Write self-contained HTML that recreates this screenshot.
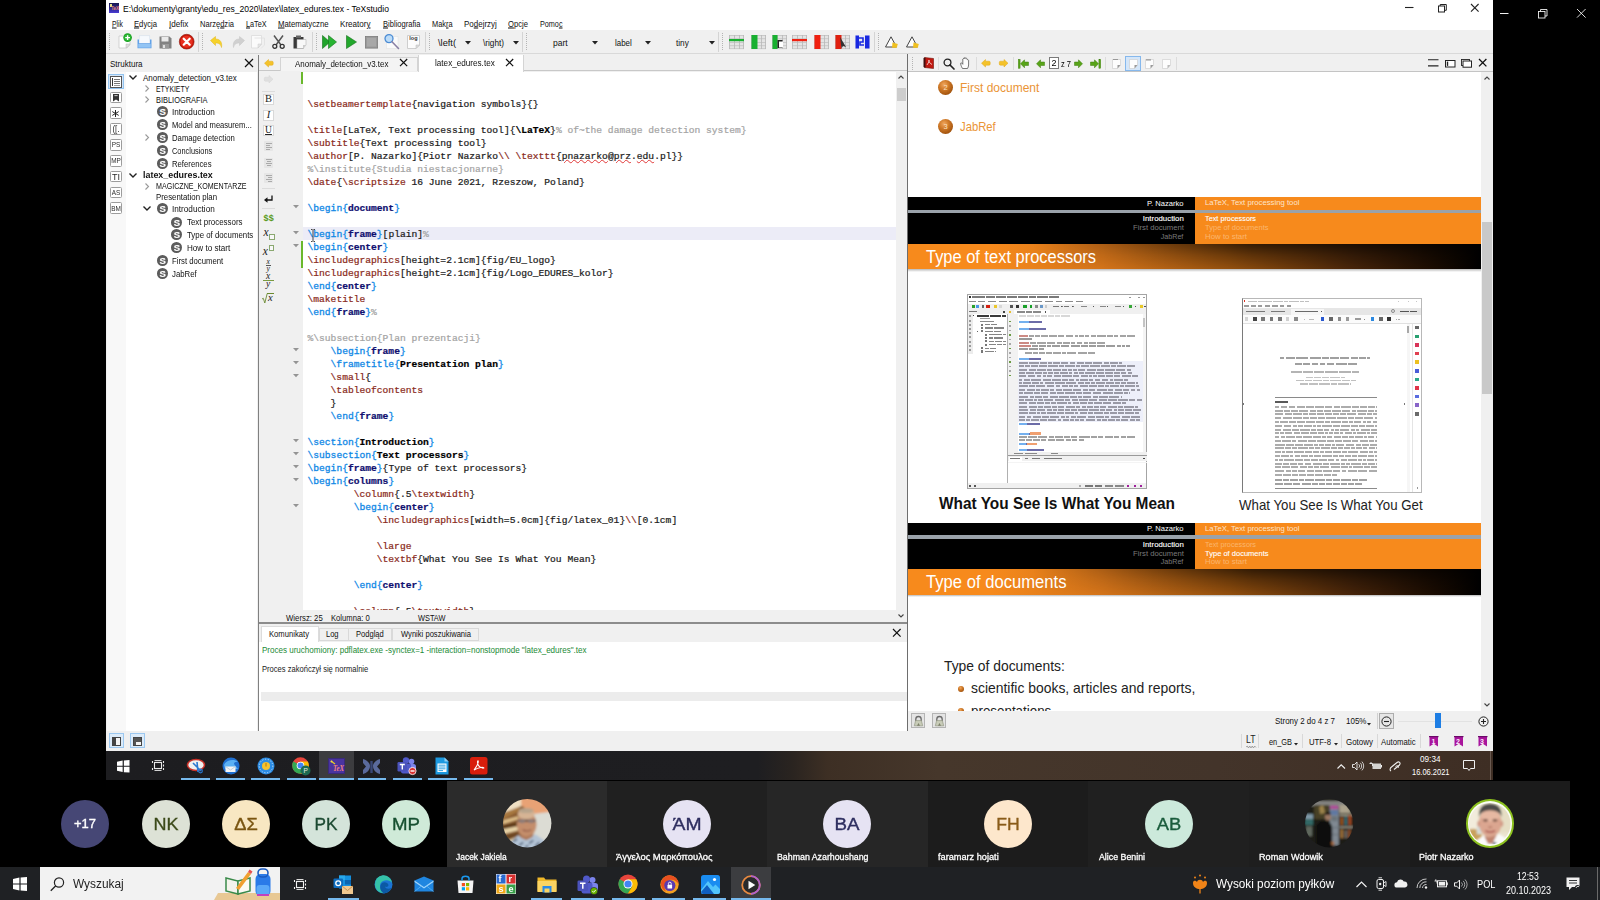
<!DOCTYPE html><html><head><meta charset="utf-8"><title>TeXstudio</title><style>
*{box-sizing:border-box;margin:0;padding:0}
html,body{width:1600px;height:900px;overflow:hidden;background:#000;font-family:"Liberation Sans",sans-serif;}
.a{position:absolute}
.t{position:absolute;white-space:nowrap;line-height:1;}
.ui{font-size:10px;color:#111;letter-spacing:-0.35px}
.mono{font-family:"Liberation Mono",monospace;font-size:9.63px;white-space:pre;position:absolute;line-height:13px;height:13px;color:#1c1c1c;letter-spacing:0;-webkit-text-stroke:0.22px currentColor}
.c{color:#8a2a20}.k{color:#1088e6;-webkit-text-stroke:0.3px #1088e6}.e{color:#101070;font-weight:bold}.b{color:#000;font-weight:bold}.g{color:#a4a4a4}
svg{position:absolute;overflow:visible}
</style></head><body><div id="root" class="a" style="left:0;top:0;width:1600px;height:900px;overflow:hidden;filter:blur(0.38px)">
<div class="a" style="left:106px;top:0px;width:1387px;height:751px;background:#f0f0f0;"></div>
<div class="a" style="left:106px;top:0px;width:1387px;height:30px;background:#ffffff;"></div>
<div class="a" style="left:108.8px;top:3px;width:10px;height:9.8px;background:linear-gradient(180deg,#16164e 0%,#2a2488 50%,#4a3cd4 100%)"></div>
<div class="a" style="left:110.3px;top:4.2px;width:1.3px;height:3px;background:#e8e08a;"></div>
<div class="t" style="left:111.2px;top:7.3px;font-size:4.5px;font-weight:bold;color:#e88a70">TeX</div>
<div class="t ui" style="left:123px;top:8.5px;transform-origin:0 50%;transform:translateY(-50%) scaleX(0.9000);font-size:9.5px;letter-spacing:0;color:#000;">E:\dokumenty\granty\edu_res_2020\latex\latex_edures.tex - TeXstudio</div>
<div class="t ui" style="left:111.6px;top:24px;transform-origin:0 50%;transform:translateY(-50%) scaleX(0.7516);font-size:9px;letter-spacing:0;"><u>P</u>lik</div>
<div class="t ui" style="left:133.75px;top:24px;transform-origin:0 50%;transform:translateY(-50%) scaleX(0.8514);font-size:9px;letter-spacing:0;"><u>E</u>dycja</div>
<div class="t ui" style="left:169.4px;top:24px;transform-origin:0 50%;transform:translateY(-50%) scaleX(0.8972);font-size:9px;letter-spacing:0;"><u>I</u>defix</div>
<div class="t ui" style="left:200.3px;top:24px;transform-origin:0 50%;transform:translateY(-50%) scaleX(0.8391);font-size:9px;letter-spacing:0;">Narzę<u>d</u>zia</div>
<div class="t ui" style="left:245.9px;top:24px;transform-origin:0 50%;transform:translateY(-50%) scaleX(0.8072);font-size:9px;letter-spacing:0;"><u>L</u>aTeX</div>
<div class="t ui" style="left:278.1px;top:24px;transform-origin:0 50%;transform:translateY(-50%) scaleX(0.8646);font-size:9px;letter-spacing:0;"><u>M</u>atematyczne</div>
<div class="t ui" style="left:340.4px;top:24px;transform-origin:0 50%;transform:translateY(-50%) scaleX(0.8967);font-size:9px;letter-spacing:0;">Kreator<u>y</u></div>
<div class="t ui" style="left:382.5px;top:24px;transform-origin:0 50%;transform:translateY(-50%) scaleX(0.8422);font-size:9px;letter-spacing:0;"><u>B</u>ibliografia</div>
<div class="t ui" style="left:431.5px;top:24px;transform-origin:0 50%;transform:translateY(-50%) scaleX(0.8238);font-size:9px;letter-spacing:0;">Mak<u>r</u>a</div>
<div class="t ui" style="left:463.75px;top:24px;transform-origin:0 50%;transform:translateY(-50%) scaleX(0.8861);font-size:9px;letter-spacing:0;">Po<u>d</u>ejrzyj</div>
<div class="t ui" style="left:508.2px;top:24px;transform-origin:0 50%;transform:translateY(-50%) scaleX(0.8464);font-size:9px;letter-spacing:0;"><u>O</u>pcje</div>
<div class="t ui" style="left:539.7px;top:24px;transform-origin:0 50%;transform:translateY(-50%) scaleX(0.8032);font-size:9px;letter-spacing:0;">Pomo<u>c</u></div>
<div class="a" style="left:106px;top:30px;width:1387px;height:24px;background:#f0f0f0;"></div>
<div class="a" style="left:106px;top:53px;width:1387px;height:1px;background:#d9d9d9;"></div>
<div class="a" style="left:109px;top:33px;width:1px;height:1px;background:#b4b4b4"></div><div class="a" style="left:109px;top:35px;width:1px;height:1px;background:#b4b4b4"></div><div class="a" style="left:109px;top:37px;width:1px;height:1px;background:#b4b4b4"></div><div class="a" style="left:109px;top:39px;width:1px;height:1px;background:#b4b4b4"></div><div class="a" style="left:109px;top:41px;width:1px;height:1px;background:#b4b4b4"></div><div class="a" style="left:109px;top:43px;width:1px;height:1px;background:#b4b4b4"></div><div class="a" style="left:109px;top:45px;width:1px;height:1px;background:#b4b4b4"></div><div class="a" style="left:109px;top:47px;width:1px;height:1px;background:#b4b4b4"></div><div class="a" style="left:109px;top:49px;width:1px;height:1px;background:#b4b4b4"></div>
<svg style="left:118px;top:35px" width="13" height="14" viewBox="0 0 13 14"><path d="M1 1H9L12 1V10L9 13H1Z" fill="#fff" stroke="#c8c8c8" stroke-width="0.8"/><path d="M8 13L12 9H8Z" fill="#ddd" stroke="#bbb" stroke-width="0.5"/><circle cx="9.6" cy="2.6" r="4.3" fill="#18a020"/><circle cx="9.6" cy="2.6" r="3.4" fill="#2cb834"/><path d="M9.6 0.2V5M7.2 2.6H12" stroke="#fff" stroke-width="1.4"/></svg>
<svg style="left:137px;top:35px" width="15" height="14" viewBox="0 0 15 14"><rect x="2.2" y="0.8" width="10.6" height="8" fill="#f6f9fd" stroke="#d0dcec" stroke-width="0.5"/><path d="M0.5 4.5V13.2H14.5V4.5H13V8.3H2V4.5Z" fill="#62a2e8"/><rect x="1.3" y="9" width="12.4" height="3.6" fill="#92c4f4"/></svg>
<svg style="left:159px;top:36px" width="13" height="13" viewBox="0 0 13 13"><path d="M0.5 0.5H10.5L12.5 2.5V12.5H0.5Z" fill="#828282"/><rect x="2.5" y="1" width="7" height="4.5" fill="#eaeaea"/><rect x="3" y="8" width="7" height="4.5" fill="#9a9a9a"/><rect x="4" y="9" width="2" height="3" fill="#e0e0e0"/></svg>
<svg style="left:179px;top:34px" width="15.4" height="15.4" viewBox="0 0 15.4 15.4"><circle cx="7.7" cy="7.7" r="7.4" fill="#c81808" stroke="#8a1008" stroke-width="0.6"/><circle cx="7.7" cy="7.7" r="6" fill="#e83020"/><path d="M4.7 4.7L10.7 10.7M10.7 4.7L4.7 10.7" stroke="#fff" stroke-width="2.2" stroke-linecap="round"/></svg>
<div class="a" style="left:198px;top:32px;width:1px;height:20px;background:#d4d4d4"></div>
<div class="a" style="left:202px;top:33px;width:1px;height:1px;background:#b4b4b4"></div><div class="a" style="left:202px;top:35px;width:1px;height:1px;background:#b4b4b4"></div><div class="a" style="left:202px;top:37px;width:1px;height:1px;background:#b4b4b4"></div><div class="a" style="left:202px;top:39px;width:1px;height:1px;background:#b4b4b4"></div><div class="a" style="left:202px;top:41px;width:1px;height:1px;background:#b4b4b4"></div><div class="a" style="left:202px;top:43px;width:1px;height:1px;background:#b4b4b4"></div><div class="a" style="left:202px;top:45px;width:1px;height:1px;background:#b4b4b4"></div><div class="a" style="left:202px;top:47px;width:1px;height:1px;background:#b4b4b4"></div><div class="a" style="left:202px;top:49px;width:1px;height:1px;background:#b4b4b4"></div>
<svg style="left:209.5px;top:35.5px" width="13" height="12" viewBox="0 0 13 12"><path d="M0.5 4.5L5.5 0.5V3C10 3 12.5 6 11.5 11.5C10.5 8 9 7 5.5 7V9.5Z" fill="#f6d22a" stroke="#e0b418" stroke-width="0.5"/></svg>
<svg style="left:231.5px;top:35.5px" width="13" height="12" viewBox="0 0 13 12"><path d="M12.5 4.5L7.5 0.5V3C3 3 0.5 6 1.5 11.5C2.5 8 4 7 7.5 7V9.5Z" fill="#d0d0d0" stroke="#c4c4c4" stroke-width="0.5"/></svg>
<svg style="left:251px;top:35px" width="14" height="14" viewBox="0 0 14 14"><path d="M0.5 0.5H10.5V9L7 13H0.5Z" fill="#fbfbfb" stroke="#dcdcdc" stroke-width="0.8"/><path d="M3.5 3H13.5V10L10 13.5" fill="none" stroke="#e0e0e0" stroke-width="0.8"/><path d="M7 13L10.5 9H7Z" fill="#e8e8e8" stroke="#c8c8c8" stroke-width="0.5"/></svg>
<svg style="left:271.5px;top:35px" width="13" height="14" viewBox="0 0 13 14"><path d="M2 0.5L9 10M11 0.5L4 10" stroke="#555" stroke-width="1.5" fill="none"/><circle cx="2.8" cy="11.3" r="2" fill="none" stroke="#333" stroke-width="1.3"/><circle cx="10.2" cy="11.3" r="2" fill="none" stroke="#333" stroke-width="1.3"/></svg>
<svg style="left:293px;top:35px" width="14" height="14" viewBox="0 0 14 14"><path d="M0.5 2H10.5V13.5H0.5Z" fill="#3a3a3a"/><rect x="3" y="0.5" width="5" height="2.6" fill="#666"/><path d="M4 4.5H13V10L10 13.5H4Z" fill="#f8f8f8" stroke="#aaa" stroke-width="0.5"/><path d="M10 13.5L13 10H10Z" fill="#ccc"/></svg>
<div class="a" style="left:312px;top:32px;width:1px;height:20px;background:#d4d4d4"></div>
<div class="a" style="left:316px;top:33px;width:1px;height:1px;background:#b4b4b4"></div><div class="a" style="left:316px;top:35px;width:1px;height:1px;background:#b4b4b4"></div><div class="a" style="left:316px;top:37px;width:1px;height:1px;background:#b4b4b4"></div><div class="a" style="left:316px;top:39px;width:1px;height:1px;background:#b4b4b4"></div><div class="a" style="left:316px;top:41px;width:1px;height:1px;background:#b4b4b4"></div><div class="a" style="left:316px;top:43px;width:1px;height:1px;background:#b4b4b4"></div><div class="a" style="left:316px;top:45px;width:1px;height:1px;background:#b4b4b4"></div><div class="a" style="left:316px;top:47px;width:1px;height:1px;background:#b4b4b4"></div><div class="a" style="left:316px;top:49px;width:1px;height:1px;background:#b4b4b4"></div>
<svg style="left:322px;top:35px" width="15" height="14" viewBox="0 0 15 14"><path d="M0.5 0.5L8 7L0.5 13.5Z" fill="#1fa32a" stroke="#127018" stroke-width="0.6"/><path d="M6.5 0.5L14.5 7L6.5 13.5Z" fill="#27b432" stroke="#127018" stroke-width="0.6"/></svg>
<svg style="left:346px;top:35px" width="11" height="14" viewBox="0 0 11 14"><path d="M0.5 0.5L10.5 7L0.5 13.5Z" fill="#22a82c" stroke="#127018" stroke-width="0.6"/></svg>
<svg style="left:364.5px;top:36px" width="13" height="12.5" viewBox="0 0 13 12.5"><rect x="0.4" y="0.4" width="12.2" height="11.7" fill="#9a9a9a" stroke="#7c7c7c" stroke-width="0.8"/><rect x="2" y="2" width="9" height="8.5" fill="#a8a8a8"/></svg>
<svg style="left:384px;top:34px" width="16" height="16" viewBox="0 0 16 16"><rect x="2.5" y="2.5" width="11.5" height="12" fill="#fafafa" stroke="#e0e0e0" stroke-width="0.5"/><circle cx="5" cy="4.6" r="4" fill="#bcdcf8" stroke="#4c8cd4" stroke-width="1.3"/><path d="M8 7.8L14.5 14.5" stroke="#8a80a4" stroke-width="1.6" stroke-linecap="round"/></svg>
<svg style="left:406.5px;top:35px" width="13" height="14" viewBox="0 0 13 14"><path d="M0.5 0.5H12.5V10L9 13.5H0.5Z" fill="#fcfcfc" stroke="#c4c4c4" stroke-width="0.8"/><path d="M9 13.5L12.5 10H9Z" fill="#ddd" stroke="#bbb" stroke-width="0.5"/></svg>
<div class="t ui" style="left:409.3px;top:38.6px;transform-origin:0 50%;transform:translateY(-50%) scaleX(1.0000);font-size:5.5px;letter-spacing:0;font-weight:bold;color:#333;">log</div>
<div class="a" style="left:425px;top:32px;width:1px;height:20px;background:#d4d4d4"></div>
<div class="a" style="left:429px;top:33px;width:1px;height:1px;background:#b4b4b4"></div><div class="a" style="left:429px;top:35px;width:1px;height:1px;background:#b4b4b4"></div><div class="a" style="left:429px;top:37px;width:1px;height:1px;background:#b4b4b4"></div><div class="a" style="left:429px;top:39px;width:1px;height:1px;background:#b4b4b4"></div><div class="a" style="left:429px;top:41px;width:1px;height:1px;background:#b4b4b4"></div><div class="a" style="left:429px;top:43px;width:1px;height:1px;background:#b4b4b4"></div><div class="a" style="left:429px;top:45px;width:1px;height:1px;background:#b4b4b4"></div><div class="a" style="left:429px;top:47px;width:1px;height:1px;background:#b4b4b4"></div><div class="a" style="left:429px;top:49px;width:1px;height:1px;background:#b4b4b4"></div>
<div class="t ui" style="left:438.4px;top:42.75px;transform-origin:0 50%;transform:translateY(-50%) scaleX(1.0284);font-size:9px;letter-spacing:0;">\left(</div>
<svg style="left:464.5px;top:40.5px" width="6" height="3.5" viewBox="0 0 6 3.5"><path d="M0 0H6L3 3.5Z" fill="#222"/></svg>
<div class="t ui" style="left:483px;top:42.75px;transform-origin:0 50%;transform:translateY(-50%) scaleX(0.9128);font-size:9px;letter-spacing:0;">\right)</div>
<svg style="left:513px;top:40.5px" width="6" height="3.5" viewBox="0 0 6 3.5"><path d="M0 0H6L3 3.5Z" fill="#222"/></svg>
<div class="a" style="left:522px;top:32px;width:1px;height:20px;background:#d4d4d4"></div>
<div class="a" style="left:526px;top:33px;width:1px;height:1px;background:#b4b4b4"></div><div class="a" style="left:526px;top:35px;width:1px;height:1px;background:#b4b4b4"></div><div class="a" style="left:526px;top:37px;width:1px;height:1px;background:#b4b4b4"></div><div class="a" style="left:526px;top:39px;width:1px;height:1px;background:#b4b4b4"></div><div class="a" style="left:526px;top:41px;width:1px;height:1px;background:#b4b4b4"></div><div class="a" style="left:526px;top:43px;width:1px;height:1px;background:#b4b4b4"></div><div class="a" style="left:526px;top:45px;width:1px;height:1px;background:#b4b4b4"></div><div class="a" style="left:526px;top:47px;width:1px;height:1px;background:#b4b4b4"></div><div class="a" style="left:526px;top:49px;width:1px;height:1px;background:#b4b4b4"></div>
<div class="t ui" style="left:552.8px;top:42.75px;transform-origin:0 50%;transform:translateY(-50%) scaleX(0.9478);font-size:9px;letter-spacing:0;">part</div>
<svg style="left:592.4px;top:40.5px" width="6" height="3.5" viewBox="0 0 6 3.5"><path d="M0 0H6L3 3.5Z" fill="#222"/></svg>
<div class="t ui" style="left:615.3px;top:42.75px;transform-origin:0 50%;transform:translateY(-50%) scaleX(0.8782);font-size:9px;letter-spacing:0;">label</div>
<svg style="left:644.5px;top:40.5px" width="6" height="3.5" viewBox="0 0 6 3.5"><path d="M0 0H6L3 3.5Z" fill="#222"/></svg>
<div class="t ui" style="left:675.6px;top:42.75px;transform-origin:0 50%;transform:translateY(-50%) scaleX(0.9139);font-size:9px;letter-spacing:0;">tiny</div>
<svg style="left:709.2px;top:40.5px" width="6" height="3.5" viewBox="0 0 6 3.5"><path d="M0 0H6L3 3.5Z" fill="#222"/></svg>
<div class="a" style="left:718px;top:32px;width:1px;height:20px;background:#d4d4d4"></div>
<div class="a" style="left:722px;top:33px;width:1px;height:1px;background:#b4b4b4"></div><div class="a" style="left:722px;top:35px;width:1px;height:1px;background:#b4b4b4"></div><div class="a" style="left:722px;top:37px;width:1px;height:1px;background:#b4b4b4"></div><div class="a" style="left:722px;top:39px;width:1px;height:1px;background:#b4b4b4"></div><div class="a" style="left:722px;top:41px;width:1px;height:1px;background:#b4b4b4"></div><div class="a" style="left:722px;top:43px;width:1px;height:1px;background:#b4b4b4"></div><div class="a" style="left:722px;top:45px;width:1px;height:1px;background:#b4b4b4"></div><div class="a" style="left:722px;top:47px;width:1px;height:1px;background:#b4b4b4"></div><div class="a" style="left:722px;top:49px;width:1px;height:1px;background:#b4b4b4"></div>
<svg style="left:728.5px;top:35px" width="15" height="14" viewBox="0 0 15 14"><rect x="0" y="0" width="15" height="14" fill="#e4e4e4"/><rect x="0" y="0" width="0.7" height="14" fill="#b0b0b0"/><rect x="5" y="0" width="0.7" height="14" fill="#b0b0b0"/><rect x="10" y="0" width="0.7" height="14" fill="#b0b0b0"/><rect x="14.3" y="0" width="0.7" height="14" fill="#b0b0b0"/><rect x="0" y="0" width="15" height="0.6" fill="#b8b8b8"/><rect x="0" y="3.5" width="15" height="0.6" fill="#b8b8b8"/><rect x="0" y="7" width="15" height="0.6" fill="#b8b8b8"/><rect x="0" y="10.5" width="15" height="0.6" fill="#b8b8b8"/><rect x="0" y="13.5" width="15" height="0.6" fill="#b8b8b8"/><rect x="0" y="4" width="15" height="2.2" fill="#18b030"/></svg>
<svg style="left:750.5px;top:35px" width="15" height="14" viewBox="0 0 15 14"><rect x="0" y="0" width="15" height="14" fill="#e4e4e4"/><rect x="0" y="0" width="0.7" height="14" fill="#b0b0b0"/><rect x="5" y="0" width="0.7" height="14" fill="#b0b0b0"/><rect x="10" y="0" width="0.7" height="14" fill="#b0b0b0"/><rect x="14.3" y="0" width="0.7" height="14" fill="#b0b0b0"/><rect x="0" y="0" width="15" height="0.6" fill="#b8b8b8"/><rect x="0" y="3.5" width="15" height="0.6" fill="#b8b8b8"/><rect x="0" y="7" width="15" height="0.6" fill="#b8b8b8"/><rect x="0" y="10.5" width="15" height="0.6" fill="#b8b8b8"/><rect x="0" y="13.5" width="15" height="0.6" fill="#b8b8b8"/><rect x="0.5" y="0" width="6" height="14" fill="#18b030"/></svg>
<svg style="left:771.5px;top:35px" width="15" height="14" viewBox="0 0 15 14"><rect x="0" y="0" width="15" height="14" fill="#e4e4e4"/><rect x="0" y="0" width="0.7" height="14" fill="#b0b0b0"/><rect x="5" y="0" width="0.7" height="14" fill="#b0b0b0"/><rect x="10" y="0" width="0.7" height="14" fill="#b0b0b0"/><rect x="14.3" y="0" width="0.7" height="14" fill="#b0b0b0"/><rect x="0" y="0" width="15" height="0.6" fill="#b8b8b8"/><rect x="0" y="3.5" width="15" height="0.6" fill="#b8b8b8"/><rect x="0" y="7" width="15" height="0.6" fill="#b8b8b8"/><rect x="0" y="10.5" width="15" height="0.6" fill="#b8b8b8"/><rect x="0" y="13.5" width="15" height="0.6" fill="#b8b8b8"/><rect x="0.5" y="0" width="5" height="14" fill="#18b030"/><rect x="5.5" y="5" width="5" height="8" fill="#222"/><rect x="7" y="6.5" width="4" height="6" fill="#fff"/></svg>
<svg style="left:791.5px;top:35px" width="15" height="14" viewBox="0 0 15 14"><rect x="0" y="0" width="15" height="14" fill="#e4e4e4"/><rect x="0" y="0" width="0.7" height="14" fill="#b0b0b0"/><rect x="5" y="0" width="0.7" height="14" fill="#b0b0b0"/><rect x="10" y="0" width="0.7" height="14" fill="#b0b0b0"/><rect x="14.3" y="0" width="0.7" height="14" fill="#b0b0b0"/><rect x="0" y="0" width="15" height="0.6" fill="#b8b8b8"/><rect x="0" y="3.5" width="15" height="0.6" fill="#b8b8b8"/><rect x="0" y="7" width="15" height="0.6" fill="#b8b8b8"/><rect x="0" y="10.5" width="15" height="0.6" fill="#b8b8b8"/><rect x="0" y="13.5" width="15" height="0.6" fill="#b8b8b8"/><rect x="0" y="4" width="15" height="2.2" fill="#f02010"/></svg>
<svg style="left:813.5px;top:35px" width="15" height="14" viewBox="0 0 15 14"><rect x="0" y="0" width="15" height="14" fill="#e4e4e4"/><rect x="0" y="0" width="0.7" height="14" fill="#b0b0b0"/><rect x="5" y="0" width="0.7" height="14" fill="#b0b0b0"/><rect x="10" y="0" width="0.7" height="14" fill="#b0b0b0"/><rect x="14.3" y="0" width="0.7" height="14" fill="#b0b0b0"/><rect x="0" y="0" width="15" height="0.6" fill="#b8b8b8"/><rect x="0" y="3.5" width="15" height="0.6" fill="#b8b8b8"/><rect x="0" y="7" width="15" height="0.6" fill="#b8b8b8"/><rect x="0" y="10.5" width="15" height="0.6" fill="#b8b8b8"/><rect x="0" y="13.5" width="15" height="0.6" fill="#b8b8b8"/><rect x="0.5" y="0" width="6" height="14" fill="#f02010"/></svg>
<svg style="left:834.5px;top:35px" width="15" height="14" viewBox="0 0 15 14"><rect x="0" y="0" width="15" height="14" fill="#e4e4e4"/><rect x="0" y="0" width="0.7" height="14" fill="#b0b0b0"/><rect x="5" y="0" width="0.7" height="14" fill="#b0b0b0"/><rect x="10" y="0" width="0.7" height="14" fill="#b0b0b0"/><rect x="14.3" y="0" width="0.7" height="14" fill="#b0b0b0"/><rect x="0" y="0" width="15" height="0.6" fill="#b8b8b8"/><rect x="0" y="3.5" width="15" height="0.6" fill="#b8b8b8"/><rect x="0" y="7" width="15" height="0.6" fill="#b8b8b8"/><rect x="0" y="10.5" width="15" height="0.6" fill="#b8b8b8"/><rect x="0" y="13.5" width="15" height="0.6" fill="#b8b8b8"/><rect x="0.5" y="0" width="6" height="14" fill="#e02010"/><path d="M5 2L11 12L8 11L6.5 13.5Z" fill="#333"/></svg>
<svg style="left:854.5px;top:35px" width="15" height="14" viewBox="0 0 15 14"><rect x="0" y="0" width="15" height="14" fill="#e8e8f4"/><rect x="0.5" y="0.5" width="3.5" height="13" fill="#1828e0"/><rect x="10" y="0.5" width="4.5" height="13" fill="#1828e0"/><path d="M4 3H8V7H5V10H9" stroke="#1828e0" stroke-width="1.6" fill="none"/></svg>
<div class="a" style="left:873.5px;top:32px;width:1px;height:20px;background:#d4d4d4"></div>
<div class="a" style="left:878px;top:33px;width:1px;height:1px;background:#b4b4b4"></div><div class="a" style="left:878px;top:35px;width:1px;height:1px;background:#b4b4b4"></div><div class="a" style="left:878px;top:37px;width:1px;height:1px;background:#b4b4b4"></div><div class="a" style="left:878px;top:39px;width:1px;height:1px;background:#b4b4b4"></div><div class="a" style="left:878px;top:41px;width:1px;height:1px;background:#b4b4b4"></div><div class="a" style="left:878px;top:43px;width:1px;height:1px;background:#b4b4b4"></div><div class="a" style="left:878px;top:45px;width:1px;height:1px;background:#b4b4b4"></div><div class="a" style="left:878px;top:47px;width:1px;height:1px;background:#b4b4b4"></div><div class="a" style="left:878px;top:49px;width:1px;height:1px;background:#b4b4b4"></div>
<svg style="left:884.5px;top:36px" width="13" height="12" viewBox="0 0 13 12"><path d="M6 0.8L11.5 11H0.5Z" fill="#fdfdfd" stroke="#444" stroke-width="1"/><path d="M7.5 6.5L12.8 8L11.8 11.8H7Z" fill="#f0c020"/></svg>
<svg style="left:905.5px;top:36px" width="13" height="12" viewBox="0 0 13 12"><path d="M6 0.8L11.5 11H0.5Z" fill="#fdfdfd" stroke="#444" stroke-width="1"/><path d="M7.5 6.5L12.8 8L11.8 11.8H7Z" fill="#f0c020"/></svg>
<div class="a" style="left:106px;top:55px;width:151px;height:676px;background:#f0f0f0;"></div>
<div class="a" style="left:126px;top:72px;width:131px;height:659px;background:#ffffff;"></div>
<div class="t ui" style="left:110px;top:63.5px;transform-origin:0 50%;transform:translateY(-50%) scaleX(0.8900);font-size:9px;letter-spacing:0;">Struktura</div>
<svg style="left:244.5px;top:59px" width="8" height="8" viewBox="0 0 8 8"><path d="M0 0L8 8M8 0L0 8" stroke="#111" stroke-width="1.2" fill="none"/></svg>
<div class="a" style="left:106.5px;top:72px;width:19px;height:659px;background:#f8f8f8;"></div>
<div class="a" style="left:108.1px;top:73.7px;width:16px;height:15.4px;border:1px solid #94c4f0;background:#d4e6f8"></div>
<div class="a" style="left:110.3px;top:76.3px;width:11.4px;height:11.4px;border:1px solid #555;background:#fff"></div>
<div class="a" style="left:112.2px;top:78.2px;width:1px;height:7.6px;background:#333;"></div>
<div class="a" style="left:114.2px;top:79px;width:5.5px;height:1px;background:#777;"></div>
<div class="a" style="left:114.2px;top:81px;width:5.5px;height:1px;background:#777;"></div>
<div class="a" style="left:114.2px;top:83px;width:5.5px;height:1px;background:#777;"></div>
<div class="a" style="left:114.2px;top:85px;width:5.5px;height:0.8px;background:#999;"></div>
<div class="a" style="left:109.8px;top:91.5px;width:11.8px;height:11.8px;border:1px solid #9c9c9c;background:#fff;border-radius:1.5px"></div>
<svg style="left:112.7px;top:93.60000000000001px" width="6" height="7.6" viewBox="0 0 6 7.6"><path d="M0 0H6V7.6L3 5.4L0 7.6Z" fill="#333"/><rect x="1.4" y="1.2" width="3.2" height="0.9" fill="#ddd"/></svg>
<div class="a" style="left:109.8px;top:107.39999999999999px;width:11.8px;height:11.8px;border:1px solid #9c9c9c;background:#fff;border-radius:1.5px"></div>
<svg style="left:112.2px;top:109.8px" width="7" height="7" viewBox="0 0 7 7"><path d="M3.5 0V7M0.3 1.6L6.7 5.4M6.7 1.6L0.3 5.4" stroke="#222" stroke-width="1"/></svg>
<div class="a" style="left:109.8px;top:123.19999999999999px;width:11.8px;height:11.8px;border:1px solid #9c9c9c;background:#fff;border-radius:1.5px"></div>
<div class="t " style="left:-384.3px;width:1000px;text-align:center;top:129.4px;transform-origin:50% 50%;transform:translateY(-50%) scaleX(0.9500);font-size:8.5px;letter-spacing:0;color:#2a2a2a;">([.</div>
<div class="a" style="left:109.8px;top:139.1px;width:11.8px;height:11.8px;border:1px solid #9c9c9c;background:#fff;border-radius:1.5px"></div>
<div class="t " style="left:-384.3px;width:1000px;text-align:center;top:145.3px;transform-origin:50% 50%;transform:translateY(-50%) scaleX(0.8200);font-size:7.8px;letter-spacing:0;color:#2a2a2a;">PS</div>
<div class="a" style="left:109.8px;top:155.1px;width:11.8px;height:11.8px;border:1px solid #9c9c9c;background:#fff;border-radius:1.5px"></div>
<div class="t " style="left:-384.3px;width:1000px;text-align:center;top:161.3px;transform-origin:50% 50%;transform:translateY(-50%) scaleX(0.8200);font-size:7.8px;letter-spacing:0;color:#2a2a2a;">MP</div>
<div class="a" style="left:109.8px;top:170.7px;width:11.8px;height:11.8px;border:1px solid #9c9c9c;background:#fff;border-radius:1.5px"></div>
<div class="t " style="left:-384.3px;width:1000px;text-align:center;top:176.9px;transform-origin:50% 50%;transform:translateY(-50%) scaleX(0.9500);font-size:9.5px;letter-spacing:0;color:#2a2a2a;">TI</div>
<div class="a" style="left:109.8px;top:186.6px;width:11.8px;height:11.8px;border:1px solid #9c9c9c;background:#fff;border-radius:1.5px"></div>
<div class="t " style="left:-384.3px;width:1000px;text-align:center;top:192.8px;transform-origin:50% 50%;transform:translateY(-50%) scaleX(0.8200);font-size:7.8px;letter-spacing:0;color:#2a2a2a;">AS</div>
<div class="a" style="left:109.8px;top:202.4px;width:11.8px;height:11.8px;border:1px solid #9c9c9c;background:#fff;border-radius:1.5px"></div>
<div class="t " style="left:-384.3px;width:1000px;text-align:center;top:208.60000000000002px;transform-origin:50% 50%;transform:translateY(-50%) scaleX(0.8200);font-size:7.8px;letter-spacing:0;color:#2a2a2a;">BM</div>
<svg style="left:128.5px;top:75.0px" width="8" height="5" viewBox="0 0 8 5"><path d="M0.5 0.5L4 4L7.5 0.5" stroke="#222" stroke-width="1.4" fill="none"/></svg>
<div class="t ui" style="left:142.5px;top:77.8px;transform-origin:0 50%;transform:translateY(-50%) scaleX(0.8881);font-size:9px;letter-spacing:0;">Anomaly_detection_v3.tex</div>
<svg style="left:145px;top:85.0px" width="5" height="7" viewBox="0 0 5 7"><path d="M0.5 0.5L3.5 3.5L0.5 6.5" stroke="#999" stroke-width="1.1" fill="none"/></svg>
<div class="t ui" style="left:156px;top:88.8px;transform-origin:0 50%;transform:translateY(-50%) scaleX(0.7642);font-size:9px;letter-spacing:0;">ETYKIETY</div>
<svg style="left:145px;top:95.7px" width="5" height="7" viewBox="0 0 5 7"><path d="M0.5 0.5L3.5 3.5L0.5 6.5" stroke="#999" stroke-width="1.1" fill="none"/></svg>
<div class="t ui" style="left:156px;top:99.5px;transform-origin:0 50%;transform:translateY(-50%) scaleX(0.8238);font-size:9px;letter-spacing:0;">BIBLIOGRAFIA</div>
<div class="a" style="left:157.0px;top:105.8px;width:11.2px;height:11.2px;border-radius:50%;background:radial-gradient(circle,#6a6a6a 0%,#5a5a5a 60%,#484848 100%)"></div><div class="t" style="left:159.45px;top:106.7px;font-size:9.5px;font-weight:bold;color:#fff;-webkit-text-stroke:0.1px #fff">S</div>
<div class="t ui" style="left:172px;top:111.5px;transform-origin:0 50%;transform:translateY(-50%) scaleX(0.9090);font-size:9px;letter-spacing:0;">Introduction</div>
<div class="a" style="left:157.0px;top:118.8px;width:11.2px;height:11.2px;border-radius:50%;background:radial-gradient(circle,#6a6a6a 0%,#5a5a5a 60%,#484848 100%)"></div><div class="t" style="left:159.45px;top:119.7px;font-size:9.5px;font-weight:bold;color:#fff;-webkit-text-stroke:0.1px #fff">S</div>
<div class="t ui" style="left:172px;top:124.5px;transform-origin:0 50%;transform:translateY(-50%) scaleX(0.8435);font-size:9px;letter-spacing:0;">Model and measurem...</div>
<svg style="left:145px;top:133.7px" width="5" height="7" viewBox="0 0 5 7"><path d="M0.5 0.5L3.5 3.5L0.5 6.5" stroke="#999" stroke-width="1.1" fill="none"/></svg>
<div class="a" style="left:157.0px;top:131.79999999999998px;width:11.2px;height:11.2px;border-radius:50%;background:radial-gradient(circle,#6a6a6a 0%,#5a5a5a 60%,#484848 100%)"></div><div class="t" style="left:159.45px;top:132.7px;font-size:9.5px;font-weight:bold;color:#fff;-webkit-text-stroke:0.1px #fff">S</div>
<div class="t ui" style="left:172px;top:137.5px;transform-origin:0 50%;transform:translateY(-50%) scaleX(0.8590);font-size:9px;letter-spacing:0;">Damage detection</div>
<div class="a" style="left:157.0px;top:144.79999999999998px;width:11.2px;height:11.2px;border-radius:50%;background:radial-gradient(circle,#6a6a6a 0%,#5a5a5a 60%,#484848 100%)"></div><div class="t" style="left:159.45px;top:145.7px;font-size:9.5px;font-weight:bold;color:#fff;-webkit-text-stroke:0.1px #fff">S</div>
<div class="t ui" style="left:172px;top:150.5px;transform-origin:0 50%;transform:translateY(-50%) scaleX(0.8210);font-size:9px;letter-spacing:0;">Conclusions</div>
<div class="a" style="left:157.0px;top:157.79999999999998px;width:11.2px;height:11.2px;border-radius:50%;background:radial-gradient(circle,#6a6a6a 0%,#5a5a5a 60%,#484848 100%)"></div><div class="t" style="left:159.45px;top:158.7px;font-size:9.5px;font-weight:bold;color:#fff;-webkit-text-stroke:0.1px #fff">S</div>
<div class="t ui" style="left:172px;top:163.5px;transform-origin:0 50%;transform:translateY(-50%) scaleX(0.8582);font-size:9px;letter-spacing:0;">References</div>
<svg style="left:128.5px;top:172.5px" width="8" height="5" viewBox="0 0 8 5"><path d="M0.5 0.5L4 4L7.5 0.5" stroke="#222" stroke-width="1.4" fill="none"/></svg>
<div class="t ui" style="left:142.5px;top:175.3px;transform-origin:0 50%;transform:translateY(-50%) scaleX(0.9888);font-size:9px;letter-spacing:0;font-weight:bold;">latex_edures.tex</div>
<svg style="left:145px;top:182.5px" width="5" height="7" viewBox="0 0 5 7"><path d="M0.5 0.5L3.5 3.5L0.5 6.5" stroke="#999" stroke-width="1.1" fill="none"/></svg>
<div class="t ui" style="left:156px;top:186.3px;transform-origin:0 50%;transform:translateY(-50%) scaleX(0.7915);font-size:9px;letter-spacing:0;">MAGICZNE_KOMENTARZE</div>
<div class="t ui" style="left:156px;top:197.0px;transform-origin:0 50%;transform:translateY(-50%) scaleX(0.8708);font-size:9px;letter-spacing:0;">Presentation plan</div>
<svg style="left:143px;top:206.2px" width="8" height="5" viewBox="0 0 8 5"><path d="M0.5 0.5L4 4L7.5 0.5" stroke="#222" stroke-width="1.4" fill="none"/></svg>
<div class="a" style="left:157.0px;top:203.29999999999998px;width:11.2px;height:11.2px;border-radius:50%;background:radial-gradient(circle,#6a6a6a 0%,#5a5a5a 60%,#484848 100%)"></div><div class="t" style="left:159.45px;top:204.2px;font-size:9.5px;font-weight:bold;color:#fff;-webkit-text-stroke:0.1px #fff">S</div>
<div class="t ui" style="left:172px;top:209.0px;transform-origin:0 50%;transform:translateY(-50%) scaleX(0.9090);font-size:9px;letter-spacing:0;">Introduction</div>
<div class="a" style="left:171.2px;top:216.6px;width:11.2px;height:11.2px;border-radius:50%;background:radial-gradient(circle,#6a6a6a 0%,#5a5a5a 60%,#484848 100%)"></div><div class="t" style="left:173.64999999999998px;top:217.5px;font-size:9.5px;font-weight:bold;color:#fff;-webkit-text-stroke:0.1px #fff">S</div>
<div class="t ui" style="left:186.5px;top:222.3px;transform-origin:0 50%;transform:translateY(-50%) scaleX(0.8806);font-size:9px;letter-spacing:0;">Text processors</div>
<div class="a" style="left:171.2px;top:229.29999999999998px;width:11.2px;height:11.2px;border-radius:50%;background:radial-gradient(circle,#6a6a6a 0%,#5a5a5a 60%,#484848 100%)"></div><div class="t" style="left:173.64999999999998px;top:230.2px;font-size:9.5px;font-weight:bold;color:#fff;-webkit-text-stroke:0.1px #fff">S</div>
<div class="t ui" style="left:186.5px;top:235.0px;transform-origin:0 50%;transform:translateY(-50%) scaleX(0.8712);font-size:9px;letter-spacing:0;">Type of documents</div>
<div class="a" style="left:171.2px;top:242.29999999999998px;width:11.2px;height:11.2px;border-radius:50%;background:radial-gradient(circle,#6a6a6a 0%,#5a5a5a 60%,#484848 100%)"></div><div class="t" style="left:173.64999999999998px;top:243.2px;font-size:9.5px;font-weight:bold;color:#fff;-webkit-text-stroke:0.1px #fff">S</div>
<div class="t ui" style="left:186.5px;top:248.0px;transform-origin:0 50%;transform:translateY(-50%) scaleX(0.9008);font-size:9px;letter-spacing:0;">How to start</div>
<div class="a" style="left:157.0px;top:255.29999999999998px;width:11.2px;height:11.2px;border-radius:50%;background:radial-gradient(circle,#6a6a6a 0%,#5a5a5a 60%,#484848 100%)"></div><div class="t" style="left:159.45px;top:256.2px;font-size:9.5px;font-weight:bold;color:#fff;-webkit-text-stroke:0.1px #fff">S</div>
<div class="t ui" style="left:172px;top:261.0px;transform-origin:0 50%;transform:translateY(-50%) scaleX(0.8610);font-size:9px;letter-spacing:0;">First document</div>
<div class="a" style="left:157.0px;top:268.3px;width:11.2px;height:11.2px;border-radius:50%;background:radial-gradient(circle,#6a6a6a 0%,#5a5a5a 60%,#484848 100%)"></div><div class="t" style="left:159.45px;top:269.2px;font-size:9.5px;font-weight:bold;color:#fff;-webkit-text-stroke:0.1px #fff">S</div>
<div class="t ui" style="left:172px;top:274.0px;transform-origin:0 50%;transform:translateY(-50%) scaleX(0.8679);font-size:9px;letter-spacing:0;">JabRef</div>
<div class="a" style="left:259px;top:55px;width:649px;height:17px;background:#f0f0f0;"></div>
<div class="a" style="left:259px;top:72px;width:19px;height:551px;background:#f0f0f0;"></div>
<div class="a" style="left:278px;top:72px;width:25px;height:540px;background:#f0f0f0;"></div>
<div class="a" style="left:303px;top:72px;width:593px;height:540px;background:#ffffff;"></div>
<div class="a" style="left:896px;top:72px;width:11px;height:551px;background:#f0f0f0;"></div>
<div class="a" style="left:907px;top:55px;width:1px;height:696px;background:#808080;"></div>
<div class="a" style="left:303px;top:227px;width:593px;height:13.3px;background:#ececf7;"></div>
<div class="a" style="left:300.8px;top:72px;width:2px;height:12px;background:#6ab82c;"></div>
<div class="a" style="left:300.8px;top:241px;width:2px;height:26.5px;background:#6ab82c;"></div>
<div class="a" style="left:304px;top:72px;width:592px;height:540px;overflow:hidden">
<div class="mono" style="left:3.50px;top:26.2px"><span class="c">\setbeamertemplate</span>{navigation symbols}{}</div>
<div class="mono" style="left:3.50px;top:52.2px"><span class="c">\title</span>[LaTeX, Text processing tool]{<span class="b">\LaTeX</span>}<span class="g">% of~the damage detection system}</span></div>
<div class="mono" style="left:3.50px;top:65.2px"><span class="c">\subtitle</span>{Text processing tool}</div>
<div class="mono" style="left:3.50px;top:78.2px"><span class="c">\author</span>[P. Nazarko]{Piotr Nazarko<span class="c">\\</span> <span class="c">\texttt</span>{<span style="text-decoration:underline wavy #e03838 0.6px;text-underline-offset:0.2px">pnazarko</span>@<span style="text-decoration:underline wavy #e03838 0.6px;text-underline-offset:0.2px">prz</span>.<span style="text-decoration:underline wavy #e03838 0.6px;text-underline-offset:0.2px">edu</span>.pl}}</div>
<div class="mono" style="left:3.50px;top:91.2px"><span class="g">%\institute{Studia niestacjonarne}</span></div>
<div class="mono" style="left:3.50px;top:104.2px"><span class="c">\date</span>{<span class="c">\scriptsize</span> 16 June 2021, Rzeszow, Poland}</div>
<div class="mono" style="left:3.50px;top:130.2px"><span class="k">\begin{</span><span class="e">document</span><span class="k">}</span></div>
<div class="mono" style="left:3.50px;top:156.2px"><span class="k">\begin{</span><span class="e">frame</span><span class="k">}</span>[plain]<span class="g">%</span></div>
<div class="mono" style="left:3.50px;top:169.2px"><span class="k">\begin{</span><span class="e">center</span><span class="k">}</span></div>
<div class="mono" style="left:3.50px;top:182.2px"><span class="c">\includegraphics</span>[height=2.1cm]{fig/EU_logo}</div>
<div class="mono" style="left:3.50px;top:195.2px"><span class="c">\includegraphics</span>[height=2.1cm]{fig/Logo_EDURES_kolor}</div>
<div class="mono" style="left:3.50px;top:208.2px"><span class="k">\end{</span><span class="e">center</span><span class="k">}</span></div>
<div class="mono" style="left:3.50px;top:221.2px"><span class="c">\maketitle</span></div>
<div class="mono" style="left:3.50px;top:234.2px"><span class="k">\end{</span><span class="e">frame</span><span class="k">}</span><span class="g">%</span></div>
<div class="mono" style="left:3.50px;top:260.2px"><span class="g">%\subsection{Plan prezentacji}</span></div>
<div class="mono" style="left:26.60px;top:273.2px"><span class="k">\begin{</span><span class="e">frame</span><span class="k">}</span></div>
<div class="mono" style="left:26.60px;top:286.2px"><span class="k">\frametitle{</span><span class="b">Presentation plan</span><span class="k">}</span></div>
<div class="mono" style="left:26.60px;top:299.2px"><span class="c">\small</span>{</div>
<div class="mono" style="left:26.60px;top:312.2px"><span class="c">\tableofcontents</span></div>
<div class="mono" style="left:26.60px;top:325.2px">}</div>
<div class="mono" style="left:26.60px;top:338.2px"><span class="k">\end{</span><span class="e">frame</span><span class="k">}</span></div>
<div class="mono" style="left:3.50px;top:364.2px"><span class="k">\section{</span><span class="b">Introduction</span><span class="k">}</span></div>
<div class="mono" style="left:3.50px;top:377.2px"><span class="k">\subsection{</span><span class="b">Text processors</span><span class="k">}</span></div>
<div class="mono" style="left:3.50px;top:390.2px"><span class="k">\begin{</span><span class="e">frame</span><span class="k">}</span>{Type of text processors}</div>
<div class="mono" style="left:3.50px;top:403.2px"><span class="k">\begin{</span><span class="e">columns</span><span class="k">}</span></div>
<div class="mono" style="left:49.70px;top:416.2px"><span class="c">\column</span>{.5<span class="c">\textwidth</span>}</div>
<div class="mono" style="left:49.70px;top:429.2px"><span class="k">\begin{</span><span class="e">center</span><span class="k">}</span></div>
<div class="mono" style="left:72.80px;top:442.2px"><span class="c">\includegraphics</span>[width=5.0cm]{fig/latex_01}<span class="c">\\</span>[0.1cm]</div>
<div class="mono" style="left:72.80px;top:468.2px"><span class="c">\large</span></div>
<div class="mono" style="left:72.80px;top:481.2px"><span class="c">\textbf</span>{What You See Is What You Mean}</div>
<div class="mono" style="left:49.70px;top:507.2px"><span class="k">\end{</span><span class="e">center</span><span class="k">}</span></div>
<div class="mono" style="left:49.70px;top:533.2px"><span class="c">\column</span>{.5<span class="c">\textwidth</span>}</div>
</div>
<svg style="left:310.5px;top:228.5px" width="4" height="13" viewBox="0 0 4 13"><path d="M0 0.5H1.5M2.5 0.5H4M0 12.5H1.5M2.5 12.5H4M2 0.8V12.2" stroke="#333" stroke-width="0.9" fill="none"/></svg>
<svg style="left:292.5px;top:204.9px" width="6" height="3.2" viewBox="0 0 6 3.2"><path d="M0 0H6L3 3.2Z" fill="#949494"/></svg>
<svg style="left:292.5px;top:230.9px" width="6" height="3.2" viewBox="0 0 6 3.2"><path d="M0 0H6L3 3.2Z" fill="#949494"/></svg>
<svg style="left:292.5px;top:243.9px" width="6" height="3.2" viewBox="0 0 6 3.2"><path d="M0 0H6L3 3.2Z" fill="#949494"/></svg>
<svg style="left:292.5px;top:347.9px" width="6" height="3.2" viewBox="0 0 6 3.2"><path d="M0 0H6L3 3.2Z" fill="#949494"/></svg>
<svg style="left:292.5px;top:360.9px" width="6" height="3.2" viewBox="0 0 6 3.2"><path d="M0 0H6L3 3.2Z" fill="#949494"/></svg>
<svg style="left:292.5px;top:373.9px" width="6" height="3.2" viewBox="0 0 6 3.2"><path d="M0 0H6L3 3.2Z" fill="#949494"/></svg>
<svg style="left:292.5px;top:438.9px" width="6" height="3.2" viewBox="0 0 6 3.2"><path d="M0 0H6L3 3.2Z" fill="#949494"/></svg>
<svg style="left:292.5px;top:451.9px" width="6" height="3.2" viewBox="0 0 6 3.2"><path d="M0 0H6L3 3.2Z" fill="#949494"/></svg>
<svg style="left:292.5px;top:464.9px" width="6" height="3.2" viewBox="0 0 6 3.2"><path d="M0 0H6L3 3.2Z" fill="#949494"/></svg>
<svg style="left:292.5px;top:477.9px" width="6" height="3.2" viewBox="0 0 6 3.2"><path d="M0 0H6L3 3.2Z" fill="#949494"/></svg>
<svg style="left:292.5px;top:503.9px" width="6" height="3.2" viewBox="0 0 6 3.2"><path d="M0 0H6L3 3.2Z" fill="#949494"/></svg>
<div class="a" style="left:259px;top:70px;width:649px;height:1px;background:#c8c8c8;"></div>
<svg style="left:264px;top:58.5px" width="9.5" height="8.5" viewBox="0 0 9.5 8.5"><path d="M0.5 4.2L4.5 0.5V2.2H8A1.2 1.2 0 0 1 9.2 3.4V5A1.2 1.2 0 0 1 8 6.2H4.5V8Z" fill="#f4c22a" stroke="#e0a818" stroke-width="0.5"/></svg>
<svg style="left:264px;top:75px" width="9.5" height="8.5" viewBox="0 0 9.5 8.5"><path d="M9 4.2L5 0.5V2.2H1.5A1.2 1.2 0 0 0 0.3 3.4V5A1.2 1.2 0 0 0 1.5 6.2H5V8Z" fill="#e0e0e0" stroke="#d4d4d4" stroke-width="0.5"/></svg>
<div class="a" style="left:280px;top:57px;width:138px;height:14px;background:#f4f4f4;border:1px solid #d4d4d4;border-bottom:none"></div>
<div class="t ui" style="left:295.4px;top:63.75px;transform-origin:0 50%;transform:translateY(-50%) scaleX(0.8847);font-size:9px;letter-spacing:0;">Anomaly_detection_v3.tex</div>
<svg style="left:400.15px;top:59.4px" width="7.2" height="7.2" viewBox="0 0 7.2 7.2"><path d="M0 0L7.2 7.2M7.2 0L0 7.2" stroke="#111" stroke-width="1.2" fill="none"/></svg>
<div class="a" style="left:418px;top:55px;width:106px;height:17px;background:#fff;border-left:1px solid #d4d4d4;border-right:1px solid #d4d4d4"></div>
<div class="t ui" style="left:435.25px;top:62.75px;transform-origin:0 50%;transform:translateY(-50%) scaleX(0.9047);font-size:9px;letter-spacing:0;">latex_edures.tex</div>
<svg style="left:506.4px;top:58.699999999999996px" width="7.2" height="7.2" viewBox="0 0 7.2 7.2"><path d="M0 0L7.2 7.2M7.2 0L0 7.2" stroke="#111" stroke-width="1.2" fill="none"/></svg>
<div class="a" style="left:908px;top:55px;width:585px;height:16px;background:#f0f0f0;"></div>
<div class="a" style="left:908px;top:71px;width:585px;height:1px;background:#c4c4c4;"></div>
<div class="a" style="left:912px;top:57px;width:1px;height:1px;background:#b4b4b4"></div><div class="a" style="left:912px;top:59px;width:1px;height:1px;background:#b4b4b4"></div><div class="a" style="left:912px;top:61px;width:1px;height:1px;background:#b4b4b4"></div><div class="a" style="left:912px;top:63px;width:1px;height:1px;background:#b4b4b4"></div><div class="a" style="left:912px;top:65px;width:1px;height:1px;background:#b4b4b4"></div><div class="a" style="left:912px;top:67px;width:1px;height:1px;background:#b4b4b4"></div><div class="a" style="left:912px;top:69px;width:1px;height:1px;background:#b4b4b4"></div>
<svg style="left:923px;top:57px" width="11" height="12" viewBox="0 0 11 12"><path d="M1.5 0.5L10.5 1.5V11.5L1.5 10.5Z" fill="#c01810" stroke="#701008" stroke-width="0.6"/><path d="M0.5 1L2.5 0.5V10.8L0.5 10Z" fill="#401010"/><path d="M4 8C6 5 6.5 3.5 6 3C5.3 3.2 6 6 9 7.5" stroke="#fff" stroke-width="0.7" fill="none"/></svg>
<div class="a" style="left:938px;top:57px;width:1px;height:13px;background:#dcdcdc"></div>
<svg style="left:942.5px;top:57.5px" width="12" height="12" viewBox="0 0 12 12"><circle cx="4.5" cy="4.5" r="3.4" fill="none" stroke="#222" stroke-width="1.3"/><path d="M7 7L11 11" stroke="#222" stroke-width="1.7" stroke-linecap="round"/></svg>
<svg style="left:960px;top:57px" width="10" height="12" viewBox="0 0 10 12"><path d="M2.5 11.5C1 9 0.5 7 0.8 6C1.5 5.5 2.2 6.3 2.8 7.3V2C3.4 1.2 4 1.4 4.2 2V0.9C5 0.3 5.6 0.6 5.7 1.2V1.6C6.4 1 7 1.4 7.2 2V2.8C7.9 2.4 8.5 2.8 8.6 3.5V8C8.6 9.5 8 10.5 7.5 11.5Z" fill="#fdfdfd" stroke="#555" stroke-width="0.8"/></svg>
<div class="a" style="left:975.5px;top:57px;width:1px;height:13px;background:#dcdcdc"></div>
<svg style="left:981px;top:59px" width="9.5" height="8.5" viewBox="0 0 9.5 8.5"><path d="M0.5 4.2L4.5 0.5V2.2H8A1.2 1.2 0 0 1 9.2 3.4V5A1.2 1.2 0 0 1 8 6.2H4.5V8Z" fill="#f4c22a" stroke="#e0a818" stroke-width="0.5"/></svg>
<svg style="left:998.5px;top:59px" width="9.5" height="8.5" viewBox="0 0 9.5 8.5"><path d="M9 4.2L5 0.5V2.2H1.5A1.2 1.2 0 0 0 0.3 3.4V5A1.2 1.2 0 0 0 1.5 6.2H5V8Z" fill="#f4c22a" stroke="#e0a818" stroke-width="0.5"/></svg>
<div class="a" style="left:1012.5px;top:57px;width:1px;height:13px;background:#dcdcdc"></div>
<svg style="left:1017.5px;top:58.5px" width="11" height="9.5" viewBox="0 0 11 9.5"><rect x="0.3" y="0.3" width="1.8" height="9" fill="#58a418" stroke="#3c7c0c" stroke-width="0.4"/><path d="M2.5 4.8L6.5 0.8V3H10.5V6.5H6.5V8.8Z" fill="#58a418" stroke="#3c7c0c" stroke-width="0.5"/></svg>
<svg style="left:1035.5px;top:58.5px" width="9" height="9.5" viewBox="0 0 9 9.5"><path d="M0.5 4.8L4.5 0.8V3H8.5V6.5H4.5V8.8Z" fill="#58a418" stroke="#3c7c0c" stroke-width="0.5"/></svg>
<div class="a" style="left:1048.5px;top:56.5px;width:10px;height:12.5px;background:#fff;border:1px solid #7a7a7a"></div>
<div class="t ui" style="left:553.5px;width:1000px;text-align:center;top:63px;transform-origin:50% 50%;transform:translateY(-50%) scaleX(0.9500);font-size:9.5px;letter-spacing:0;color:#000;">2</div>
<div class="t ui" style="left:1060.5px;top:63.5px;transform-origin:0 50%;transform:translateY(-50%) scaleX(0.7891);font-size:9.5px;letter-spacing:0;color:#000;">z 7</div>
<svg style="left:1074px;top:58.5px" width="9" height="9.5" viewBox="0 0 9 9.5"><path d="M8.5 4.8L4.5 0.8V3H0.5V6.5H4.5V8.8Z" fill="#58a418" stroke="#3c7c0c" stroke-width="0.5"/></svg>
<svg style="left:1090px;top:58.5px" width="11" height="9.5" viewBox="0 0 11 9.5"><rect x="8.9" y="0.3" width="1.8" height="9" fill="#58a418" stroke="#3c7c0c" stroke-width="0.4"/><path d="M8.5 4.8L4.5 0.8V3H0.5V6.5H4.5V8.8Z" fill="#58a418" stroke="#3c7c0c" stroke-width="0.5"/></svg>
<div class="a" style="left:1105px;top:57px;width:1px;height:13px;background:#dcdcdc"></div>
<svg style="left:1111.5px;top:59px" width="9" height="10" viewBox="0 0 9 10"><path d="M0.5 0.5H8.5V6L5.5 9.5H0.5Z" fill="#fdfdfd" stroke="#d0d0d0" stroke-width="0.7"/><path d="M5.5 9.5L8.5 6H5.5Z" fill="#999"/><rect x="1" y="0" width="5" height="1" fill="#999"/></svg>
<div class="a" style="left:1124.5px;top:55.5px;width:16.5px;height:15px;background:#d4e6f9;border:1px solid #86b8ec"></div>
<svg style="left:1128.5px;top:59px" width="9" height="10" viewBox="0 0 9 10"><path d="M0.5 0.5H8.5V6L5.5 9.5H0.5Z" fill="#fdfdfd" stroke="#d0d0d0" stroke-width="0.7"/><path d="M5.5 9.5L8.5 6H5.5Z" fill="#999"/></svg>
<svg style="left:1144.5px;top:59px" width="9" height="10" viewBox="0 0 9 10"><path d="M0.5 0.5H8.5V6L5.5 9.5H0.5Z" fill="#fdfdfd" stroke="#d0d0d0" stroke-width="0.7"/><path d="M5.5 9.5L8.5 6H5.5Z" fill="#999"/><rect x="1" y="0" width="5" height="1.6" fill="#aaa"/></svg>
<svg style="left:1162px;top:59px" width="9" height="10" viewBox="0 0 9 10"><path d="M0.5 0.5H8.5V6L5.5 9.5H0.5Z" fill="#fdfdfd" stroke="#d0d0d0" stroke-width="0.7"/><path d="M5.5 9.5L8.5 6H5.5Z" fill="#bbb"/></svg>
<div class="a" style="left:1176px;top:57px;width:1px;height:13px;background:#dcdcdc"></div>
<svg style="left:1428px;top:59px" width="11" height="8" viewBox="0 0 11 8"><path d="M0 0.7H10.5M0 6.9H10.5" stroke="#222" stroke-width="1.1"/></svg>
<svg style="left:1444.5px;top:59.5px" width="10.5" height="7.5" viewBox="0 0 10.5 7.5"><rect x="0.5" y="0.5" width="9.5" height="6.5" fill="#fff" stroke="#222" stroke-width="1"/><rect x="1.8" y="1.6" width="1.4" height="4.3" fill="#222"/></svg>
<svg style="left:1461px;top:58.5px" width="11" height="9" viewBox="0 0 11 9"><rect x="0.5" y="0.5" width="8" height="6" fill="#fff" stroke="#222" stroke-width="0.9"/><rect x="2" y="2" width="8.5" height="6.2" fill="#fff" stroke="#222" stroke-width="1"/></svg>
<svg style="left:1479.1px;top:59.3px" width="7.4" height="7.4" viewBox="0 0 7.4 7.4"><path d="M0 0L7.4 7.4M7.4 0L0 7.4" stroke="#111" stroke-width="1.3" fill="none"/></svg>
<div class="a" style="left:263.0px;top:93.5px;width:11px;height:11px;background:#fff;border:1px solid #d8d8d8"></div>
<div class="t" style="left:263.0px;width:11px;text-align:center;top:94px;font-family:'Liberation Serif',serif;font-size:10.5px;color:#222;font-weight:normal">B</div>
<div class="a" style="left:263.0px;top:109.5px;width:11px;height:11px;background:#fff;border:1px solid #d8d8d8"></div>
<div class="t" style="left:263.0px;width:11px;text-align:center;top:110px;font-family:'Liberation Serif',serif;font-size:10.5px;color:#222;font-style:italic">I</div>
<div class="a" style="left:263.0px;top:125.19999999999999px;width:11px;height:11px;background:#fff;border:1px solid #d8d8d8"></div>
<div class="t" style="left:263.0px;width:11px;text-align:center;top:125.69999999999999px;font-family:'Liberation Serif',serif;font-size:10.5px;color:#222;text-decoration:underline;font-size:9.5px;top:126px">U</div>
<div class="a" style="left:262px;top:91px;width:13px;height:1px;background:#dcdcdc;"></div>
<div class="a" style="left:264.0px;top:141px;width:9px;height:10px;background:#e6e6e6;border-radius:1px"></div>
<div class="a" style="left:265.5px;top:142.5px;width:6px;height:1px;background:#aaa;"></div>
<div class="a" style="left:265.5px;top:144.5px;width:4px;height:1px;background:#aaa;"></div>
<div class="a" style="left:265.5px;top:146.5px;width:6px;height:1px;background:#aaa;"></div>
<div class="a" style="left:265.5px;top:148.5px;width:4px;height:1px;background:#aaa;"></div>
<div class="a" style="left:264.0px;top:157.5px;width:9px;height:10px;background:#e6e6e6;border-radius:1px"></div>
<div class="a" style="left:265.5px;top:159.0px;width:6px;height:1px;background:#aaa;"></div>
<div class="a" style="left:266.5px;top:161.0px;width:4px;height:1px;background:#aaa;"></div>
<div class="a" style="left:265.5px;top:163.0px;width:6px;height:1px;background:#aaa;"></div>
<div class="a" style="left:266.5px;top:165.0px;width:4px;height:1px;background:#aaa;"></div>
<div class="a" style="left:264.0px;top:173px;width:9px;height:10px;background:#e6e6e6;border-radius:1px"></div>
<div class="a" style="left:265.5px;top:174.5px;width:6px;height:1px;background:#aaa;"></div>
<div class="a" style="left:267.5px;top:176.5px;width:4px;height:1px;background:#aaa;"></div>
<div class="a" style="left:265.5px;top:178.5px;width:6px;height:1px;background:#aaa;"></div>
<div class="a" style="left:267.5px;top:180.5px;width:4px;height:1px;background:#aaa;"></div>
<div class="a" style="left:262px;top:188px;width:13px;height:1px;background:#dcdcdc;"></div>
<svg style="left:264.0px;top:194.5px" width="9" height="8" viewBox="0 0 9 8"><path d="M8 0.5V5H2" stroke="#111" stroke-width="1.3" fill="none"/><path d="M0 5L3.5 2.3V7.7Z" fill="#111"/></svg>
<div class="a" style="left:262px;top:208px;width:13px;height:1px;background:#dcdcdc;"></div>
<div class="t " style="left:263.5px;top:218px;transform-origin:0 50%;transform:translateY(-50%) scaleX(1.0000);font-size:9px;letter-spacing:0;font-weight:bold;color:#5a9a20;letter-spacing:0.3px">$$</div>
<div class="t" style="left:263.5px;top:226.5px;font-size:11.5px;font-family:'Liberation Serif',serif;font-style:italic;color:#222;">x</div>
<div class="a" style="left:269.3px;top:234.3px;width:5.3px;height:5.6px;border:1px solid #8aa870;background:#f8f8f8"></div>
<div class="t" style="left:262.8px;top:246.2px;font-size:11.5px;font-family:'Liberation Serif',serif;font-style:italic;color:#222;">x</div>
<div class="a" style="left:269.2px;top:245px;width:5.3px;height:5.6px;border:1px solid #8aa870;background:#f8f8f8"></div>
<div class="t" style="left:266.6px;top:258.2px;font-size:7.5px;font-family:'Liberation Serif',serif;font-style:italic;color:#222;">x</div>
<div class="a" style="left:265.8px;top:265.2px;width:5.6px;height:0.8px;background:#555;"></div>
<div class="t" style="left:266.6px;top:265px;font-size:7.5px;font-family:'Liberation Serif',serif;font-style:italic;color:#222;">y</div>
<div class="t" style="left:266px;top:272.3px;font-size:9.5px;font-family:'Liberation Serif',serif;font-style:italic;color:#222;">x</div>
<div class="a" style="left:263.2px;top:280.3px;width:10.8px;height:0.9px;background:#7a9a40;"></div>
<div class="t" style="left:266px;top:279.6px;font-size:9.5px;font-family:'Liberation Serif',serif;font-style:italic;color:#222;">y</div>
<svg style="left:262px;top:293px" width="6" height="11" viewBox="0 0 6 11"><path d="M0 6L1.3 5.3L2.8 10L5.2 0.5" stroke="#6a8a30" stroke-width="0.9" fill="none"/></svg>
<div class="a" style="left:267px;top:293.3px;width:7px;height:0.8px;background:#6a8a30;"></div>
<div class="t" style="left:268px;top:293.3px;font-size:10.5px;font-family:'Liberation Serif',serif;font-style:italic;color:#222;">x</div>
<div class="a" style="left:259px;top:610px;width:637px;height:13px;background:#f0f0f0;"></div>
<div class="t ui" style="left:285.75px;top:617.5px;transform-origin:0 50%;transform:translateY(-50%) scaleX(0.8645);font-size:9px;letter-spacing:0;">Wiersz: 25</div>
<div class="t ui" style="left:330.75px;top:617.5px;transform-origin:0 50%;transform:translateY(-50%) scaleX(0.8511);font-size:9px;letter-spacing:0;">Kolumna: 0</div>
<div class="t ui" style="left:417.5px;top:617.5px;transform-origin:0 50%;transform:translateY(-50%) scaleX(0.8211);font-size:9px;letter-spacing:0;">WSTAW</div>
<div class="a" style="left:259px;top:622px;width:648px;height:1.5px;background:#8c8c8c;"></div>
<svg style="left:898px;top:75px" width="6" height="4" viewBox="0 0 6 4"><path d="M0.5 3.5L3 1L5.5 3.5" stroke="#444" stroke-width="1.1" fill="none"/></svg>
<div class="a" style="left:896.5px;top:88px;width:9.5px;height:13px;background:#cdcdcd;"></div>
<svg style="left:898px;top:614px" width="6" height="4" viewBox="0 0 6 4"><path d="M0.5 0.5L3 3L5.5 0.5" stroke="#444" stroke-width="1.1" fill="none"/></svg>
<div class="a" style="left:259px;top:624px;width:648px;height:107px;background:#ffffff;"></div>
<div class="a" style="left:259px;top:624px;width:648px;height:17.5px;background:#f0f0f0;"></div>
<div class="a" style="left:257.7px;top:55px;width:1.5px;height:676px;background:#808080;"></div>
<div class="a" style="left:261px;top:626px;width:58px;height:15.5px;background:#fff;border:1px solid #dcdcdc;border-bottom:none"></div>
<div class="a" style="left:318.75px;top:627.5px;width:29.75px;height:13.5px;background:#f0f0f0;border:1px solid #d9d9d9"></div>
<div class="a" style="left:348px;top:627.5px;width:44.25px;height:13.5px;background:#f0f0f0;border:1px solid #d9d9d9"></div>
<div class="a" style="left:391.75px;top:627.5px;width:87.0px;height:13.5px;background:#f0f0f0;border:1px solid #d9d9d9"></div>
<div class="t ui" style="left:268.75px;top:633.75px;transform-origin:0 50%;transform:translateY(-50%) scaleX(0.8506);font-size:9px;letter-spacing:0;">Komunikaty</div>
<div class="t ui" style="left:325.75px;top:634px;transform-origin:0 50%;transform:translateY(-50%) scaleX(0.8324);font-size:9px;letter-spacing:0;">Log</div>
<div class="t ui" style="left:355.5px;top:634px;transform-origin:0 50%;transform:translateY(-50%) scaleX(0.8401);font-size:9px;letter-spacing:0;">Podgląd</div>
<div class="t ui" style="left:400.5px;top:634px;transform-origin:0 50%;transform:translateY(-50%) scaleX(0.8438);font-size:9px;letter-spacing:0;">Wyniki poszukiwania</div>
<svg style="left:893.2px;top:628.7px" width="7.6" height="7.6" viewBox="0 0 7.6 7.6"><path d="M0 0L7.6 7.6M7.6 0L0 7.6" stroke="#111" stroke-width="1.2" fill="none"/></svg>
<div class="t ui" style="left:261.75px;top:650px;transform-origin:0 50%;transform:translateY(-50%) scaleX(0.8925);font-size:9px;letter-spacing:0;color:#228a36;">Proces uruchomiony: pdflatex.exe -synctex=1 -interaction=nonstopmode "latex_edures".tex</div>
<div class="t ui" style="left:261.75px;top:669px;transform-origin:0 50%;transform:translateY(-50%) scaleX(0.8429);font-size:9px;letter-spacing:0;color:#222;">Proces zakończył się normalnie</div>
<div class="a" style="left:261px;top:692px;width:646px;height:8.5px;background:#ececec;"></div>
<div class="a" style="left:106px;top:730.5px;width:1387px;height:20.5px;background:#f0f0f0;"></div>
<div class="a" style="left:108.75px;top:733.3px;width:15.5px;height:15px;background:#dcebf9;border:1px solid #9cc8f0"></div>
<div class="a" style="left:111.75px;top:736.5px;width:9.5px;height:9px;background:#f4f4f4;border:1px solid #444;border-left-width:4px"></div>
<div class="a" style="left:129.5px;top:733.3px;width:15.5px;height:15px;background:#dcebf9;border:1px solid #9cc8f0"></div>
<div class="a" style="left:132.5px;top:736.5px;width:9.5px;height:9px;background:#555;border:1px solid #444;border-bottom-width:1px"></div>
<div class="a" style="left:136.0px;top:741.5px;width:5px;height:3px;background:#f4f4f4"></div>
<div class="a" style="left:908px;top:72px;width:573px;height:639px;background:#ffffff;"></div>
<div class="a" style="left:1481px;top:72px;width:12px;height:639px;background:#f0f0f0;"></div>
<div class="a" style="left:1482px;top:222px;width:10px;height:172px;background:#c9c9c9;"></div>
<svg style="left:1484px;top:76px" width="6" height="4" viewBox="0 0 6 4"><path d="M0.5 3.5L3 1L5.5 3.5" stroke="#444" stroke-width="1.1" fill="none"/></svg>
<svg style="left:1484px;top:703px" width="6" height="4" viewBox="0 0 6 4"><path d="M0.5 0.5L3 3L5.5 0.5" stroke="#444" stroke-width="1.1" fill="none"/></svg>
<div class="a" style="left:908px;top:72px;width:573px;height:639px;overflow:hidden">
<div class="a" style="left:-908px;top:-72px;width:1600px;height:900px">
<div class="a" style="left:938.0px;top:80.0px;width:15.0px;height:15.0px;border-radius:50%;background:radial-gradient(circle at 40% 32%,#f0a860 0%,#d07a28 35%,#a85810 70%,#7a3c08 100%)"></div>
<div class="t" style="left:938.0px;width:15.0px;text-align:center;top:83.7px;font-size:7.5px;color:#fbe0c0">2</div>
<div class="t " style="left:959.5px;top:86.8px;transform-origin:0 50%;transform:translateY(-50%) scaleX(0.9224);font-size:13px;letter-spacing:0;color:#ea9436;">First document</div>
<div class="a" style="left:938.0px;top:119.2px;width:15.0px;height:15.0px;border-radius:50%;background:radial-gradient(circle at 40% 32%,#f0a860 0%,#d07a28 35%,#a85810 70%,#7a3c08 100%)"></div>
<div class="t" style="left:938.0px;width:15.0px;text-align:center;top:122.9px;font-size:7.5px;color:#fbe0c0">3</div>
<div class="t " style="left:959.5px;top:126px;transform-origin:0 50%;transform:translateY(-50%) scaleX(0.8667);font-size:13px;letter-spacing:0;color:#ea9436;">JabRef</div>
<div class="a" style="left:908px;top:197.3px;width:286.5px;height:46.29999999999998px;background:#000;"></div>
<div class="a" style="left:1194.5px;top:197.3px;width:286px;height:46.29999999999998px;background:#f78a1c;"></div>
<div class="a" style="left:908px;top:209.5px;width:573px;height:3.4px;background:#9aa2aa;"></div>
<div class="t " style="right:416.5px;top:203.70000000000002px;transform-origin:100% 50%;transform:translateY(-50%) scaleX(0.9497);font-size:8px;letter-spacing:0;color:#fff;">P. Nazarko</div>
<div class="t " style="left:1205px;top:202.9px;transform-origin:0 50%;transform:translateY(-50%) scaleX(0.9663);font-size:8px;letter-spacing:0;color:#fde4cc;">LaTeX, Text processing tool</div>
<div class="t " style="right:416.5px;top:219.20000000000002px;transform-origin:100% 50%;transform:translateY(-50%) scaleX(0.9807);font-size:8px;letter-spacing:0;color:#fff;-webkit-text-stroke:0.12px #fff">Introduction</div>
<div class="t " style="right:416.5px;top:228.1px;transform-origin:100% 50%;transform:translateY(-50%) scaleX(0.9602);font-size:8px;letter-spacing:0;color:#7a7a7a;">First document</div>
<div class="t " style="right:416.5px;top:236.70000000000002px;transform-origin:100% 50%;transform:translateY(-50%) scaleX(0.8916);font-size:8px;letter-spacing:0;color:#7a7a7a;">JabRef</div>
<div class="t " style="left:1205px;top:219.1px;transform-origin:0 50%;transform:translateY(-50%) scaleX(0.9104);font-size:8px;letter-spacing:0;color:#fff;-webkit-text-stroke:0.12px #fff">Text processors</div>
<div class="t " style="left:1205px;top:227.9px;transform-origin:0 50%;transform:translateY(-50%) scaleX(0.9409);font-size:8px;letter-spacing:0;color:#fbb66e;">Type of documents</div>
<div class="t " style="left:1205px;top:236.7px;transform-origin:0 50%;transform:translateY(-50%) scaleX(0.9841);font-size:8px;letter-spacing:0;color:#fbb66e;">How to start</div>
<div class="a" style="left:908px;top:243.6px;width:572.5px;height:25.599999999999994px;background:linear-gradient(90deg,#f78a1c 0%,#f78a1c 14%,#d4741a 34%,#94500e 56%,#46240a 78%,#1a0c02 92%,#000 100%)"></div>
<div class="a" style="left:908px;top:243.6px;width:572.5px;height:25.599999999999994px;background:linear-gradient(180deg,rgba(0,0,0,0.62) 0%,rgba(0,0,0,0.3) 45%,rgba(0,0,0,0) 100%);-webkit-mask-image:linear-gradient(90deg,transparent 22%,#000 60%);mask-image:linear-gradient(90deg,transparent 22%,#000 60%)"></div>
<div class="a" style="left:908px;top:269.2px;width:572.5px;height:2.5px;background:linear-gradient(180deg,rgba(0,0,0,0.28),rgba(0,0,0,0))"></div>
<div class="t " style="left:926px;top:257.7px;transform-origin:0 50%;transform:translateY(-50%) scaleX(0.9397);font-size:17.5px;letter-spacing:0;color:#fff;">Type of text processors</div>
<div class="a" style="left:0;top:0;width:1600px;height:900px;filter:blur(0.5px)">
<div class="a" style="left:967.2px;top:294.3px;width:179.79999999999995px;height:194.5px;background:#fff;border:1px solid #a4a4a4"></div>
<div class="a" style="left:969px;top:296px;width:2.2px;height:2.2px;background:#333;"></div>
<div class="a" style="left:972.0px;top:296.30px;width:87.0px;height:1.4px;background:linear-gradient(90deg,#7a7a7a 0.0px,#7a7a7a 13.1px,transparent 13.1px,transparent 14.3px,#7a7a7a 14.3px,#7a7a7a 22.8px,transparent 22.8px,transparent 24.0px,#7a7a7a 24.0px,#7a7a7a 34.0px,transparent 34.0px,transparent 35.2px,#7a7a7a 35.2px,#7a7a7a 45.0px,transparent 45.0px,transparent 46.2px,#7a7a7a 46.2px,#7a7a7a 55.7px,transparent 55.7px,transparent 56.9px,#7a7a7a 56.9px,#7a7a7a 64.3px,transparent 64.3px,transparent 65.5px,#7a7a7a 65.5px,#7a7a7a 75.9px,transparent 75.9px,transparent 77.1px,#7a7a7a 77.1px,#7a7a7a 87.0px,transparent 87.0px,transparent 87.0px)"></div>
<div class="a" style="left:1129px;top:296.6px;width:1.6px;height:0.8px;background:#999;"></div>
<div class="a" style="left:1138px;top:296.6px;width:1.6px;height:0.8px;background:#999;"></div>
<div class="a" style="left:1143px;top:296.6px;width:1.6px;height:0.8px;background:#999;"></div>
<div class="a" style="left:969.0px;top:300.95px;width:116.0px;height:1.3px;background:linear-gradient(90deg,#8a8a8a 0.0px,#8a8a8a 6.6px,transparent 6.6px,transparent 9.2px,#8a8a8a 9.2px,#8a8a8a 16.3px,transparent 16.3px,transparent 18.9px,#8a8a8a 18.9px,#8a8a8a 27.0px,transparent 27.0px,transparent 29.6px,#8a8a8a 29.6px,#8a8a8a 37.6px,transparent 37.6px,transparent 40.2px,#8a8a8a 40.2px,#8a8a8a 49.1px,transparent 49.1px,transparent 51.7px,#8a8a8a 51.7px,#8a8a8a 60.7px,transparent 60.7px,transparent 63.3px,#8a8a8a 63.3px,#8a8a8a 73.0px,transparent 73.0px,transparent 75.6px,#8a8a8a 75.6px,#8a8a8a 84.1px,transparent 84.1px,transparent 86.7px,#8a8a8a 86.7px,#8a8a8a 93.1px,transparent 93.1px,transparent 95.7px,#8a8a8a 95.7px,#8a8a8a 104.3px,transparent 104.3px,transparent 106.9px,#8a8a8a 106.9px,#8a8a8a 114.4px,transparent 114.4px,transparent 116.0px)"></div>
<div class="a" style="left:968.2px;top:303.8px;width:177.79999999999995px;height:6px;background:#f0f0f0;"></div>
<div class="a" style="left:972px;top:304.6px;width:2.6px;height:3.4px;background:#2aa02a;"></div>
<div class="a" style="left:976px;top:304.6px;width:3px;height:3.4px;background:#4a98e8;"></div>
<div class="a" style="left:981.5px;top:304.6px;width:2.6px;height:3.4px;background:#666;"></div>
<div class="a" style="left:986px;top:304.6px;width:4px;height:3.4px;background:#d42010;"></div>
<div class="a" style="left:994px;top:304.6px;width:2.6px;height:3.4px;background:#ecc82c;"></div>
<div class="a" style="left:999px;top:304.6px;width:2.6px;height:3.4px;background:#d8d8d8;"></div>
<div class="a" style="left:1010px;top:304.6px;width:2.6px;height:3.4px;background:#555;"></div>
<div class="a" style="left:1015.5px;top:304.6px;width:3px;height:3.4px;background:#333;"></div>
<div class="a" style="left:1023px;top:304.6px;width:3.6px;height:3.4px;background:#18a028;"></div>
<div class="a" style="left:1029.5px;top:304.6px;width:2.8px;height:3.4px;background:#18a028;"></div>
<div class="a" style="left:1034.5px;top:304.6px;width:3px;height:3.4px;background:#8a8a8a;"></div>
<div class="a" style="left:1040px;top:304.6px;width:2.6px;height:3.4px;background:#6a98c8;"></div>
<div class="a" style="left:1045px;top:304.6px;width:2px;height:3.4px;background:#ccc;"></div>
<div class="a" style="left:1053.0px;top:305.80px;width:10.0px;height:1.2px;background:linear-gradient(90deg,#777 0.0px,#777 6.0px,transparent 6.0px,transparent 9.0px,#777 9.0px,#777 10.0px,transparent 10.0px,transparent 10.0px)"></div>
<div class="a" style="left:1064.0px;top:305.80px;width:10.0px;height:1.2px;background:linear-gradient(90deg,#777 0.0px,#777 4.8px,transparent 4.8px,transparent 7.8px,#777 7.8px,#777 10.0px,transparent 10.0px,transparent 10.0px)"></div>
<div class="a" style="left:1081.0px;top:305.80px;width:6.0px;height:1.2px;background:linear-gradient(90deg,#888 0.0px,#888 6.0px,transparent 6.0px,transparent 6.0px)"></div>
<div class="a" style="left:1100.0px;top:305.80px;width:6.0px;height:1.2px;background:linear-gradient(90deg,#888 0.0px,#888 6.0px,transparent 6.0px,transparent 6.0px)"></div>
<div class="a" style="left:1115.0px;top:305.80px;width:6.0px;height:1.2px;background:linear-gradient(90deg,#888 0.0px,#888 6.0px,transparent 6.0px,transparent 6.0px)"></div>
<div class="a" style="left:1061px;top:306px;width:1.3px;height:1px;background:#555;"></div>
<div class="a" style="left:1072px;top:306px;width:1.3px;height:1px;background:#555;"></div>
<div class="a" style="left:1093px;top:306px;width:1.3px;height:1px;background:#555;"></div>
<div class="a" style="left:1107px;top:306px;width:1.3px;height:1px;background:#555;"></div>
<div class="a" style="left:1123px;top:306px;width:1.3px;height:1px;background:#555;"></div>
<div class="a" style="left:1128.5px;top:304.8px;width:3.4px;height:3px;background:#38a838;"></div>
<div class="a" style="left:1134.5px;top:306px;width:1.6px;height:1px;background:#555;"></div>
<div class="a" style="left:1139.5px;top:305px;width:3px;height:2.8px;background:#e8c828;"></div>
<div class="a" style="left:1144px;top:306px;width:1.5px;height:1px;background:#555;"></div>
<div class="a" style="left:968.2px;top:309.8px;width:177.79999999999995px;height:4.3px;background:#f0f0f0;"></div>
<div class="a" style="left:968.5px;top:311.30px;width:8.0px;height:1.2px;background:linear-gradient(90deg,#777 0.0px,#777 8.0px,transparent 8.0px,transparent 8.0px)"></div>
<div class="a" style="left:1003.3px;top:311.3px;width:1.4px;height:1.4px;background:#444;"></div>
<div class="a" style="left:1009px;top:311px;width:2.4px;height:1.6px;background:#e8c030;"></div>
<div class="a" style="left:1014px;top:310.2px;width:36px;height:4px;background:#fff;"></div>
<div class="a" style="left:1017.0px;top:311.40px;width:24.0px;height:1.2px;background:linear-gradient(90deg,#8a8a8a 0.0px,#8a8a8a 7.6px,transparent 7.6px,transparent 8.6px,#8a8a8a 8.6px,#8a8a8a 14.9px,transparent 14.9px,transparent 15.9px,#8a8a8a 15.9px,#8a8a8a 24.0px,transparent 24.0px,transparent 24.0px)"></div>
<div class="a" style="left:1044.6px;top:311.4px;width:1.2px;height:1.2px;background:#555;"></div>
<div class="a" style="left:1007.2px;top:314px;width:0.7px;height:169px;background:#b0b0b0;"></div>
<div class="a" style="left:968.2px;top:314px;width:4.5px;height:40px;background:#ececec;"></div>
<div class="a" style="left:969px;top:315.3px;width:2.4px;height:2px;background:#9a9a9a;"></div>
<div class="a" style="left:969px;top:319.5px;width:2.4px;height:2px;background:#9a9a9a;"></div>
<div class="a" style="left:969px;top:323.7px;width:2.4px;height:2px;background:#9a9a9a;"></div>
<div class="a" style="left:969px;top:327.90000000000003px;width:2.4px;height:2px;background:#9a9a9a;"></div>
<div class="a" style="left:969px;top:332.1px;width:2.4px;height:2px;background:#9a9a9a;"></div>
<div class="a" style="left:969px;top:336.3px;width:2.4px;height:2px;background:#9a9a9a;"></div>
<div class="a" style="left:969px;top:340.5px;width:2.4px;height:2px;background:#9a9a9a;"></div>
<div class="a" style="left:969px;top:344.7px;width:2.4px;height:2px;background:#9a9a9a;"></div>
<div class="a" style="left:969px;top:348.90000000000003px;width:2.4px;height:2px;background:#9a9a9a;"></div>
<div class="a" style="left:973px;top:315.2px;width:1.4px;height:1.2px;background:#444;"></div>
<div class="a" style="left:976.5px;top:315.05px;width:29.0px;height:1.5px;background:linear-gradient(90deg,#3a3a3a 0.0px,#3a3a3a 12.5px,transparent 12.5px,transparent 13.3px,#3a3a3a 13.3px,#3a3a3a 24.1px,transparent 24.1px,transparent 24.9px,#3a3a3a 24.9px,#3a3a3a 29.0px,transparent 29.0px,transparent 29.0px)"></div>
<div class="a" style="left:980.0px;top:317.85px;width:10.0px;height:1.1px;background:linear-gradient(90deg,#9a9a9a 0.0px,#9a9a9a 10.0px,transparent 10.0px,transparent 10.0px)"></div>
<div class="a" style="left:980.0px;top:320.85px;width:14.0px;height:1.1px;background:linear-gradient(90deg,#8a8a8a 0.0px,#8a8a8a 14.0px,transparent 14.0px,transparent 14.0px)"></div>
<div class="a" style="left:980.8px;top:323.5px;width:2.2px;height:2.2px;background:#777;"></div>
<div class="a" style="left:984.5px;top:324.00px;width:12.0px;height:1.2px;background:linear-gradient(90deg,#858585 0.0px,#858585 5.2px,transparent 5.2px,transparent 6.1px,#858585 6.1px,#858585 12.0px,transparent 12.0px,transparent 12.0px)"></div>
<div class="a" style="left:980.8px;top:326.86px;width:2.2px;height:2.2px;background:#777;"></div>
<div class="a" style="left:984.5px;top:327.36px;width:19.0px;height:1.2px;background:linear-gradient(90deg,#858585 0.0px,#858585 7.7px,transparent 7.7px,transparent 8.6px,#858585 8.6px,#858585 14.6px,transparent 14.6px,transparent 15.5px,#858585 15.5px,#858585 19.0px,transparent 19.0px,transparent 19.0px)"></div>
<div class="a" style="left:980.8px;top:330.22px;width:2.2px;height:2.2px;background:#777;"></div>
<div class="a" style="left:984.5px;top:330.72px;width:16.0px;height:1.2px;background:linear-gradient(90deg,#858585 0.0px,#858585 8.3px,transparent 8.3px,transparent 9.2px,#858585 9.2px,#858585 16.0px,transparent 16.0px,transparent 16.0px)"></div>
<div class="a" style="left:984.8px;top:333.58px;width:2.2px;height:2.2px;background:#777;"></div>
<div class="a" style="left:988.5px;top:334.08px;width:17.0px;height:1.2px;background:linear-gradient(90deg,#858585 0.0px,#858585 7.6px,transparent 7.6px,transparent 8.5px,#858585 8.5px,#858585 13.0px,transparent 13.0px,transparent 13.9px,#858585 13.9px,#858585 17.0px,transparent 17.0px,transparent 17.0px)"></div>
<div class="a" style="left:984.8px;top:336.94px;width:2.2px;height:2.2px;background:#777;"></div>
<div class="a" style="left:988.5px;top:337.44px;width:15.0px;height:1.2px;background:linear-gradient(90deg,#858585 0.0px,#858585 4.4px,transparent 4.4px,transparent 5.3px,#858585 5.3px,#858585 13.7px,transparent 13.7px,transparent 14.6px,#858585 14.6px,#858585 15.0px,transparent 15.0px,transparent 15.0px)"></div>
<div class="a" style="left:984.8px;top:340.3px;width:2.2px;height:2.2px;background:#777;"></div>
<div class="a" style="left:988.5px;top:340.80px;width:17.0px;height:1.2px;background:linear-gradient(90deg,#858585 0.0px,#858585 5.1px,transparent 5.1px,transparent 6.0px,#858585 6.0px,#858585 13.1px,transparent 13.1px,transparent 14.0px,#858585 14.0px,#858585 17.0px,transparent 17.0px,transparent 17.0px)"></div>
<div class="a" style="left:984.8px;top:343.66px;width:2.2px;height:2.2px;background:#777;"></div>
<div class="a" style="left:988.5px;top:344.16px;width:17.0px;height:1.2px;background:linear-gradient(90deg,#858585 0.0px,#858585 7.0px,transparent 7.0px,transparent 7.9px,#858585 7.9px,#858585 13.0px,transparent 13.0px,transparent 13.9px,#858585 13.9px,#858585 17.0px,transparent 17.0px,transparent 17.0px)"></div>
<div class="a" style="left:980.8px;top:347.02px;width:2.2px;height:2.2px;background:#777;"></div>
<div class="a" style="left:984.5px;top:347.52px;width:11.0px;height:1.2px;background:linear-gradient(90deg,#858585 0.0px,#858585 4.4px,transparent 4.4px,transparent 5.3px,#858585 5.3px,#858585 11.0px,transparent 11.0px,transparent 11.0px)"></div>
<div class="a" style="left:980.8px;top:350.38px;width:2.2px;height:2.2px;background:#777;"></div>
<div class="a" style="left:984.5px;top:350.88px;width:11.0px;height:1.2px;background:linear-gradient(90deg,#858585 0.0px,#858585 8.9px,transparent 8.9px,transparent 9.8px,#858585 9.8px,#858585 11.0px,transparent 11.0px,transparent 11.0px)"></div>
<div class="a" style="left:977px;top:331px;width:1.2px;height:1px;background:#666;"></div>
<div class="a" style="left:1007.9000000000001px;top:314px;width:10px;height:138px;background:#f2f2f2;"></div>
<div class="a" style="left:1009px;top:320.5px;width:1.6px;height:1.6px;background:#6a9a40;"></div>
<div class="a" style="left:1009px;top:325.0px;width:1.6px;height:1.6px;background:#a8a8a8;"></div>
<div class="a" style="left:1009px;top:329.5px;width:1.6px;height:1.6px;background:#a8a8a8;"></div>
<div class="a" style="left:1009px;top:334.0px;width:1.6px;height:1.6px;background:#6a9a40;"></div>
<div class="a" style="left:1009px;top:338.5px;width:1.6px;height:1.6px;background:#a8a8a8;"></div>
<div class="a" style="left:1009px;top:343.0px;width:1.6px;height:1.6px;background:#a8a8a8;"></div>
<div class="a" style="left:1009px;top:347.5px;width:1.6px;height:1.6px;background:#6a9a40;"></div>
<div class="a" style="left:1009px;top:352.0px;width:1.6px;height:1.6px;background:#a8a8a8;"></div>
<div class="a" style="left:1009px;top:356.5px;width:1.6px;height:1.6px;background:#a8a8a8;"></div>
<div class="a" style="left:1009px;top:361.0px;width:1.6px;height:1.6px;background:#6a9a40;"></div>
<div class="a" style="left:1009px;top:365.5px;width:1.6px;height:1.6px;background:#a8a8a8;"></div>
<div class="a" style="left:1009px;top:370.0px;width:1.6px;height:1.6px;background:#a8a8a8;"></div>
<div class="a" style="left:1009px;top:374.5px;width:1.6px;height:1.6px;background:#6a9a40;"></div>
<div class="a" style="left:1018px;top:360.7px;width:125px;height:61px;background:#edeffa;"></div>
<div class="a" style="left:1019.2px;top:314.70px;width:51.0px;height:2.0px;background:linear-gradient(90deg,#d8d8d8 0.0px,#d8d8d8 6.6px,transparent 6.6px,transparent 7.6px,#d8d8d8 7.6px,#d8d8d8 15.0px,transparent 15.0px,transparent 16.0px,#d8d8d8 16.0px,#d8d8d8 21.5px,transparent 21.5px,transparent 22.5px,#d8d8d8 22.5px,#d8d8d8 28.0px,transparent 28.0px,transparent 29.0px,#d8d8d8 29.0px,#d8d8d8 34.6px,transparent 34.6px,transparent 35.6px,#d8d8d8 35.6px,#d8d8d8 41.0px,transparent 41.0px,transparent 42.0px,#d8d8d8 42.0px,#d8d8d8 51.0px,transparent 51.0px,transparent 51.0px)"></div>
<div class="a" style="left:1019.2px;top:321.40px;width:10.0px;height:2.0px;background:linear-gradient(90deg,#74b0ee 0.0px,#74b0ee 10.0px,transparent 10.0px,transparent 10.0px)"></div>
<div class="a" style="left:1029.2px;top:321.40px;width:13.0px;height:2.0px;background:linear-gradient(90deg,#6c6ca8 0.0px,#6c6ca8 13.0px,transparent 13.0px,transparent 13.0px)"></div>
<div class="a" style="left:1019.2px;top:328.20px;width:10.0px;height:2.0px;background:linear-gradient(90deg,#74b0ee 0.0px,#74b0ee 10.0px,transparent 10.0px,transparent 10.0px)"></div>
<div class="a" style="left:1029.2px;top:328.20px;width:17.5px;height:2.0px;background:linear-gradient(90deg,#6c6ca8 0.0px,#6c6ca8 17.5px,transparent 17.5px,transparent 17.5px)"></div>
<div class="a" style="left:1019.2px;top:334.90px;width:9.0px;height:2.0px;background:linear-gradient(90deg,#cc8a84 0.0px,#cc8a84 9.0px,transparent 9.0px,transparent 9.0px)"></div>
<div class="a" style="left:1028.7px;top:334.90px;width:106.0px;height:2.0px;background:linear-gradient(90deg,#a4a4a4 0.0px,#a4a4a4 5.0px,transparent 5.0px,transparent 6.2px,#a4a4a4 6.2px,#a4a4a4 10.9px,transparent 10.9px,transparent 12.1px,#a4a4a4 12.1px,#a4a4a4 19.1px,transparent 19.1px,transparent 20.3px,#a4a4a4 20.3px,#a4a4a4 27.8px,transparent 27.8px,transparent 29.0px,#a4a4a4 29.0px,#a4a4a4 35.5px,transparent 35.5px,transparent 36.7px,#a4a4a4 36.7px,#a4a4a4 44.4px,transparent 44.4px,transparent 45.6px,#a4a4a4 45.6px,#a4a4a4 49.1px,transparent 49.1px,transparent 50.3px,#a4a4a4 50.3px,#a4a4a4 54.8px,transparent 54.8px,transparent 56.0px,#a4a4a4 56.0px,#a4a4a4 60.5px,transparent 60.5px,transparent 61.7px,#a4a4a4 61.7px,#a4a4a4 66.6px,transparent 66.6px,transparent 67.8px,#a4a4a4 67.8px,#a4a4a4 76.7px,transparent 76.7px,transparent 77.9px,#a4a4a4 77.9px,#a4a4a4 83.8px,transparent 83.8px,transparent 85.0px,#a4a4a4 85.0px,#a4a4a4 89.5px,transparent 89.5px,transparent 90.7px,#a4a4a4 90.7px,#a4a4a4 96.9px,transparent 96.9px,transparent 98.1px,#a4a4a4 98.1px,#a4a4a4 106.0px,transparent 106.0px,transparent 106.0px)"></div>
<div class="a" style="left:1019.2px;top:338.30px;width:13.0px;height:2.0px;background:linear-gradient(90deg,#989898 0.0px,#989898 13.0px,transparent 13.0px,transparent 13.0px)"></div>
<div class="a" style="left:1019.2px;top:341.70px;width:10.0px;height:2.0px;background:linear-gradient(90deg,#cc8a84 0.0px,#cc8a84 10.0px,transparent 10.0px,transparent 10.0px)"></div>
<div class="a" style="left:1029.7px;top:341.70px;width:76.0px;height:2.0px;background:linear-gradient(90deg,#a4a4a4 0.0px,#a4a4a4 6.0px,transparent 6.0px,transparent 7.2px,#a4a4a4 7.2px,#a4a4a4 16.0px,transparent 16.0px,transparent 17.2px,#a4a4a4 17.2px,#a4a4a4 25.5px,transparent 25.5px,transparent 26.7px,#a4a4a4 26.7px,#a4a4a4 31.9px,transparent 31.9px,transparent 33.1px,#a4a4a4 33.1px,#a4a4a4 39.8px,transparent 39.8px,transparent 41.0px,#a4a4a4 41.0px,#a4a4a4 45.5px,transparent 45.5px,transparent 46.7px,#a4a4a4 46.7px,#a4a4a4 52.4px,transparent 52.4px,transparent 53.6px,#a4a4a4 53.6px,#a4a4a4 58.2px,transparent 58.2px,transparent 59.4px,#a4a4a4 59.4px,#a4a4a4 66.3px,transparent 66.3px,transparent 67.5px,#a4a4a4 67.5px,#a4a4a4 74.7px,transparent 74.7px,transparent 75.9px,#a4a4a4 75.9px,#a4a4a4 76.0px,transparent 76.0px,transparent 76.0px)"></div>
<div class="a" style="left:1019.2px;top:345.00px;width:12.0px;height:2.0px;background:linear-gradient(90deg,#cc8a84 0.0px,#cc8a84 12.0px,transparent 12.0px,transparent 12.0px)"></div>
<div class="a" style="left:1031.7px;top:345.00px;width:98.0px;height:2.0px;background:linear-gradient(90deg,#9c9c9c 0.0px,#9c9c9c 5.6px,transparent 5.6px,transparent 6.8px,#9c9c9c 6.8px,#9c9c9c 13.7px,transparent 13.7px,transparent 14.9px,#9c9c9c 14.9px,#9c9c9c 18.9px,transparent 18.9px,transparent 20.1px,#9c9c9c 20.1px,#9c9c9c 27.9px,transparent 27.9px,transparent 29.1px,#9c9c9c 29.1px,#9c9c9c 37.5px,transparent 37.5px,transparent 38.7px,#9c9c9c 38.7px,#9c9c9c 48.3px,transparent 48.3px,transparent 49.5px,#9c9c9c 49.5px,#9c9c9c 55.8px,transparent 55.8px,transparent 57.0px,#9c9c9c 57.0px,#9c9c9c 63.9px,transparent 63.9px,transparent 65.1px,#9c9c9c 65.1px,#9c9c9c 72.6px,transparent 72.6px,transparent 73.8px,#9c9c9c 73.8px,#9c9c9c 83.5px,transparent 83.5px,transparent 84.7px,#9c9c9c 84.7px,#9c9c9c 88.7px,transparent 88.7px,transparent 89.9px,#9c9c9c 89.9px,#9c9c9c 93.0px,transparent 93.0px,transparent 94.2px,#9c9c9c 94.2px,#9c9c9c 98.0px,transparent 98.0px,transparent 98.0px)"></div>
<div class="a" style="left:1019.2px;top:348.40px;width:25.0px;height:2.0px;background:linear-gradient(90deg,#9c9c9c 0.0px,#9c9c9c 8.7px,transparent 8.7px,transparent 9.9px,#9c9c9c 9.9px,#9c9c9c 18.9px,transparent 18.9px,transparent 20.1px,#9c9c9c 20.1px,#9c9c9c 25.0px,transparent 25.0px,transparent 25.0px)"></div>
<div class="a" style="left:1025.2px;top:351.80px;width:70.0px;height:2.0px;background:linear-gradient(90deg,#a4a4a4 0.0px,#a4a4a4 6.6px,transparent 6.6px,transparent 7.8px,#a4a4a4 7.8px,#a4a4a4 13.0px,transparent 13.0px,transparent 14.2px,#a4a4a4 14.2px,#a4a4a4 19.9px,transparent 19.9px,transparent 21.1px,#a4a4a4 21.1px,#a4a4a4 27.1px,transparent 27.1px,transparent 28.3px,#a4a4a4 28.3px,#a4a4a4 36.0px,transparent 36.0px,transparent 37.2px,#a4a4a4 37.2px,#a4a4a4 41.2px,transparent 41.2px,transparent 42.4px,#a4a4a4 42.4px,#a4a4a4 51.4px,transparent 51.4px,transparent 52.6px,#a4a4a4 52.6px,#a4a4a4 61.8px,transparent 61.8px,transparent 63.0px,#a4a4a4 63.0px,#a4a4a4 70.0px,transparent 70.0px,transparent 70.0px)"></div>
<div class="a" style="left:1019.2px;top:358.40px;width:10.0px;height:2.0px;background:linear-gradient(90deg,#74b0ee 0.0px,#74b0ee 10.0px,transparent 10.0px,transparent 10.0px)"></div>
<div class="a" style="left:1029.2px;top:358.40px;width:12.5px;height:2.0px;background:linear-gradient(90deg,#6c6ca8 0.0px,#6c6ca8 12.5px,transparent 12.5px,transparent 12.5px)"></div>
<div class="a" style="left:1019.2px;top:361.90px;width:103.0px;height:2.0px;background:linear-gradient(90deg,#9a9aa6 0.0px,#9a9aa6 9.0px,transparent 9.0px,transparent 10.3px,#9a9aa6 10.3px,#9a9aa6 19.9px,transparent 19.9px,transparent 21.2px,#9a9aa6 21.2px,#9a9aa6 28.0px,transparent 28.0px,transparent 29.3px,#9a9aa6 29.3px,#9a9aa6 32.9px,transparent 32.9px,transparent 34.2px,#9a9aa6 34.2px,#9a9aa6 40.9px,transparent 40.9px,transparent 42.2px,#9a9aa6 42.2px,#9a9aa6 49.5px,transparent 49.5px,transparent 50.8px,#9a9aa6 50.8px,#9a9aa6 56.3px,transparent 56.3px,transparent 57.6px,#9a9aa6 57.6px,#9a9aa6 64.7px,transparent 64.7px,transparent 66.0px,#9a9aa6 66.0px,#9a9aa6 73.1px,transparent 73.1px,transparent 74.4px,#9a9aa6 74.4px,#9a9aa6 83.5px,transparent 83.5px,transparent 84.8px,#9a9aa6 84.8px,#9a9aa6 90.1px,transparent 90.1px,transparent 91.4px,#9a9aa6 91.4px,#9a9aa6 99.0px,transparent 99.0px,transparent 100.3px,#9a9aa6 100.3px,#9a9aa6 103.0px,transparent 103.0px,transparent 103.0px)"></div>
<div class="a" style="left:1019.2px;top:365.26px;width:116.0px;height:2.0px;background:linear-gradient(90deg,#9a9aa6 0.0px,#9a9aa6 5.0px,transparent 5.0px,transparent 6.3px,#9a9aa6 6.3px,#9a9aa6 10.7px,transparent 10.7px,transparent 12.0px,#9a9aa6 12.0px,#9a9aa6 19.1px,transparent 19.1px,transparent 20.4px,#9a9aa6 20.4px,#9a9aa6 28.1px,transparent 28.1px,transparent 29.4px,#9a9aa6 29.4px,#9a9aa6 38.7px,transparent 38.7px,transparent 40.0px,#9a9aa6 40.0px,#9a9aa6 45.0px,transparent 45.0px,transparent 46.3px,#9a9aa6 46.3px,#9a9aa6 55.7px,transparent 55.7px,transparent 57.0px,#9a9aa6 57.0px,#9a9aa6 60.9px,transparent 60.9px,transparent 62.2px,#9a9aa6 62.2px,#9a9aa6 70.2px,transparent 70.2px,transparent 71.5px,#9a9aa6 71.5px,#9a9aa6 80.9px,transparent 80.9px,transparent 82.2px,#9a9aa6 82.2px,#9a9aa6 91.1px,transparent 91.1px,transparent 92.4px,#9a9aa6 92.4px,#9a9aa6 96.6px,transparent 96.6px,transparent 97.9px,#9a9aa6 97.9px,#9a9aa6 107.2px,transparent 107.2px,transparent 108.5px,#9a9aa6 108.5px,#9a9aa6 116.0px,transparent 116.0px,transparent 116.0px)"></div>
<div class="a" style="left:1019.2px;top:368.62px;width:113.0px;height:2.0px;background:linear-gradient(90deg,#9a9aa6 0.0px,#9a9aa6 8.5px,transparent 8.5px,transparent 9.8px,#9a9aa6 9.8px,#9a9aa6 16.6px,transparent 16.6px,transparent 17.9px,#9a9aa6 17.9px,#9a9aa6 27.0px,transparent 27.0px,transparent 28.3px,#9a9aa6 28.3px,#9a9aa6 33.0px,transparent 33.0px,transparent 34.3px,#9a9aa6 34.3px,#9a9aa6 42.0px,transparent 42.0px,transparent 43.3px,#9a9aa6 43.3px,#9a9aa6 47.8px,transparent 47.8px,transparent 49.1px,#9a9aa6 49.1px,#9a9aa6 52.8px,transparent 52.8px,transparent 54.1px,#9a9aa6 54.1px,#9a9aa6 58.1px,transparent 58.1px,transparent 59.4px,#9a9aa6 59.4px,#9a9aa6 66.5px,transparent 66.5px,transparent 67.8px,#9a9aa6 67.8px,#9a9aa6 76.8px,transparent 76.8px,transparent 78.1px,#9a9aa6 78.1px,#9a9aa6 85.1px,transparent 85.1px,transparent 86.4px,#9a9aa6 86.4px,#9a9aa6 95.9px,transparent 95.9px,transparent 97.2px,#9a9aa6 97.2px,#9a9aa6 106.5px,transparent 106.5px,transparent 107.8px,#9a9aa6 107.8px,#9a9aa6 111.7px,transparent 111.7px,transparent 113.0px)"></div>
<div class="a" style="left:1019.2px;top:371.98px;width:113.0px;height:2.0px;background:linear-gradient(90deg,#9a9aa6 0.0px,#9a9aa6 5.7px,transparent 5.7px,transparent 7.0px,#9a9aa6 7.0px,#9a9aa6 14.7px,transparent 14.7px,transparent 16.0px,#9a9aa6 16.0px,#9a9aa6 22.6px,transparent 22.6px,transparent 23.9px,#9a9aa6 23.9px,#9a9aa6 27.9px,transparent 27.9px,transparent 29.2px,#9a9aa6 29.2px,#9a9aa6 33.7px,transparent 33.7px,transparent 35.0px,#9a9aa6 35.0px,#9a9aa6 40.2px,transparent 40.2px,transparent 41.5px,#9a9aa6 41.5px,#9a9aa6 48.8px,transparent 48.8px,transparent 50.1px,#9a9aa6 50.1px,#9a9aa6 53.4px,transparent 53.4px,transparent 54.7px,#9a9aa6 54.7px,#9a9aa6 59.1px,transparent 59.1px,transparent 60.4px,#9a9aa6 60.4px,#9a9aa6 64.8px,transparent 64.8px,transparent 66.1px,#9a9aa6 66.1px,#9a9aa6 76.0px,transparent 76.0px,transparent 77.3px,#9a9aa6 77.3px,#9a9aa6 85.1px,transparent 85.1px,transparent 86.4px,#9a9aa6 86.4px,#9a9aa6 93.6px,transparent 93.6px,transparent 94.9px,#9a9aa6 94.9px,#9a9aa6 100.8px,transparent 100.8px,transparent 102.1px,#9a9aa6 102.1px,#9a9aa6 107.4px,transparent 107.4px,transparent 108.7px,#9a9aa6 108.7px,#9a9aa6 113.0px,transparent 113.0px,transparent 113.0px)"></div>
<div class="a" style="left:1019.2px;top:375.34px;width:119.0px;height:2.0px;background:linear-gradient(90deg,#9a9aa6 0.0px,#9a9aa6 7.5px,transparent 7.5px,transparent 8.8px,#9a9aa6 8.8px,#9a9aa6 16.5px,transparent 16.5px,transparent 17.8px,#9a9aa6 17.8px,#9a9aa6 22.4px,transparent 22.4px,transparent 23.7px,#9a9aa6 23.7px,#9a9aa6 27.1px,transparent 27.1px,transparent 28.4px,#9a9aa6 28.4px,#9a9aa6 33.4px,transparent 33.4px,transparent 34.7px,#9a9aa6 34.7px,#9a9aa6 42.1px,transparent 42.1px,transparent 43.4px,#9a9aa6 43.4px,#9a9aa6 53.2px,transparent 53.2px,transparent 54.5px,#9a9aa6 54.5px,#9a9aa6 60.5px,transparent 60.5px,transparent 61.8px,#9a9aa6 61.8px,#9a9aa6 68.7px,transparent 68.7px,transparent 70.0px,#9a9aa6 70.0px,#9a9aa6 73.2px,transparent 73.2px,transparent 74.5px,#9a9aa6 74.5px,#9a9aa6 77.6px,transparent 77.6px,transparent 78.9px,#9a9aa6 78.9px,#9a9aa6 85.8px,transparent 85.8px,transparent 87.1px,#9a9aa6 87.1px,#9a9aa6 94.1px,transparent 94.1px,transparent 95.4px,#9a9aa6 95.4px,#9a9aa6 101.3px,transparent 101.3px,transparent 102.6px,#9a9aa6 102.6px,#9a9aa6 112.1px,transparent 112.1px,transparent 113.4px,#9a9aa6 113.4px,#9a9aa6 119.0px,transparent 119.0px,transparent 119.0px)"></div>
<div class="a" style="left:1019.2px;top:378.70px;width:110.0px;height:2.0px;background:linear-gradient(90deg,#9a9aa6 0.0px,#9a9aa6 3.3px,transparent 3.3px,transparent 4.6px,#9a9aa6 4.6px,#9a9aa6 10.9px,transparent 10.9px,transparent 12.2px,#9a9aa6 12.2px,#9a9aa6 22.2px,transparent 22.2px,transparent 23.5px,#9a9aa6 23.5px,#9a9aa6 31.5px,transparent 31.5px,transparent 32.8px,#9a9aa6 32.8px,#9a9aa6 41.5px,transparent 41.5px,transparent 42.8px,#9a9aa6 42.8px,#9a9aa6 49.0px,transparent 49.0px,transparent 50.3px,#9a9aa6 50.3px,#9a9aa6 55.3px,transparent 55.3px,transparent 56.6px,#9a9aa6 56.6px,#9a9aa6 59.9px,transparent 59.9px,transparent 61.2px,#9a9aa6 61.2px,#9a9aa6 68.8px,transparent 68.8px,transparent 70.1px,#9a9aa6 70.1px,#9a9aa6 74.4px,transparent 74.4px,transparent 75.7px,#9a9aa6 75.7px,#9a9aa6 81.4px,transparent 81.4px,transparent 82.7px,#9a9aa6 82.7px,#9a9aa6 89.4px,transparent 89.4px,transparent 90.7px,#9a9aa6 90.7px,#9a9aa6 93.7px,transparent 93.7px,transparent 95.0px,#9a9aa6 95.0px,#9a9aa6 103.5px,transparent 103.5px,transparent 104.8px,#9a9aa6 104.8px,#9a9aa6 109.3px,transparent 109.3px,transparent 110.0px)"></div>
<div class="a" style="left:1019.2px;top:382.06px;width:119.0px;height:2.0px;background:linear-gradient(90deg,#9a9aa6 0.0px,#9a9aa6 3.1px,transparent 3.1px,transparent 4.4px,#9a9aa6 4.4px,#9a9aa6 12.2px,transparent 12.2px,transparent 13.5px,#9a9aa6 13.5px,#9a9aa6 19.7px,transparent 19.7px,transparent 21.0px,#9a9aa6 21.0px,#9a9aa6 24.4px,transparent 24.4px,transparent 25.7px,#9a9aa6 25.7px,#9a9aa6 35.2px,transparent 35.2px,transparent 36.5px,#9a9aa6 36.5px,#9a9aa6 46.1px,transparent 46.1px,transparent 47.4px,#9a9aa6 47.4px,#9a9aa6 57.4px,transparent 57.4px,transparent 58.7px,#9a9aa6 58.7px,#9a9aa6 65.0px,transparent 65.0px,transparent 66.3px,#9a9aa6 66.3px,#9a9aa6 70.8px,transparent 70.8px,transparent 72.1px,#9a9aa6 72.1px,#9a9aa6 76.1px,transparent 76.1px,transparent 77.4px,#9a9aa6 77.4px,#9a9aa6 86.1px,transparent 86.1px,transparent 87.4px,#9a9aa6 87.4px,#9a9aa6 94.6px,transparent 94.6px,transparent 95.9px,#9a9aa6 95.9px,#9a9aa6 101.1px,transparent 101.1px,transparent 102.4px,#9a9aa6 102.4px,#9a9aa6 107.1px,transparent 107.1px,transparent 108.4px,#9a9aa6 108.4px,#9a9aa6 116.1px,transparent 116.1px,transparent 117.4px,#9a9aa6 117.4px,#9a9aa6 119.0px,transparent 119.0px,transparent 119.0px)"></div>
<div class="a" style="left:1019.2px;top:385.42px;width:120.0px;height:2.0px;background:linear-gradient(90deg,#9a9aa6 0.0px,#9a9aa6 8.9px,transparent 8.9px,transparent 10.2px,#9a9aa6 10.2px,#9a9aa6 15.7px,transparent 15.7px,transparent 17.0px,#9a9aa6 17.0px,#9a9aa6 26.5px,transparent 26.5px,transparent 27.8px,#9a9aa6 27.8px,#9a9aa6 35.3px,transparent 35.3px,transparent 36.6px,#9a9aa6 36.6px,#9a9aa6 41.4px,transparent 41.4px,transparent 42.7px,#9a9aa6 42.7px,#9a9aa6 48.6px,transparent 48.6px,transparent 49.9px,#9a9aa6 49.9px,#9a9aa6 54.2px,transparent 54.2px,transparent 55.5px,#9a9aa6 55.5px,#9a9aa6 59.5px,transparent 59.5px,transparent 60.8px,#9a9aa6 60.8px,#9a9aa6 68.9px,transparent 68.9px,transparent 70.2px,#9a9aa6 70.2px,#9a9aa6 78.0px,transparent 78.0px,transparent 79.3px,#9a9aa6 79.3px,#9a9aa6 85.0px,transparent 85.0px,transparent 86.3px,#9a9aa6 86.3px,#9a9aa6 89.9px,transparent 89.9px,transparent 91.2px,#9a9aa6 91.2px,#9a9aa6 99.6px,transparent 99.6px,transparent 100.9px,#9a9aa6 100.9px,#9a9aa6 105.0px,transparent 105.0px,transparent 106.3px,#9a9aa6 106.3px,#9a9aa6 116.0px,transparent 116.0px,transparent 117.3px,#9a9aa6 117.3px,#9a9aa6 120.0px,transparent 120.0px,transparent 120.0px)"></div>
<div class="a" style="left:1019.2px;top:388.78px;width:121.0px;height:2.0px;background:linear-gradient(90deg,#9a9aa6 0.0px,#9a9aa6 6.3px,transparent 6.3px,transparent 7.6px,#9a9aa6 7.6px,#9a9aa6 16.1px,transparent 16.1px,transparent 17.4px,#9a9aa6 17.4px,#9a9aa6 20.7px,transparent 20.7px,transparent 22.0px,#9a9aa6 22.0px,#9a9aa6 29.9px,transparent 29.9px,transparent 31.2px,#9a9aa6 31.2px,#9a9aa6 35.2px,transparent 35.2px,transparent 36.5px,#9a9aa6 36.5px,#9a9aa6 43.1px,transparent 43.1px,transparent 44.4px,#9a9aa6 44.4px,#9a9aa6 52.8px,transparent 52.8px,transparent 54.1px,#9a9aa6 54.1px,#9a9aa6 62.4px,transparent 62.4px,transparent 63.7px,#9a9aa6 63.7px,#9a9aa6 68.5px,transparent 68.5px,transparent 69.8px,#9a9aa6 69.8px,#9a9aa6 76.4px,transparent 76.4px,transparent 77.7px,#9a9aa6 77.7px,#9a9aa6 87.6px,transparent 87.6px,transparent 88.9px,#9a9aa6 88.9px,#9a9aa6 94.3px,transparent 94.3px,transparent 95.6px,#9a9aa6 95.6px,#9a9aa6 102.6px,transparent 102.6px,transparent 103.9px,#9a9aa6 103.9px,#9a9aa6 110.3px,transparent 110.3px,transparent 111.6px,#9a9aa6 111.6px,#9a9aa6 116.3px,transparent 116.3px,transparent 117.6px,#9a9aa6 117.6px,#9a9aa6 121.0px,transparent 121.0px,transparent 121.0px)"></div>
<div class="a" style="left:1019.2px;top:392.14px;width:111.0px;height:2.0px;background:linear-gradient(90deg,#9a9aa6 0.0px,#9a9aa6 3.6px,transparent 3.6px,transparent 4.9px,#9a9aa6 4.9px,#9a9aa6 13.8px,transparent 13.8px,transparent 15.1px,#9a9aa6 15.1px,#9a9aa6 21.2px,transparent 21.2px,transparent 22.5px,#9a9aa6 22.5px,#9a9aa6 29.4px,transparent 29.4px,transparent 30.7px,#9a9aa6 30.7px,#9a9aa6 37.2px,transparent 37.2px,transparent 38.5px,#9a9aa6 38.5px,#9a9aa6 44.7px,transparent 44.7px,transparent 46.0px,#9a9aa6 46.0px,#9a9aa6 55.9px,transparent 55.9px,transparent 57.2px,#9a9aa6 57.2px,#9a9aa6 62.8px,transparent 62.8px,transparent 64.1px,#9a9aa6 64.1px,#9a9aa6 72.4px,transparent 72.4px,transparent 73.7px,#9a9aa6 73.7px,#9a9aa6 82.5px,transparent 82.5px,transparent 83.8px,#9a9aa6 83.8px,#9a9aa6 93.6px,transparent 93.6px,transparent 94.9px,#9a9aa6 94.9px,#9a9aa6 104.2px,transparent 104.2px,transparent 105.5px,#9a9aa6 105.5px,#9a9aa6 109.1px,transparent 109.1px,transparent 110.4px,#9a9aa6 110.4px,#9a9aa6 111.0px,transparent 111.0px,transparent 111.0px)"></div>
<div class="a" style="left:1019.2px;top:395.50px;width:103.0px;height:2.0px;background:linear-gradient(90deg,#9a9aa6 0.0px,#9a9aa6 9.5px,transparent 9.5px,transparent 10.8px,#9a9aa6 10.8px,#9a9aa6 14.8px,transparent 14.8px,transparent 16.1px,#9a9aa6 16.1px,#9a9aa6 22.9px,transparent 22.9px,transparent 24.2px,#9a9aa6 24.2px,#9a9aa6 29.4px,transparent 29.4px,transparent 30.7px,#9a9aa6 30.7px,#9a9aa6 38.9px,transparent 38.9px,transparent 40.2px,#9a9aa6 40.2px,#9a9aa6 50.0px,transparent 50.0px,transparent 51.3px,#9a9aa6 51.3px,#9a9aa6 57.9px,transparent 57.9px,transparent 59.2px,#9a9aa6 59.2px,#9a9aa6 62.7px,transparent 62.7px,transparent 64.0px,#9a9aa6 64.0px,#9a9aa6 72.5px,transparent 72.5px,transparent 73.8px,#9a9aa6 73.8px,#9a9aa6 79.0px,transparent 79.0px,transparent 80.3px,#9a9aa6 80.3px,#9a9aa6 89.2px,transparent 89.2px,transparent 90.5px,#9a9aa6 90.5px,#9a9aa6 100.3px,transparent 100.3px,transparent 101.6px,#9a9aa6 101.6px,#9a9aa6 103.0px,transparent 103.0px,transparent 103.0px)"></div>
<div class="a" style="left:1019.2px;top:398.86px;width:124.0px;height:2.0px;background:linear-gradient(90deg,#9a9aa6 0.0px,#9a9aa6 5.2px,transparent 5.2px,transparent 6.5px,#9a9aa6 6.5px,#9a9aa6 13.7px,transparent 13.7px,transparent 15.0px,#9a9aa6 15.0px,#9a9aa6 18.1px,transparent 18.1px,transparent 19.4px,#9a9aa6 19.4px,#9a9aa6 24.1px,transparent 24.1px,transparent 25.4px,#9a9aa6 25.4px,#9a9aa6 34.5px,transparent 34.5px,transparent 35.8px,#9a9aa6 35.8px,#9a9aa6 44.9px,transparent 44.9px,transparent 46.2px,#9a9aa6 46.2px,#9a9aa6 51.5px,transparent 51.5px,transparent 52.8px,#9a9aa6 52.8px,#9a9aa6 59.1px,transparent 59.1px,transparent 60.4px,#9a9aa6 60.4px,#9a9aa6 68.9px,transparent 68.9px,transparent 70.2px,#9a9aa6 70.2px,#9a9aa6 78.4px,transparent 78.4px,transparent 79.7px,#9a9aa6 79.7px,#9a9aa6 88.0px,transparent 88.0px,transparent 89.3px,#9a9aa6 89.3px,#9a9aa6 98.1px,transparent 98.1px,transparent 99.4px,#9a9aa6 99.4px,#9a9aa6 108.7px,transparent 108.7px,transparent 110.0px,#9a9aa6 110.0px,#9a9aa6 116.4px,transparent 116.4px,transparent 117.7px,#9a9aa6 117.7px,#9a9aa6 122.7px,transparent 122.7px,transparent 124.0px)"></div>
<div class="a" style="left:1019.2px;top:402.22px;width:108.0px;height:2.0px;background:linear-gradient(90deg,#9a9aa6 0.0px,#9a9aa6 8.5px,transparent 8.5px,transparent 9.8px,#9a9aa6 9.8px,#9a9aa6 16.7px,transparent 16.7px,transparent 18.0px,#9a9aa6 18.0px,#9a9aa6 24.6px,transparent 24.6px,transparent 25.9px,#9a9aa6 25.9px,#9a9aa6 31.1px,transparent 31.1px,transparent 32.4px,#9a9aa6 32.4px,#9a9aa6 36.9px,transparent 36.9px,transparent 38.2px,#9a9aa6 38.2px,#9a9aa6 48.0px,transparent 48.0px,transparent 49.3px,#9a9aa6 49.3px,#9a9aa6 52.3px,transparent 52.3px,transparent 53.6px,#9a9aa6 53.6px,#9a9aa6 60.1px,transparent 60.1px,transparent 61.4px,#9a9aa6 61.4px,#9a9aa6 67.9px,transparent 67.9px,transparent 69.2px,#9a9aa6 69.2px,#9a9aa6 73.8px,transparent 73.8px,transparent 75.1px,#9a9aa6 75.1px,#9a9aa6 82.7px,transparent 82.7px,transparent 84.0px,#9a9aa6 84.0px,#9a9aa6 92.4px,transparent 92.4px,transparent 93.7px,#9a9aa6 93.7px,#9a9aa6 101.7px,transparent 101.7px,transparent 103.0px,#9a9aa6 103.0px,#9a9aa6 106.8px,transparent 106.8px,transparent 108.0px)"></div>
<div class="a" style="left:1019.2px;top:405.58px;width:119.0px;height:2.0px;background:linear-gradient(90deg,#9a9aa6 0.0px,#9a9aa6 8.4px,transparent 8.4px,transparent 9.7px,#9a9aa6 9.7px,#9a9aa6 17.9px,transparent 17.9px,transparent 19.2px,#9a9aa6 19.2px,#9a9aa6 24.1px,transparent 24.1px,transparent 25.4px,#9a9aa6 25.4px,#9a9aa6 31.9px,transparent 31.9px,transparent 33.2px,#9a9aa6 33.2px,#9a9aa6 37.6px,transparent 37.6px,transparent 38.9px,#9a9aa6 38.9px,#9a9aa6 45.3px,transparent 45.3px,transparent 46.6px,#9a9aa6 46.6px,#9a9aa6 55.9px,transparent 55.9px,transparent 57.2px,#9a9aa6 57.2px,#9a9aa6 61.5px,transparent 61.5px,transparent 62.8px,#9a9aa6 62.8px,#9a9aa6 66.8px,transparent 66.8px,transparent 68.1px,#9a9aa6 68.1px,#9a9aa6 73.7px,transparent 73.7px,transparent 75.0px,#9a9aa6 75.0px,#9a9aa6 79.7px,transparent 79.7px,transparent 81.0px,#9a9aa6 81.0px,#9a9aa6 87.5px,transparent 87.5px,transparent 88.8px,#9a9aa6 88.8px,#9a9aa6 97.8px,transparent 97.8px,transparent 99.1px,#9a9aa6 99.1px,#9a9aa6 103.8px,transparent 103.8px,transparent 105.1px,#9a9aa6 105.1px,#9a9aa6 114.6px,transparent 114.6px,transparent 115.9px,#9a9aa6 115.9px,#9a9aa6 119.0px,transparent 119.0px,transparent 119.0px)"></div>
<div class="a" style="left:1019.2px;top:408.94px;width:123.0px;height:2.0px;background:linear-gradient(90deg,#9a9aa6 0.0px,#9a9aa6 9.3px,transparent 9.3px,transparent 10.6px,#9a9aa6 10.6px,#9a9aa6 16.7px,transparent 16.7px,transparent 18.0px,#9a9aa6 18.0px,#9a9aa6 26.3px,transparent 26.3px,transparent 27.6px,#9a9aa6 27.6px,#9a9aa6 32.5px,transparent 32.5px,transparent 33.8px,#9a9aa6 33.8px,#9a9aa6 38.0px,transparent 38.0px,transparent 39.3px,#9a9aa6 39.3px,#9a9aa6 45.0px,transparent 45.0px,transparent 46.3px,#9a9aa6 46.3px,#9a9aa6 51.0px,transparent 51.0px,transparent 52.3px,#9a9aa6 52.3px,#9a9aa6 57.8px,transparent 57.8px,transparent 59.1px,#9a9aa6 59.1px,#9a9aa6 69.0px,transparent 69.0px,transparent 70.3px,#9a9aa6 70.3px,#9a9aa6 79.5px,transparent 79.5px,transparent 80.8px,#9a9aa6 80.8px,#9a9aa6 85.8px,transparent 85.8px,transparent 87.1px,#9a9aa6 87.1px,#9a9aa6 93.3px,transparent 93.3px,transparent 94.6px,#9a9aa6 94.6px,#9a9aa6 98.1px,transparent 98.1px,transparent 99.4px,#9a9aa6 99.4px,#9a9aa6 104.8px,transparent 104.8px,transparent 106.1px,#9a9aa6 106.1px,#9a9aa6 112.5px,transparent 112.5px,transparent 113.8px,#9a9aa6 113.8px,#9a9aa6 121.8px,transparent 121.8px,transparent 123.0px)"></div>
<div class="a" style="left:1019.2px;top:412.30px;width:121.0px;height:2.0px;background:linear-gradient(90deg,#9a9aa6 0.0px,#9a9aa6 8.8px,transparent 8.8px,transparent 10.1px,#9a9aa6 10.1px,#9a9aa6 16.7px,transparent 16.7px,transparent 18.0px,#9a9aa6 18.0px,#9a9aa6 21.1px,transparent 21.1px,transparent 22.4px,#9a9aa6 22.4px,#9a9aa6 26.8px,transparent 26.8px,transparent 28.1px,#9a9aa6 28.1px,#9a9aa6 36.5px,transparent 36.5px,transparent 37.8px,#9a9aa6 37.8px,#9a9aa6 44.5px,transparent 44.5px,transparent 45.8px,#9a9aa6 45.8px,#9a9aa6 54.5px,transparent 54.5px,transparent 55.8px,#9a9aa6 55.8px,#9a9aa6 59.3px,transparent 59.3px,transparent 60.6px,#9a9aa6 60.6px,#9a9aa6 67.5px,transparent 67.5px,transparent 68.8px,#9a9aa6 68.8px,#9a9aa6 73.9px,transparent 73.9px,transparent 75.2px,#9a9aa6 75.2px,#9a9aa6 83.9px,transparent 83.9px,transparent 85.2px,#9a9aa6 85.2px,#9a9aa6 89.5px,transparent 89.5px,transparent 90.8px,#9a9aa6 90.8px,#9a9aa6 97.5px,transparent 97.5px,transparent 98.8px,#9a9aa6 98.8px,#9a9aa6 104.8px,transparent 104.8px,transparent 106.1px,#9a9aa6 106.1px,#9a9aa6 115.0px,transparent 115.0px,transparent 116.3px,#9a9aa6 116.3px,#9a9aa6 120.3px,transparent 120.3px,transparent 121.0px)"></div>
<div class="a" style="left:1019.2px;top:415.66px;width:122.0px;height:2.0px;background:linear-gradient(90deg,#9a9aa6 0.0px,#9a9aa6 6.3px,transparent 6.3px,transparent 7.6px,#9a9aa6 7.6px,#9a9aa6 12.4px,transparent 12.4px,transparent 13.7px,#9a9aa6 13.7px,#9a9aa6 22.0px,transparent 22.0px,transparent 23.3px,#9a9aa6 23.3px,#9a9aa6 29.8px,transparent 29.8px,transparent 31.1px,#9a9aa6 31.1px,#9a9aa6 40.4px,transparent 40.4px,transparent 41.7px,#9a9aa6 41.7px,#9a9aa6 45.6px,transparent 45.6px,transparent 46.9px,#9a9aa6 46.9px,#9a9aa6 50.4px,transparent 50.4px,transparent 51.7px,#9a9aa6 51.7px,#9a9aa6 57.0px,transparent 57.0px,transparent 58.3px,#9a9aa6 58.3px,#9a9aa6 67.3px,transparent 67.3px,transparent 68.6px,#9a9aa6 68.6px,#9a9aa6 75.7px,transparent 75.7px,transparent 77.0px,#9a9aa6 77.0px,#9a9aa6 84.5px,transparent 84.5px,transparent 85.8px,#9a9aa6 85.8px,#9a9aa6 90.3px,transparent 90.3px,transparent 91.6px,#9a9aa6 91.6px,#9a9aa6 101.3px,transparent 101.3px,transparent 102.6px,#9a9aa6 102.6px,#9a9aa6 110.6px,transparent 110.6px,transparent 111.9px,#9a9aa6 111.9px,#9a9aa6 120.6px,transparent 120.6px,transparent 121.9px,#9a9aa6 121.9px,#9a9aa6 122.0px,transparent 122.0px,transparent 122.0px)"></div>
<div class="a" style="left:1019.2px;top:419.02px;width:121.0px;height:2.0px;background:linear-gradient(90deg,#9a9aa6 0.0px,#9a9aa6 5.5px,transparent 5.5px,transparent 6.8px,#9a9aa6 6.8px,#9a9aa6 10.9px,transparent 10.9px,transparent 12.2px,#9a9aa6 12.2px,#9a9aa6 19.6px,transparent 19.6px,transparent 20.9px,#9a9aa6 20.9px,#9a9aa6 28.0px,transparent 28.0px,transparent 29.3px,#9a9aa6 29.3px,#9a9aa6 37.2px,transparent 37.2px,transparent 38.5px,#9a9aa6 38.5px,#9a9aa6 42.2px,transparent 42.2px,transparent 43.5px,#9a9aa6 43.5px,#9a9aa6 49.7px,transparent 49.7px,transparent 51.0px,#9a9aa6 51.0px,#9a9aa6 54.8px,transparent 54.8px,transparent 56.1px,#9a9aa6 56.1px,#9a9aa6 59.9px,transparent 59.9px,transparent 61.2px,#9a9aa6 61.2px,#9a9aa6 65.3px,transparent 65.3px,transparent 66.6px,#9a9aa6 66.6px,#9a9aa6 76.4px,transparent 76.4px,transparent 77.7px,#9a9aa6 77.7px,#9a9aa6 82.0px,transparent 82.0px,transparent 83.3px,#9a9aa6 83.3px,#9a9aa6 87.7px,transparent 87.7px,transparent 89.0px,#9a9aa6 89.0px,#9a9aa6 95.9px,transparent 95.9px,transparent 97.2px,#9a9aa6 97.2px,#9a9aa6 100.5px,transparent 100.5px,transparent 101.8px,#9a9aa6 101.8px,#9a9aa6 109.3px,transparent 109.3px,transparent 110.6px,#9a9aa6 110.6px,#9a9aa6 115.6px,transparent 115.6px,transparent 116.9px,#9a9aa6 116.9px,#9a9aa6 121.0px,transparent 121.0px,transparent 121.0px)"></div>
<div class="a" style="left:1019.2px;top:422.50px;width:8.0px;height:2.0px;background:linear-gradient(90deg,#74b0ee 0.0px,#74b0ee 8.0px,transparent 8.0px,transparent 8.0px)"></div>
<div class="a" style="left:1027.2px;top:422.50px;width:13.0px;height:2.0px;background:linear-gradient(90deg,#6c6ca8 0.0px,#6c6ca8 13.0px,transparent 13.0px,transparent 13.0px)"></div>
<div class="a" style="left:1019.2px;top:432.60px;width:10.0px;height:2.0px;background:linear-gradient(90deg,#74b0ee 0.0px,#74b0ee 10.0px,transparent 10.0px,transparent 10.0px)"></div>
<div class="a" style="left:1029.2px;top:432.60px;width:11.0px;height:2.0px;background:linear-gradient(90deg,#6c6ca8 0.0px,#6c6ca8 11.0px,transparent 11.0px,transparent 11.0px)"></div>
<div class="a" style="left:1030px;top:432.4px;width:10.5px;height:2.4px;background:#f0a070;"></div>
<div class="a" style="left:1019.2px;top:436.00px;width:116.0px;height:2.0px;background:linear-gradient(90deg,#a2a2a2 0.0px,#a2a2a2 7.8px,transparent 7.8px,transparent 9.1px,#a2a2a2 9.1px,#a2a2a2 18.2px,transparent 18.2px,transparent 19.5px,#a2a2a2 19.5px,#a2a2a2 28.5px,transparent 28.5px,transparent 29.8px,#a2a2a2 29.8px,#a2a2a2 35.0px,transparent 35.0px,transparent 36.3px,#a2a2a2 36.3px,#a2a2a2 44.0px,transparent 44.0px,transparent 45.3px,#a2a2a2 45.3px,#a2a2a2 50.7px,transparent 50.7px,transparent 52.0px,#a2a2a2 52.0px,#a2a2a2 58.4px,transparent 58.4px,transparent 59.7px,#a2a2a2 59.7px,#a2a2a2 70.6px,transparent 70.6px,transparent 71.9px,#a2a2a2 71.9px,#a2a2a2 78.1px,transparent 78.1px,transparent 79.4px,#a2a2a2 79.4px,#a2a2a2 84.5px,transparent 84.5px,transparent 85.8px,#a2a2a2 85.8px,#a2a2a2 93.9px,transparent 93.9px,transparent 95.2px,#a2a2a2 95.2px,#a2a2a2 100.4px,transparent 100.4px,transparent 101.7px,#a2a2a2 101.7px,#a2a2a2 106.8px,transparent 106.8px,transparent 108.1px,#a2a2a2 108.1px,#a2a2a2 116.0px,transparent 116.0px,transparent 116.0px)"></div>
<div class="a" style="left:1019.2px;top:439.30px;width:66.0px;height:2.0px;background:linear-gradient(90deg,#a2a2a2 0.0px,#a2a2a2 6.0px,transparent 6.0px,transparent 7.3px,#a2a2a2 7.3px,#a2a2a2 12.6px,transparent 12.6px,transparent 13.9px,#a2a2a2 13.9px,#a2a2a2 21.0px,transparent 21.0px,transparent 22.3px,#a2a2a2 22.3px,#a2a2a2 27.5px,transparent 27.5px,transparent 28.8px,#a2a2a2 28.8px,#a2a2a2 35.6px,transparent 35.6px,transparent 36.9px,#a2a2a2 36.9px,#a2a2a2 45.5px,transparent 45.5px,transparent 46.8px,#a2a2a2 46.8px,#a2a2a2 52.0px,transparent 52.0px,transparent 53.3px,#a2a2a2 53.3px,#a2a2a2 58.3px,transparent 58.3px,transparent 59.6px,#a2a2a2 59.6px,#a2a2a2 64.8px,transparent 64.8px,transparent 66.0px)"></div>
<div class="a" style="left:1019.2px;top:442.70px;width:7.0px;height:2.0px;background:linear-gradient(90deg,#74b0ee 0.0px,#74b0ee 7.0px,transparent 7.0px,transparent 7.0px)"></div>
<div class="a" style="left:1026.2px;top:442.70px;width:11.0px;height:2.0px;background:linear-gradient(90deg,#6c6ca8 0.0px,#6c6ca8 11.0px,transparent 11.0px,transparent 11.0px)"></div>
<div class="a" style="left:1026.5px;top:442.5px;width:10.5px;height:2.4px;background:#f0a070;"></div>
<div class="a" style="left:1019.2px;top:449.20px;width:8.0px;height:2.0px;background:linear-gradient(90deg,#74b0ee 0.0px,#74b0ee 8.0px,transparent 8.0px,transparent 8.0px)"></div>
<div class="a" style="left:1027.2px;top:449.20px;width:17.0px;height:2.0px;background:linear-gradient(90deg,#6c6ca8 0.0px,#6c6ca8 17.0px,transparent 17.0px,transparent 17.0px)"></div>
<div class="a" style="left:1142.8px;top:314px;width:3.2px;height:138px;background:#f4f4f4;"></div>
<div class="a" style="left:1143.3px;top:318px;width:2.2px;height:8.5px;background:#c4c4c4;"></div>
<div class="a" style="left:1007.9000000000001px;top:451.8px;width:139px;height:3.8px;background:#f0f0f0;"></div>
<div class="a" style="left:1014.0px;top:453.25px;width:9.0px;height:1.1px;background:linear-gradient(90deg,#888 0.0px,#888 9.0px,transparent 9.0px,transparent 9.0px)"></div>
<div class="a" style="left:1025.0px;top:453.25px;width:12.0px;height:1.1px;background:linear-gradient(90deg,#888 0.0px,#888 12.0px,transparent 12.0px,transparent 12.0px)"></div>
<div class="a" style="left:1050.5px;top:453.25px;width:7.0px;height:1.1px;background:linear-gradient(90deg,#888 0.0px,#888 7.0px,transparent 7.0px,transparent 7.0px)"></div>
<div class="a" style="left:1007.9000000000001px;top:455.4px;width:139px;height:0.7px;background:#9a9a9a;"></div>
<div class="a" style="left:1007.9000000000001px;top:456.1px;width:139px;height:5.4px;background:#f0f0f0;"></div>
<div class="a" style="left:1008.5px;top:456.6px;width:13px;height:4.9px;background:#fff;"></div>
<div class="a" style="left:1009.5px;top:457.65px;width:10.0px;height:1.1px;background:linear-gradient(90deg,#777 0.0px,#777 10.0px,transparent 10.0px,transparent 10.0px)"></div>
<div class="a" style="left:1024.5px;top:457.85px;width:3.5px;height:1.1px;background:linear-gradient(90deg,#777 0.0px,#777 3.5px,transparent 3.5px,transparent 3.5px)"></div>
<div class="a" style="left:1032.0px;top:457.85px;width:8.0px;height:1.1px;background:linear-gradient(90deg,#777 0.0px,#777 8.0px,transparent 8.0px,transparent 8.0px)"></div>
<div class="a" style="left:1044.0px;top:457.85px;width:18.0px;height:1.1px;background:linear-gradient(90deg,#777 0.0px,#777 18.0px,transparent 18.0px,transparent 18.0px)"></div>
<div class="a" style="left:1143px;top:457.5px;width:1.5px;height:1.5px;background:#444;"></div>
<div class="a" style="left:1007.9000000000001px;top:461.5px;width:139px;height:1.3px;background:#f4f4f4;"></div>
<div class="a" style="left:968.2px;top:483px;width:177.79999999999995px;height:5px;background:#f0f0f0;"></div>
<div class="a" style="left:969px;top:485px;width:1.8px;height:2px;background:#555;"></div>
<div class="a" style="left:974px;top:485px;width:2.4px;height:2px;background:#555;"></div>
<div class="a" style="left:1079px;top:485px;width:2px;height:1.6px;background:#aaa;"></div>
<div class="a" style="left:1085.0px;top:485.45px;width:8.0px;height:1.1px;background:linear-gradient(90deg,#777 0.0px,#777 8.0px,transparent 8.0px,transparent 8.0px)"></div>
<div class="a" style="left:1095.0px;top:485.45px;width:7.0px;height:1.1px;background:linear-gradient(90deg,#777 0.0px,#777 7.0px,transparent 7.0px,transparent 7.0px)"></div>
<div class="a" style="left:1105.0px;top:485.45px;width:8.0px;height:1.1px;background:linear-gradient(90deg,#888 0.0px,#888 8.0px,transparent 8.0px,transparent 8.0px)"></div>
<div class="a" style="left:1115.0px;top:485.45px;width:9.0px;height:1.1px;background:linear-gradient(90deg,#888 0.0px,#888 9.0px,transparent 9.0px,transparent 9.0px)"></div>
<div class="a" style="left:1127.3px;top:484.7px;width:2px;height:2.6px;background:#a0209c;"></div>
<div class="a" style="left:1133.6px;top:484.7px;width:2px;height:2.6px;background:#a0209c;"></div>
<div class="a" style="left:1139.8px;top:484.7px;width:2px;height:2.6px;background:#a0209c;"></div>
<div class="a" style="left:1241.8px;top:298.2px;width:179.79999999999995px;height:194.40000000000003px;background:#fff;border:1px solid #b8b8b8;border-left-color:#7a7a7a"></div>
<div class="a" style="left:1243.6px;top:300.4px;width:1.8px;height:2px;background:#e03020;"></div>
<div class="a" style="left:1247.5px;top:300.90px;width:61.0px;height:1.2px;background:linear-gradient(90deg,#c0c0c0 0.0px,#c0c0c0 9.3px,transparent 9.3px,transparent 10.3px,#c0c0c0 10.3px,#c0c0c0 24.1px,transparent 24.1px,transparent 25.1px,#c0c0c0 25.1px,#c0c0c0 34.7px,transparent 34.7px,transparent 35.7px,#c0c0c0 35.7px,#c0c0c0 40.2px,transparent 40.2px,transparent 41.2px,#c0c0c0 41.2px,#c0c0c0 51.0px,transparent 51.0px,transparent 52.0px,#c0c0c0 52.0px,#c0c0c0 56.2px,transparent 56.2px,transparent 57.2px,#c0c0c0 57.2px,#c0c0c0 61.0px,transparent 61.0px,transparent 61.0px)"></div>
<div class="a" style="left:1398px;top:301.2px;width:1.4px;height:0.8px;background:#c8c8c8;"></div>
<div class="a" style="left:1407.5px;top:301.2px;width:1.4px;height:0.8px;background:#c8c8c8;"></div>
<div class="a" style="left:1416px;top:301.2px;width:1.4px;height:0.8px;background:#c8c8c8;"></div>
<div class="a" style="left:1244.0px;top:305.00px;width:48.0px;height:2.0px;background:linear-gradient(90deg,#9c9c9c 0.0px,#9c9c9c 5.1px,transparent 5.1px,transparent 7.5px,#9c9c9c 7.5px,#9c9c9c 11.6px,transparent 11.6px,transparent 14.0px,#9c9c9c 14.0px,#9c9c9c 18.3px,transparent 18.3px,transparent 20.7px,#9c9c9c 20.7px,#9c9c9c 25.8px,transparent 25.8px,transparent 28.2px,#9c9c9c 28.2px,#9c9c9c 33.6px,transparent 33.6px,transparent 36.0px,#9c9c9c 36.0px,#9c9c9c 40.3px,transparent 40.3px,transparent 42.7px,#9c9c9c 42.7px,#9c9c9c 46.8px,transparent 46.8px,transparent 48.0px)"></div>
<div class="a" style="left:1242.8px;top:308.2px;width:177.79999999999995px;height:6.6px;background:#e6e6e6;"></div>
<div class="a" style="left:1246.0px;top:310.75px;width:19.0px;height:1.3px;background:linear-gradient(90deg,#777 0.0px,#777 19.0px,transparent 19.0px,transparent 19.0px)"></div>
<div class="a" style="left:1271.0px;top:310.75px;width:14.0px;height:1.3px;background:linear-gradient(90deg,#777 0.0px,#777 14.0px,transparent 14.0px,transparent 14.0px)"></div>
<div class="a" style="left:1290.6px;top:308.8px;width:33px;height:6px;background:#f6f6f6;"></div>
<div class="a" style="left:1295.0px;top:310.90px;width:23.0px;height:1.2px;background:linear-gradient(90deg,#6a6a6a 0.0px,#6a6a6a 23.0px,transparent 23.0px,transparent 23.0px)"></div>
<div class="a" style="left:1320.5px;top:311px;width:1.3px;height:1.3px;background:#555;"></div>
<div class="a" style="left:1390.5px;top:309.3px;width:4px;height:4px;border:0.7px solid #8a8a8a;border-radius:50%"></div>
<div class="a" style="left:1400.0px;top:310.80px;width:17.0px;height:1.4px;background:linear-gradient(90deg,#555 0.0px,#555 8.7px,transparent 8.7px,transparent 9.7px,#555 9.7px,#555 17.0px,transparent 17.0px,transparent 17.0px)"></div>
<div class="a" style="left:1242.8px;top:314.8px;width:177.79999999999995px;height:8.6px;background:#fbfbfb;"></div>
<div class="a" style="left:1245px;top:317.2px;width:3.4px;height:3.6px;background:#d4d4d4;"></div>
<div class="a" style="left:1252.5px;top:317.2px;width:4px;height:3.6px;background:#444;"></div>
<div class="a" style="left:1261px;top:317.2px;width:4px;height:3.6px;background:#7a7a7a;"></div>
<div class="a" style="left:1269.5px;top:317.2px;width:3.6px;height:3.6px;background:#777;"></div>
<div class="a" style="left:1277.5px;top:317.2px;width:4px;height:3.6px;background:#777;"></div>
<div class="a" style="left:1286px;top:317.2px;width:3.4px;height:3.6px;background:#cfcfcf;"></div>
<div class="a" style="left:1294px;top:317.2px;width:3.6px;height:3.6px;background:#8a8a8a;"></div>
<div class="a" style="left:1321px;top:317.2px;width:2.6px;height:3.6px;background:#2858d0;"></div>
<div class="a" style="left:1329px;top:317.2px;width:3.6px;height:3.6px;background:#666;"></div>
<div class="a" style="left:1337.5px;top:317.2px;width:3.6px;height:3.6px;background:#8a8a8a;"></div>
<div class="a" style="left:1345.5px;top:317.2px;width:3.6px;height:3.6px;background:#9a9a9a;"></div>
<div class="a" style="left:1370.5px;top:317.2px;width:3.6px;height:3.6px;background:#2a88e0;"></div>
<div class="a" style="left:1379px;top:317.2px;width:3.6px;height:3.6px;background:#666;"></div>
<div class="a" style="left:1387px;top:317.2px;width:3.8px;height:3.6px;background:#333;"></div>
<div class="a" style="left:1304px;top:318.6px;width:1px;height:1.2px;background:#bbb;"></div>
<div class="a" style="left:1309.0px;top:318.50px;width:5.0px;height:1px;background:linear-gradient(90deg,#bbb 0.0px,#bbb 5.0px,transparent 5.0px,transparent 5.0px)"></div>
<div class="a" style="left:1354.5px;top:318.45px;width:6.0px;height:1.1px;background:linear-gradient(90deg,#9a9a9a 0.0px,#9a9a9a 6.0px,transparent 6.0px,transparent 6.0px)"></div>
<div class="a" style="left:1364px;top:318.7px;width:1.3px;height:0.9px;background:#888;"></div>
<div class="a" style="left:1395.5px;top:318.50px;width:4.0px;height:1px;background:linear-gradient(90deg,#aaa 0.0px,#aaa 1.3px,transparent 1.3px,transparent 2.3px,#aaa 2.3px,#aaa 3.6px,transparent 3.6px,transparent 4.0px)"></div>
<div class="a" style="left:1242.8px;top:323.3px;width:177.79999999999995px;height:0.6px;background:#e0e0e0;"></div>
<div class="a" style="left:1411.6px;top:323.9px;width:0.6px;height:168px;background:#e4e4e4;"></div>
<div class="a" style="left:1406.5px;top:324px;width:3px;height:168px;background:#f6f6f6;"></div>
<div class="a" style="left:1407.2px;top:325.5px;width:1.8px;height:7.5px;background:#a8a8a8;"></div>
<div class="a" style="left:1415.2px;top:325.9px;width:3.6px;height:3.6px;background:#666;"></div>
<div class="a" style="left:1415.2px;top:334.52px;width:3.6px;height:3.6px;background:#28a070;"></div>
<div class="a" style="left:1415.2px;top:343.14px;width:3.6px;height:3.6px;background:#d83458;"></div>
<div class="a" style="left:1415.2px;top:351.76px;width:3.6px;height:3.6px;background:#e04050;"></div>
<div class="a" style="left:1415.2px;top:360.38px;width:3.6px;height:3.6px;background:#ecc020;"></div>
<div class="a" style="left:1415.2px;top:369.0px;width:3.6px;height:3.6px;background:#4a5cd8;"></div>
<div class="a" style="left:1415.2px;top:377.62px;width:3.6px;height:3.6px;background:#2aa888;"></div>
<div class="a" style="left:1415.2px;top:386.23999999999995px;width:3.6px;height:3.6px;background:#e03448;"></div>
<div class="a" style="left:1415.2px;top:394.85999999999996px;width:3.6px;height:3.6px;background:#5a6ce0;"></div>
<div class="a" style="left:1415.2px;top:403.47999999999996px;width:3.6px;height:3.6px;background:#8864c8;"></div>
<div class="a" style="left:1415.2px;top:412.09999999999997px;width:3.6px;height:3.6px;background:#6a6a6a;"></div>
<div class="a" style="left:1416.5px;top:487px;width:1.6px;height:1.6px;background:#999;"></div>
<div class="a" style="left:1243.3px;top:403px;width:1px;height:1.6px;background:#777;"></div>
<div class="a" style="left:1404px;top:403px;width:1px;height:1.6px;background:#777;"></div>
<div class="a" style="left:1280.4px;top:356.90px;width:90.0px;height:2.2px;background:linear-gradient(90deg,#a0a0a0 0.0px,#a0a0a0 4.4px,transparent 4.4px,transparent 5.9px,#a0a0a0 5.9px,#a0a0a0 14.6px,transparent 14.6px,transparent 16.1px,#a0a0a0 16.1px,#a0a0a0 28.1px,transparent 28.1px,transparent 29.6px,#a0a0a0 29.6px,#a0a0a0 40.7px,transparent 40.7px,transparent 42.2px,#a0a0a0 42.2px,#a0a0a0 48.8px,transparent 48.8px,transparent 50.3px,#a0a0a0 50.3px,#a0a0a0 58.8px,transparent 58.8px,transparent 60.3px,#a0a0a0 60.3px,#a0a0a0 69.1px,transparent 69.1px,transparent 70.6px,#a0a0a0 70.6px,#a0a0a0 78.0px,transparent 78.0px,transparent 79.5px,#a0a0a0 79.5px,#a0a0a0 85.7px,transparent 85.7px,transparent 87.2px,#a0a0a0 87.2px,#a0a0a0 90.0px,transparent 90.0px,transparent 90.0px)"></div>
<div class="a" style="left:1294.8px;top:362.70px;width:62.0px;height:2.2px;background:linear-gradient(90deg,#a0a0a0 0.0px,#a0a0a0 6.9px,transparent 6.9px,transparent 8.4px,#a0a0a0 8.4px,#a0a0a0 15.5px,transparent 15.5px,transparent 17.0px,#a0a0a0 17.0px,#a0a0a0 23.1px,transparent 23.1px,transparent 24.6px,#a0a0a0 24.6px,#a0a0a0 30.2px,transparent 30.2px,transparent 31.7px,#a0a0a0 31.7px,#a0a0a0 39.1px,transparent 39.1px,transparent 40.6px,#a0a0a0 40.6px,#a0a0a0 51.8px,transparent 51.8px,transparent 53.3px,#a0a0a0 53.3px,#a0a0a0 62.0px,transparent 62.0px,transparent 62.0px)"></div>
<div class="a" style="left:1291.0px;top:371.40px;width:68.5px;height:2.0px;background:linear-gradient(90deg,#b4b4b4 0.0px,#b4b4b4 11.1px,transparent 11.1px,transparent 12.4px,#b4b4b4 12.4px,#b4b4b4 22.1px,transparent 22.1px,transparent 23.4px,#b4b4b4 23.4px,#b4b4b4 33.1px,transparent 33.1px,transparent 34.4px,#b4b4b4 34.4px,#b4b4b4 46.6px,transparent 46.6px,transparent 47.9px,#b4b4b4 47.9px,#b4b4b4 60.2px,transparent 60.2px,transparent 61.5px,#b4b4b4 61.5px,#b4b4b4 68.5px,transparent 68.5px,transparent 68.5px)"></div>
<div class="a" style="left:1306.0px;top:376.60px;width:39.0px;height:1.8px;background:linear-gradient(90deg,#c4c4c4 0.0px,#c4c4c4 7.5px,transparent 7.5px,transparent 8.5px,#c4c4c4 8.5px,#c4c4c4 15.2px,transparent 15.2px,transparent 16.2px,#c4c4c4 16.2px,#c4c4c4 22.7px,transparent 22.7px,transparent 23.7px,#c4c4c4 23.7px,#c4c4c4 34.2px,transparent 34.2px,transparent 35.2px,#c4c4c4 35.2px,#c4c4c4 39.0px,transparent 39.0px,transparent 39.0px)"></div>
<div class="a" style="left:1296.0px;top:379.70px;width:60.0px;height:1.8px;background:linear-gradient(90deg,#c0c0c0 0.0px,#c0c0c0 7.6px,transparent 7.6px,transparent 8.6px,#c0c0c0 8.6px,#c0c0c0 16.5px,transparent 16.5px,transparent 17.5px,#c0c0c0 17.5px,#c0c0c0 25.9px,transparent 25.9px,transparent 26.9px,#c0c0c0 26.9px,#c0c0c0 33.4px,transparent 33.4px,transparent 34.4px,#c0c0c0 34.4px,#c0c0c0 44.6px,transparent 44.6px,transparent 45.6px,#c0c0c0 45.6px,#c0c0c0 53.6px,transparent 53.6px,transparent 54.6px,#c0c0c0 54.6px,#c0c0c0 60.0px,transparent 60.0px,transparent 60.0px)"></div>
<div class="a" style="left:1300.0px;top:383.00px;width:51.0px;height:1.8px;background:linear-gradient(90deg,#c0c0c0 0.0px,#c0c0c0 7.6px,transparent 7.6px,transparent 8.6px,#c0c0c0 8.6px,#c0c0c0 17.9px,transparent 17.9px,transparent 18.9px,#c0c0c0 18.9px,#c0c0c0 29.7px,transparent 29.7px,transparent 30.7px,#c0c0c0 30.7px,#c0c0c0 37.0px,transparent 37.0px,transparent 38.0px,#c0c0c0 38.0px,#c0c0c0 48.9px,transparent 48.9px,transparent 49.9px,#c0c0c0 49.9px,#c0c0c0 51.0px,transparent 51.0px,transparent 51.0px)"></div>
<div class="a" style="left:1274.5px;top:396.5px;width:102px;height:0.7px;background:#8a8a8a;"></div>
<div class="a" style="left:1274.5px;top:401.35px;width:13.0px;height:1.3px;background:linear-gradient(90deg,#5a5a5a 0.0px,#5a5a5a 13.0px,transparent 13.0px,transparent 13.0px)"></div>
<div class="a" style="left:1274.5px;top:405.90px;width:102.0px;height:2.0px;background:linear-gradient(90deg,#acacac 0.0px,#acacac 4.4px,transparent 4.4px,transparent 5.6px,#acacac 5.6px,#acacac 12.5px,transparent 12.5px,transparent 13.6px,#acacac 13.6px,#acacac 20.5px,transparent 20.5px,transparent 21.7px,#acacac 21.7px,#acacac 30.3px,transparent 30.3px,transparent 31.4px,#acacac 31.4px,#acacac 39.1px,transparent 39.1px,transparent 40.3px,#acacac 40.3px,#acacac 49.0px,transparent 49.0px,transparent 50.2px,#acacac 50.2px,#acacac 57.5px,transparent 57.5px,transparent 58.7px,#acacac 58.7px,#acacac 65.1px,transparent 65.1px,transparent 66.2px,#acacac 66.2px,#acacac 75.8px,transparent 75.8px,transparent 77.0px,#acacac 77.0px,#acacac 84.3px,transparent 84.3px,transparent 85.4px,#acacac 85.4px,#acacac 92.2px,transparent 92.2px,transparent 93.4px,#acacac 93.4px,#acacac 100.3px,transparent 100.3px,transparent 101.5px,#acacac 101.5px,#acacac 102.0px,transparent 102.0px,transparent 102.0px)"></div>
<div class="a" style="left:1274.5px;top:409.68px;width:102.0px;height:2.0px;background:linear-gradient(90deg,#acacac 0.0px,#acacac 8.0px,transparent 8.0px,transparent 9.1px,#acacac 9.1px,#acacac 15.3px,transparent 15.3px,transparent 16.5px,#acacac 16.5px,#acacac 22.7px,transparent 22.7px,transparent 23.9px,#acacac 23.9px,#acacac 33.4px,transparent 33.4px,transparent 34.6px,#acacac 34.6px,#acacac 40.8px,transparent 40.8px,transparent 41.9px,#acacac 41.9px,#acacac 48.2px,transparent 48.2px,transparent 49.3px,#acacac 49.3px,#acacac 56.2px,transparent 56.2px,transparent 57.4px,#acacac 57.4px,#acacac 65.9px,transparent 65.9px,transparent 67.1px,#acacac 67.1px,#acacac 75.4px,transparent 75.4px,transparent 76.6px,#acacac 76.6px,#acacac 81.2px,transparent 81.2px,transparent 82.3px,#acacac 82.3px,#acacac 91.9px,transparent 91.9px,transparent 93.1px,#acacac 93.1px,#acacac 99.1px,transparent 99.1px,transparent 100.2px,#acacac 100.2px,#acacac 102.0px,transparent 102.0px,transparent 102.0px)"></div>
<div class="a" style="left:1274.5px;top:413.46px;width:102.0px;height:2.0px;background:linear-gradient(90deg,#acacac 0.0px,#acacac 8.5px,transparent 8.5px,transparent 9.7px,#acacac 9.7px,#acacac 16.9px,transparent 16.9px,transparent 18.0px,#acacac 18.0px,#acacac 26.8px,transparent 26.8px,transparent 28.0px,#acacac 28.0px,#acacac 32.9px,transparent 32.9px,transparent 34.1px,#acacac 34.1px,#acacac 40.9px,transparent 40.9px,transparent 42.1px,#acacac 42.1px,#acacac 49.1px,transparent 49.1px,transparent 50.3px,#acacac 50.3px,#acacac 56.7px,transparent 56.7px,transparent 57.8px,#acacac 57.8px,#acacac 64.0px,transparent 64.0px,transparent 65.1px,#acacac 65.1px,#acacac 71.0px,transparent 71.0px,transparent 72.2px,#acacac 72.2px,#acacac 81.5px,transparent 81.5px,transparent 82.6px,#acacac 82.6px,#acacac 90.7px,transparent 90.7px,transparent 91.8px,#acacac 91.8px,#acacac 96.8px,transparent 96.8px,transparent 97.9px,#acacac 97.9px,#acacac 102.0px,transparent 102.0px,transparent 102.0px)"></div>
<div class="a" style="left:1274.5px;top:417.24px;width:102.0px;height:2.0px;background:linear-gradient(90deg,#acacac 0.0px,#acacac 6.5px,transparent 6.5px,transparent 7.6px,#acacac 7.6px,#acacac 16.8px,transparent 16.8px,transparent 18.0px,#acacac 18.0px,#acacac 27.2px,transparent 27.2px,transparent 28.4px,#acacac 28.4px,#acacac 34.0px,transparent 34.0px,transparent 35.2px,#acacac 35.2px,#acacac 42.4px,transparent 42.4px,transparent 43.5px,#acacac 43.5px,#acacac 50.4px,transparent 50.4px,transparent 51.5px,#acacac 51.5px,#acacac 61.1px,transparent 61.1px,transparent 62.3px,#acacac 62.3px,#acacac 71.6px,transparent 71.6px,transparent 72.8px,#acacac 72.8px,#acacac 78.6px,transparent 78.6px,transparent 79.8px,#acacac 79.8px,#acacac 87.7px,transparent 87.7px,transparent 88.8px,#acacac 88.8px,#acacac 98.4px,transparent 98.4px,transparent 99.6px,#acacac 99.6px,#acacac 102.0px,transparent 102.0px,transparent 102.0px)"></div>
<div class="a" style="left:1274.5px;top:421.02px;width:102.0px;height:2.0px;background:linear-gradient(90deg,#acacac 0.0px,#acacac 3.9px,transparent 3.9px,transparent 5.0px,#acacac 5.0px,#acacac 13.1px,transparent 13.1px,transparent 14.3px,#acacac 14.3px,#acacac 21.1px,transparent 21.1px,transparent 22.3px,#acacac 22.3px,#acacac 30.2px,transparent 30.2px,transparent 31.4px,#acacac 31.4px,#acacac 39.7px,transparent 39.7px,transparent 40.8px,#acacac 40.8px,#acacac 48.7px,transparent 48.7px,transparent 49.8px,#acacac 49.8px,#acacac 54.7px,transparent 54.7px,transparent 55.9px,#acacac 55.9px,#acacac 65.8px,transparent 65.8px,transparent 66.9px,#acacac 66.9px,#acacac 73.1px,transparent 73.1px,transparent 74.3px,#acacac 74.3px,#acacac 78.2px,transparent 78.2px,transparent 79.3px,#acacac 79.3px,#acacac 86.4px,transparent 86.4px,transparent 87.6px,#acacac 87.6px,#acacac 90.7px,transparent 90.7px,transparent 91.9px,#acacac 91.9px,#acacac 96.5px,transparent 96.5px,transparent 97.7px,#acacac 97.7px,#acacac 102.0px,transparent 102.0px,transparent 102.0px)"></div>
<div class="a" style="left:1274.5px;top:424.80px;width:102.0px;height:2.0px;background:linear-gradient(90deg,#acacac 0.0px,#acacac 7.5px,transparent 7.5px,transparent 8.7px,#acacac 8.7px,#acacac 16.5px,transparent 16.5px,transparent 17.6px,#acacac 17.6px,#acacac 22.0px,transparent 22.0px,transparent 23.2px,#acacac 23.2px,#acacac 27.6px,transparent 27.6px,transparent 28.8px,#acacac 28.8px,#acacac 36.8px,transparent 36.8px,transparent 37.9px,#acacac 37.9px,#acacac 41.0px,transparent 41.0px,transparent 42.2px,#acacac 42.2px,#acacac 45.9px,transparent 45.9px,transparent 47.0px,#acacac 47.0px,#acacac 56.6px,transparent 56.6px,transparent 57.8px,#acacac 57.8px,#acacac 65.1px,transparent 65.1px,transparent 66.3px,#acacac 66.3px,#acacac 74.6px,transparent 74.6px,transparent 75.8px,#acacac 75.8px,#acacac 83.2px,transparent 83.2px,transparent 84.3px,#acacac 84.3px,#acacac 90.0px,transparent 90.0px,transparent 91.1px,#acacac 91.1px,#acacac 98.6px,transparent 98.6px,transparent 99.7px,#acacac 99.7px,#acacac 102.0px,transparent 102.0px,transparent 102.0px)"></div>
<div class="a" style="left:1274.5px;top:428.58px;width:102.0px;height:2.0px;background:linear-gradient(90deg,#acacac 0.0px,#acacac 6.5px,transparent 6.5px,transparent 7.6px,#acacac 7.6px,#acacac 16.2px,transparent 16.2px,transparent 17.4px,#acacac 17.4px,#acacac 24.0px,transparent 24.0px,transparent 25.2px,#acacac 25.2px,#acacac 35.0px,transparent 35.0px,transparent 36.2px,#acacac 36.2px,#acacac 41.0px,transparent 41.0px,transparent 42.2px,#acacac 42.2px,#acacac 48.2px,transparent 48.2px,transparent 49.3px,#acacac 49.3px,#acacac 54.5px,transparent 54.5px,transparent 55.6px,#acacac 55.6px,#acacac 59.3px,transparent 59.3px,transparent 60.4px,#acacac 60.4px,#acacac 63.6px,transparent 63.6px,transparent 64.7px,#acacac 64.7px,#acacac 74.5px,transparent 74.5px,transparent 75.6px,#acacac 75.6px,#acacac 80.1px,transparent 80.1px,transparent 81.2px,#acacac 81.2px,#acacac 84.5px,transparent 84.5px,transparent 85.6px,#acacac 85.6px,#acacac 95.2px,transparent 95.2px,transparent 96.4px,#acacac 96.4px,#acacac 102.0px,transparent 102.0px,transparent 102.0px)"></div>
<div class="a" style="left:1274.5px;top:432.36px;width:102.0px;height:2.0px;background:linear-gradient(90deg,#acacac 0.0px,#acacac 3.9px,transparent 3.9px,transparent 5.0px,#acacac 5.0px,#acacac 8.6px,transparent 8.6px,transparent 9.8px,#acacac 9.8px,#acacac 17.4px,transparent 17.4px,transparent 18.6px,#acacac 18.6px,#acacac 25.3px,transparent 25.3px,transparent 26.4px,#acacac 26.4px,#acacac 33.6px,transparent 33.6px,transparent 34.8px,#acacac 34.8px,#acacac 42.1px,transparent 42.1px,transparent 43.3px,#acacac 43.3px,#acacac 48.6px,transparent 48.6px,transparent 49.7px,#acacac 49.7px,#acacac 53.2px,transparent 53.2px,transparent 54.3px,#acacac 54.3px,#acacac 57.8px,transparent 57.8px,transparent 58.9px,#acacac 58.9px,#acacac 64.3px,transparent 64.3px,transparent 65.4px,#acacac 65.4px,#acacac 68.5px,transparent 68.5px,transparent 69.7px,#acacac 69.7px,#acacac 76.8px,transparent 76.8px,transparent 77.9px,#acacac 77.9px,#acacac 81.0px,transparent 81.0px,transparent 82.2px,#acacac 82.2px,#acacac 91.2px,transparent 91.2px,transparent 92.3px,#acacac 92.3px,#acacac 95.4px,transparent 95.4px,transparent 96.5px,#acacac 96.5px,#acacac 102.0px,transparent 102.0px,transparent 102.0px)"></div>
<div class="a" style="left:1274.5px;top:436.14px;width:102.0px;height:2.0px;background:linear-gradient(90deg,#acacac 0.0px,#acacac 4.4px,transparent 4.4px,transparent 5.6px,#acacac 5.6px,#acacac 9.8px,transparent 9.8px,transparent 10.9px,#acacac 10.9px,#acacac 20.0px,transparent 20.0px,transparent 21.2px,#acacac 21.2px,#acacac 27.4px,transparent 27.4px,transparent 28.5px,#acacac 28.5px,#acacac 37.1px,transparent 37.1px,transparent 38.2px,#acacac 38.2px,#acacac 46.0px,transparent 46.0px,transparent 47.1px,#acacac 47.1px,#acacac 51.3px,transparent 51.3px,transparent 52.4px,#acacac 52.4px,#acacac 57.5px,transparent 57.5px,transparent 58.7px,#acacac 58.7px,#acacac 65.8px,transparent 65.8px,transparent 66.9px,#acacac 66.9px,#acacac 73.3px,transparent 73.3px,transparent 74.5px,#acacac 74.5px,#acacac 78.7px,transparent 78.7px,transparent 79.8px,#acacac 79.8px,#acacac 87.6px,transparent 87.6px,transparent 88.7px,#acacac 88.7px,#acacac 92.0px,transparent 92.0px,transparent 93.2px,#acacac 93.2px,#acacac 99.4px,transparent 99.4px,transparent 100.6px,#acacac 100.6px,#acacac 102.0px,transparent 102.0px,transparent 102.0px)"></div>
<div class="a" style="left:1274.5px;top:439.92px;width:102.0px;height:2.0px;background:linear-gradient(90deg,#acacac 0.0px,#acacac 6.3px,transparent 6.3px,transparent 7.5px,#acacac 7.5px,#acacac 15.9px,transparent 15.9px,transparent 17.1px,#acacac 17.1px,#acacac 21.5px,transparent 21.5px,transparent 22.6px,#acacac 22.6px,#acacac 32.1px,transparent 32.1px,transparent 33.2px,#acacac 33.2px,#acacac 40.6px,transparent 40.6px,transparent 41.8px,#acacac 41.8px,#acacac 51.2px,transparent 51.2px,transparent 52.3px,#acacac 52.3px,#acacac 58.7px,transparent 58.7px,transparent 59.9px,#acacac 59.9px,#acacac 66.8px,transparent 66.8px,transparent 68.0px,#acacac 68.0px,#acacac 75.7px,transparent 75.7px,transparent 76.9px,#acacac 76.9px,#acacac 83.5px,transparent 83.5px,transparent 84.7px,#acacac 84.7px,#acacac 93.0px,transparent 93.0px,transparent 94.2px,#acacac 94.2px,#acacac 98.8px,transparent 98.8px,transparent 99.9px,#acacac 99.9px,#acacac 102.0px,transparent 102.0px,transparent 102.0px)"></div>
<div class="a" style="left:1274.5px;top:443.70px;width:102.0px;height:2.0px;background:linear-gradient(90deg,#acacac 0.0px,#acacac 9.6px,transparent 9.6px,transparent 10.7px,#acacac 10.7px,#acacac 19.2px,transparent 19.2px,transparent 20.3px,#acacac 20.3px,#acacac 28.2px,transparent 28.2px,transparent 29.3px,#acacac 29.3px,#acacac 37.9px,transparent 37.9px,transparent 39.0px,#acacac 39.0px,#acacac 43.1px,transparent 43.1px,transparent 44.3px,#acacac 44.3px,#acacac 48.6px,transparent 48.6px,transparent 49.7px,#acacac 49.7px,#acacac 55.6px,transparent 55.6px,transparent 56.8px,#acacac 56.8px,#acacac 60.4px,transparent 60.4px,transparent 61.5px,#acacac 61.5px,#acacac 69.5px,transparent 69.5px,transparent 70.7px,#acacac 70.7px,#acacac 79.5px,transparent 79.5px,transparent 80.7px,#acacac 80.7px,#acacac 86.2px,transparent 86.2px,transparent 87.3px,#acacac 87.3px,#acacac 94.1px,transparent 94.1px,transparent 95.3px,#acacac 95.3px,#acacac 102.0px,transparent 102.0px,transparent 102.0px)"></div>
<div class="a" style="left:1274.5px;top:447.48px;width:102.0px;height:2.0px;background:linear-gradient(90deg,#acacac 0.0px,#acacac 9.2px,transparent 9.2px,transparent 10.4px,#acacac 10.4px,#acacac 16.4px,transparent 16.4px,transparent 17.5px,#acacac 17.5px,#acacac 22.3px,transparent 22.3px,transparent 23.4px,#acacac 23.4px,#acacac 33.0px,transparent 33.0px,transparent 34.2px,#acacac 34.2px,#acacac 38.9px,transparent 38.9px,transparent 40.0px,#acacac 40.0px,#acacac 45.2px,transparent 45.2px,transparent 46.4px,#acacac 46.4px,#acacac 55.4px,transparent 55.4px,transparent 56.5px,#acacac 56.5px,#acacac 61.6px,transparent 61.6px,transparent 62.7px,#acacac 62.7px,#acacac 67.9px,transparent 67.9px,transparent 69.1px,#acacac 69.1px,#acacac 75.1px,transparent 75.1px,transparent 76.3px,#acacac 76.3px,#acacac 79.6px,transparent 79.6px,transparent 80.7px,#acacac 80.7px,#acacac 87.0px,transparent 87.0px,transparent 88.2px,#acacac 88.2px,#acacac 92.4px,transparent 92.4px,transparent 93.6px,#acacac 93.6px,#acacac 100.3px,transparent 100.3px,transparent 101.5px,#acacac 101.5px,#acacac 102.0px,transparent 102.0px,transparent 102.0px)"></div>
<div class="a" style="left:1274.5px;top:451.26px;width:102.0px;height:2.0px;background:linear-gradient(90deg,#acacac 0.0px,#acacac 6.0px,transparent 6.0px,transparent 7.1px,#acacac 7.1px,#acacac 10.1px,transparent 10.1px,transparent 11.3px,#acacac 11.3px,#acacac 18.0px,transparent 18.0px,transparent 19.2px,#acacac 19.2px,#acacac 29.0px,transparent 29.0px,transparent 30.2px,#acacac 30.2px,#acacac 37.0px,transparent 37.0px,transparent 38.2px,#acacac 38.2px,#acacac 43.9px,transparent 43.9px,transparent 45.0px,#acacac 45.0px,#acacac 48.9px,transparent 48.9px,transparent 50.1px,#acacac 50.1px,#acacac 56.9px,transparent 56.9px,transparent 58.0px,#acacac 58.0px,#acacac 66.0px,transparent 66.0px,transparent 67.2px,#acacac 67.2px,#acacac 72.4px,transparent 72.4px,transparent 73.5px,#acacac 73.5px,#acacac 83.5px,transparent 83.5px,transparent 84.6px,#acacac 84.6px,#acacac 92.9px,transparent 92.9px,transparent 94.1px,#acacac 94.1px,#acacac 97.9px,transparent 97.9px,transparent 99.1px,#acacac 99.1px,#acacac 102.0px,transparent 102.0px,transparent 102.0px)"></div>
<div class="a" style="left:1274.5px;top:455.04px;width:102.0px;height:2.0px;background:linear-gradient(90deg,#acacac 0.0px,#acacac 5.2px,transparent 5.2px,transparent 6.3px,#acacac 6.3px,#acacac 14.0px,transparent 14.0px,transparent 15.2px,#acacac 15.2px,#acacac 18.4px,transparent 18.4px,transparent 19.6px,#acacac 19.6px,#acacac 25.3px,transparent 25.3px,transparent 26.5px,#acacac 26.5px,#acacac 33.0px,transparent 33.0px,transparent 34.2px,#acacac 34.2px,#acacac 37.7px,transparent 37.7px,transparent 38.9px,#acacac 38.9px,#acacac 46.2px,transparent 46.2px,transparent 47.3px,#acacac 47.3px,#acacac 56.9px,transparent 56.9px,transparent 58.1px,#acacac 58.1px,#acacac 63.0px,transparent 63.0px,transparent 64.2px,#acacac 64.2px,#acacac 69.0px,transparent 69.0px,transparent 70.2px,#acacac 70.2px,#acacac 75.6px,transparent 75.6px,transparent 76.8px,#acacac 76.8px,#acacac 82.4px,transparent 82.4px,transparent 83.5px,#acacac 83.5px,#acacac 92.0px,transparent 92.0px,transparent 93.2px,#acacac 93.2px,#acacac 99.2px,transparent 99.2px,transparent 100.4px,#acacac 100.4px,#acacac 102.0px,transparent 102.0px,transparent 102.0px)"></div>
<div class="a" style="left:1274.5px;top:458.82px;width:102.0px;height:2.0px;background:linear-gradient(90deg,#acacac 0.0px,#acacac 3.2px,transparent 3.2px,transparent 4.4px,#acacac 4.4px,#acacac 8.4px,transparent 8.4px,transparent 9.5px,#acacac 9.5px,#acacac 19.2px,transparent 19.2px,transparent 20.4px,#acacac 20.4px,#acacac 27.8px,transparent 27.8px,transparent 29.0px,#acacac 29.0px,#acacac 35.2px,transparent 35.2px,transparent 36.3px,#acacac 36.3px,#acacac 43.2px,transparent 43.2px,transparent 44.3px,#acacac 44.3px,#acacac 52.3px,transparent 52.3px,transparent 53.4px,#acacac 53.4px,#acacac 59.5px,transparent 59.5px,transparent 60.7px,#acacac 60.7px,#acacac 64.5px,transparent 64.5px,transparent 65.6px,#acacac 65.6px,#acacac 72.2px,transparent 72.2px,transparent 73.4px,#acacac 73.4px,#acacac 82.1px,transparent 82.1px,transparent 83.3px,#acacac 83.3px,#acacac 87.0px,transparent 87.0px,transparent 88.1px,#acacac 88.1px,#acacac 91.3px,transparent 91.3px,transparent 92.5px,#acacac 92.5px,#acacac 99.4px,transparent 99.4px,transparent 100.5px,#acacac 100.5px,#acacac 102.0px,transparent 102.0px,transparent 102.0px)"></div>
<div class="a" style="left:1274.5px;top:462.60px;width:102.0px;height:2.0px;background:linear-gradient(90deg,#acacac 0.0px,#acacac 6.7px,transparent 6.7px,transparent 7.9px,#acacac 7.9px,#acacac 13.7px,transparent 13.7px,transparent 14.9px,#acacac 14.9px,#acacac 22.3px,transparent 22.3px,transparent 23.5px,#acacac 23.5px,#acacac 28.5px,transparent 28.5px,transparent 29.6px,#acacac 29.6px,#acacac 36.5px,transparent 36.5px,transparent 37.6px,#acacac 37.6px,#acacac 47.0px,transparent 47.0px,transparent 48.1px,#acacac 48.1px,#acacac 54.1px,transparent 54.1px,transparent 55.3px,#acacac 55.3px,#acacac 65.2px,transparent 65.2px,transparent 66.3px,#acacac 66.3px,#acacac 70.3px,transparent 70.3px,transparent 71.4px,#acacac 71.4px,#acacac 75.4px,transparent 75.4px,transparent 76.5px,#acacac 76.5px,#acacac 85.9px,transparent 85.9px,transparent 87.1px,#acacac 87.1px,#acacac 92.2px,transparent 92.2px,transparent 93.4px,#acacac 93.4px,#acacac 99.7px,transparent 99.7px,transparent 100.9px,#acacac 100.9px,#acacac 102.0px,transparent 102.0px,transparent 102.0px)"></div>
<div class="a" style="left:1274.5px;top:466.38px;width:102.0px;height:2.0px;background:linear-gradient(90deg,#acacac 0.0px,#acacac 5.8px,transparent 5.8px,transparent 7.0px,#acacac 7.0px,#acacac 14.6px,transparent 14.6px,transparent 15.8px,#acacac 15.8px,#acacac 23.4px,transparent 23.4px,transparent 24.6px,#acacac 24.6px,#acacac 32.4px,transparent 32.4px,transparent 33.5px,#acacac 33.5px,#acacac 38.2px,transparent 38.2px,transparent 39.3px,#acacac 39.3px,#acacac 44.3px,transparent 44.3px,transparent 45.4px,#acacac 45.4px,#acacac 54.5px,transparent 54.5px,transparent 55.6px,#acacac 55.6px,#acacac 65.3px,transparent 65.3px,transparent 66.5px,#acacac 66.5px,#acacac 72.6px,transparent 72.6px,transparent 73.8px,#acacac 73.8px,#acacac 77.3px,transparent 77.3px,transparent 78.5px,#acacac 78.5px,#acacac 88.3px,transparent 88.3px,transparent 89.5px,#acacac 89.5px,#acacac 95.2px,transparent 95.2px,transparent 96.3px,#acacac 96.3px,#acacac 102.0px,transparent 102.0px,transparent 102.0px)"></div>
<div class="a" style="left:1274.5px;top:470.16px;width:102.0px;height:2.0px;background:linear-gradient(90deg,#acacac 0.0px,#acacac 9.4px,transparent 9.4px,transparent 10.6px,#acacac 10.6px,#acacac 15.7px,transparent 15.7px,transparent 16.9px,#acacac 16.9px,#acacac 22.1px,transparent 22.1px,transparent 23.2px,#acacac 23.2px,#acacac 30.5px,transparent 30.5px,transparent 31.6px,#acacac 31.6px,#acacac 39.0px,transparent 39.0px,transparent 40.2px,#acacac 40.2px,#acacac 46.8px,transparent 46.8px,transparent 47.9px,#acacac 47.9px,#acacac 57.0px,transparent 57.0px,transparent 58.2px,#acacac 58.2px,#acacac 65.5px,transparent 65.5px,transparent 66.7px,#acacac 66.7px,#acacac 71.4px,transparent 71.4px,transparent 72.6px,#acacac 72.6px,#acacac 81.7px,transparent 81.7px,transparent 82.8px,#acacac 82.8px,#acacac 92.5px,transparent 92.5px,transparent 93.7px,#acacac 93.7px,#acacac 102.0px,transparent 102.0px,transparent 102.0px)"></div>
<div class="a" style="left:1274.5px;top:473.94px;width:62.0px;height:2.0px;background:linear-gradient(90deg,#acacac 0.0px,#acacac 7.3px,transparent 7.3px,transparent 8.4px,#acacac 8.4px,#acacac 15.9px,transparent 15.9px,transparent 17.0px,#acacac 17.0px,#acacac 22.7px,transparent 22.7px,transparent 23.8px,#acacac 23.8px,#acacac 30.7px,transparent 30.7px,transparent 31.9px,#acacac 31.9px,#acacac 38.6px,transparent 38.6px,transparent 39.8px,#acacac 39.8px,#acacac 48.1px,transparent 48.1px,transparent 49.3px,#acacac 49.3px,#acacac 56.1px,transparent 56.1px,transparent 57.2px,#acacac 57.2px,#acacac 62.0px,transparent 62.0px,transparent 62.0px)"></div>
<div class="a" style="left:1274.5px;top:479.00px;width:92.0px;height:2.0px;background:linear-gradient(90deg,#a2a2a2 0.0px,#a2a2a2 7.1px,transparent 7.1px,transparent 8.2px,#a2a2a2 8.2px,#a2a2a2 14.2px,transparent 14.2px,transparent 15.3px,#a2a2a2 15.3px,#a2a2a2 22.9px,transparent 22.9px,transparent 24.0px,#a2a2a2 24.0px,#a2a2a2 29.2px,transparent 29.2px,transparent 30.3px,#a2a2a2 30.3px,#a2a2a2 39.3px,transparent 39.3px,transparent 40.4px,#a2a2a2 40.4px,#a2a2a2 49.6px,transparent 49.6px,transparent 50.7px,#a2a2a2 50.7px,#a2a2a2 56.8px,transparent 56.8px,transparent 57.9px,#a2a2a2 57.9px,#a2a2a2 65.2px,transparent 65.2px,transparent 66.3px,#a2a2a2 66.3px,#a2a2a2 75.6px,transparent 75.6px,transparent 76.7px,#a2a2a2 76.7px,#a2a2a2 82.7px,transparent 82.7px,transparent 83.8px,#a2a2a2 83.8px,#a2a2a2 92.0px,transparent 92.0px,transparent 92.0px)"></div>
<div class="a" style="left:1274.5px;top:482.60px;width:87.0px;height:2.0px;background:linear-gradient(90deg,#a2a2a2 0.0px,#a2a2a2 7.9px,transparent 7.9px,transparent 9.0px,#a2a2a2 9.0px,#a2a2a2 16.6px,transparent 16.6px,transparent 17.7px,#a2a2a2 17.7px,#a2a2a2 25.5px,transparent 25.5px,transparent 26.6px,#a2a2a2 26.6px,#a2a2a2 36.0px,transparent 36.0px,transparent 37.1px,#a2a2a2 37.1px,#a2a2a2 43.1px,transparent 43.1px,transparent 44.2px,#a2a2a2 44.2px,#a2a2a2 50.3px,transparent 50.3px,transparent 51.4px,#a2a2a2 51.4px,#a2a2a2 57.2px,transparent 57.2px,transparent 58.3px,#a2a2a2 58.3px,#a2a2a2 65.4px,transparent 65.4px,transparent 66.5px,#a2a2a2 66.5px,#a2a2a2 72.2px,transparent 72.2px,transparent 73.3px,#a2a2a2 73.3px,#a2a2a2 78.7px,transparent 78.7px,transparent 79.8px,#a2a2a2 79.8px,#a2a2a2 87.0px,transparent 87.0px,transparent 87.0px)"></div>
<div class="a" style="left:1274.5px;top:487.8px;width:102px;height:0.7px;background:#8a8a8a;"></div>
</div>
<div class="t " style="left:939px;top:504.3px;transform-origin:0 50%;transform:translateY(-50%) scaleX(0.9630);font-size:16px;letter-spacing:0;font-weight:bold;color:#111;">What You See Is What You Mean</div>
<div class="t " style="left:1239.4px;top:504.7px;transform-origin:0 50%;transform:translateY(-50%) scaleX(0.9275);font-size:14.3px;letter-spacing:0;color:#222;">What You See Is What You Get</div>
<div class="a" style="left:908px;top:523px;width:286.5px;height:46.30000000000007px;background:#000;"></div>
<div class="a" style="left:1194.5px;top:523px;width:286px;height:46.30000000000007px;background:#f78a1c;"></div>
<div class="a" style="left:908px;top:535.2px;width:573px;height:3.4px;background:#9aa2aa;"></div>
<div class="t " style="right:416.5px;top:529.4px;transform-origin:100% 50%;transform:translateY(-50%) scaleX(0.9497);font-size:8px;letter-spacing:0;color:#fff;">P. Nazarko</div>
<div class="t " style="left:1205px;top:528.6px;transform-origin:0 50%;transform:translateY(-50%) scaleX(0.9663);font-size:8px;letter-spacing:0;color:#fde4cc;">LaTeX, Text processing tool</div>
<div class="t " style="right:416.5px;top:544.9px;transform-origin:100% 50%;transform:translateY(-50%) scaleX(0.9807);font-size:8px;letter-spacing:0;color:#fff;-webkit-text-stroke:0.12px #fff">Introduction</div>
<div class="t " style="right:416.5px;top:553.8000000000001px;transform-origin:100% 50%;transform:translateY(-50%) scaleX(0.9602);font-size:8px;letter-spacing:0;color:#7a7a7a;">First document</div>
<div class="t " style="right:416.5px;top:562.4px;transform-origin:100% 50%;transform:translateY(-50%) scaleX(0.8916);font-size:8px;letter-spacing:0;color:#7a7a7a;">JabRef</div>
<div class="t " style="left:1205px;top:544.8000000000001px;transform-origin:0 50%;transform:translateY(-50%) scaleX(0.9104);font-size:8px;letter-spacing:0;color:#fbb66e;">Text processors</div>
<div class="t " style="left:1205px;top:553.6px;transform-origin:0 50%;transform:translateY(-50%) scaleX(0.9409);font-size:8px;letter-spacing:0;color:#fff;-webkit-text-stroke:0.12px #fff">Type of documents</div>
<div class="t " style="left:1205px;top:562.4000000000001px;transform-origin:0 50%;transform:translateY(-50%) scaleX(0.9841);font-size:8px;letter-spacing:0;color:#fbb66e;">How to start</div>
<div class="a" style="left:908px;top:569.3000000000001px;width:572.5px;height:25.600000000000023px;background:linear-gradient(90deg,#f78a1c 0%,#f78a1c 14%,#d4741a 34%,#94500e 56%,#46240a 78%,#1a0c02 92%,#000 100%)"></div>
<div class="a" style="left:908px;top:569.3000000000001px;width:572.5px;height:25.600000000000023px;background:linear-gradient(180deg,rgba(0,0,0,0.62) 0%,rgba(0,0,0,0.3) 45%,rgba(0,0,0,0) 100%);-webkit-mask-image:linear-gradient(90deg,transparent 22%,#000 60%);mask-image:linear-gradient(90deg,transparent 22%,#000 60%)"></div>
<div class="a" style="left:908px;top:594.9000000000001px;width:572.5px;height:2.5px;background:linear-gradient(180deg,rgba(0,0,0,0.28),rgba(0,0,0,0))"></div>
<div class="t " style="left:925.5px;top:583.2px;transform-origin:0 50%;transform:translateY(-50%) scaleX(0.9502);font-size:17.5px;letter-spacing:0;color:#fff;">Type of documents</div>
<div class="t " style="left:944.2px;top:665.4px;transform-origin:0 50%;transform:translateY(-50%) scaleX(0.9228);font-size:15px;letter-spacing:0;color:#222;">Type of documents:</div>
<div class="a" style="left:958.3px;top:686.1px;width:6px;height:6px;border-radius:50%;background:radial-gradient(circle at 40% 32%,#f0a860 0%,#d07a28 35%,#a85810 70%,#7a3c08 100%)"></div>
<div class="t " style="left:971.2px;top:686.9px;transform-origin:0 50%;transform:translateY(-50%) scaleX(0.9277);font-size:15px;letter-spacing:0;color:#222;">scientific books, articles and reports,</div>
<div class="a" style="left:958.3px;top:708.2px;width:6px;height:6px;border-radius:50%;background:radial-gradient(circle at 40% 32%,#f0a860 0%,#d07a28 35%,#a85810 70%,#7a3c08 100%)"></div>
<div class="t " style="left:971.2px;top:709.8px;transform-origin:0 50%;transform:translateY(-50%) scaleX(0.8915);font-size:15px;letter-spacing:0;color:#222;">presentations,</div>
</div></div>
<div class="a" style="left:908px;top:711px;width:585px;height:19.5px;background:#f0f0f0;"></div>
<div class="a" style="left:910.5px;top:713.3px;width:14.5px;height:14.5px;background:#e4e4e4;border:1px solid #b4b4b4"></div>
<svg style="left:913.5px;top:715.5px" width="9" height="10" viewBox="0 0 9 10"><path d="M1.8 5V3.2A2.7 2.7 0 0 1 7.2 3.2V5" stroke="#6a6a6a" stroke-width="1.3" fill="none"/><path d="M0.3 9.8L1.6 4.6H7.4L8.7 9.8Z" fill="#c8ccb8" stroke="#8a8e78" stroke-width="0.6"/><path d="M3 9.8L4.5 7L6 9.8Z" fill="#7a7e68"/></svg>
<div class="a" style="left:931.5px;top:713.3px;width:14.5px;height:14.5px;background:#e4e4e4;border:1px solid #b4b4b4"></div>
<svg style="left:934.5px;top:715.5px" width="9" height="10" viewBox="0 0 9 10"><path d="M1.8 5V3.2A2.7 2.7 0 0 1 7.2 3.2V5" stroke="#6a6a6a" stroke-width="1.3" fill="none"/><path d="M0.3 9.8L1.6 4.6H7.4L8.7 9.8Z" fill="#c8ccb8" stroke="#8a8e78" stroke-width="0.6"/><path d="M3 9.8L4.5 7L6 9.8Z" fill="#7a7e68"/></svg>
<div class="t ui" style="left:1275px;top:721.2px;transform-origin:0 50%;transform:translateY(-50%) scaleX(0.8818);font-size:9px;letter-spacing:0;">Strony 2 do 4 z 7</div>
<div class="t ui" style="left:1345.5px;top:721px;transform-origin:0 50%;transform:translateY(-50%) scaleX(0.8906);font-size:9px;letter-spacing:0;">105%</div>
<svg style="left:1367px;top:722.5px" width="4" height="2.5" viewBox="0 0 4 2.5"><path d="M0 0H4L2 2.5Z" fill="#222"/></svg>
<div class="a" style="left:1376.5px;top:713px;width:0.8px;height:16px;background:#d0d0d0;"></div>
<div class="a" style="left:1378.5px;top:713px;width:15.5px;height:16px;border:1px solid #adadad;background:#e6e6e6"></div>
<svg style="left:1381px;top:715.5px" width="11" height="11" viewBox="0 0 11 11"><circle cx="5.5" cy="5.5" r="4.6" fill="none" stroke="#222" stroke-width="1"/><path d="M3 5.5H8" stroke="#222" stroke-width="1.1"/></svg>
<div class="a" style="left:1398px;top:720.5px;width:74px;height:1.2px;background:#e2e2e2;"></div>
<div class="a" style="left:1434.5px;top:713.3px;width:6.5px;height:15px;background:#1e7ee4;"></div>
<svg style="left:1477.5px;top:715.5px" width="11" height="11" viewBox="0 0 11 11"><circle cx="5.5" cy="5.5" r="4.6" fill="none" stroke="#222" stroke-width="1"/><path d="M3 5.5H8M5.5 3V8" stroke="#222" stroke-width="1.1"/></svg>
<div class="t ui" style="left:1246px;top:739.5px;transform-origin:0 50%;transform:translateY(-50%) scaleX(0.8693);font-size:10px;letter-spacing:0;color:#222;">LT</div>
<svg style="left:1245.5px;top:745.5px" width="10" height="2" viewBox="0 0 10 2"><path d="M0 1L1.2 0L2.5 2L3.7 0L5 2L6.2 0L7.5 2L8.7 0L10 1.5" stroke="#777" stroke-width="0.6" fill="none"/></svg>
<div class="a" style="left:1241.3px;top:734px;width:0.8px;height:14px;background:#d8d8d8;"></div>
<div class="a" style="left:1258px;top:734px;width:0.8px;height:14px;background:#d8d8d8;"></div>
<div class="a" style="left:1301.5px;top:734px;width:0.8px;height:14px;background:#d8d8d8;"></div>
<div class="a" style="left:1341px;top:734px;width:0.8px;height:14px;background:#d8d8d8;"></div>
<div class="a" style="left:1377px;top:734px;width:0.8px;height:14px;background:#d8d8d8;"></div>
<div class="a" style="left:1420px;top:734px;width:0.8px;height:14px;background:#d8d8d8;"></div>
<div class="t ui" style="left:1268.6px;top:741.7px;transform-origin:0 50%;transform:translateY(-50%) scaleX(0.8208);font-size:9px;letter-spacing:0;">en_GB</div>
<svg style="left:1294.3px;top:743.2px" width="4" height="2.5" viewBox="0 0 4 2.5"><path d="M0 0H4L2 2.5Z" fill="#222"/></svg>
<div class="t ui" style="left:1308.7px;top:741.7px;transform-origin:0 50%;transform:translateY(-50%) scaleX(0.8628);font-size:9px;letter-spacing:0;">UTF-8</div>
<svg style="left:1333.5px;top:743.2px" width="4" height="2.5" viewBox="0 0 4 2.5"><path d="M0 0H4L2 2.5Z" fill="#222"/></svg>
<div class="t ui" style="left:1345.5px;top:741.7px;transform-origin:0 50%;transform:translateY(-50%) scaleX(0.8849);font-size:9px;letter-spacing:0;">Gotowy</div>
<div class="t ui" style="left:1381.4px;top:741.7px;transform-origin:0 50%;transform:translateY(-50%) scaleX(0.8646);font-size:9px;letter-spacing:0;">Automatic</div>
<svg style="left:1429.1px;top:736px" width="9.5" height="11" viewBox="0 0 9.5 11"><path d="M0.5 0.5H9V10.5L4.8 7.8L0.5 10.5Z" fill="#a8149c"/><rect x="0" y="0" width="9.5" height="1.2" fill="#6a0a68"/></svg>
<div class="t" style="left:1431.3999999999999px;top:737.6px;font-size:7px;font-weight:bold;color:#fbe8fb">1</div>
<svg style="left:1453.8px;top:736px" width="9.5" height="11" viewBox="0 0 9.5 11"><path d="M0.5 0.5H9V10.5L4.8 7.8L0.5 10.5Z" fill="#a8149c"/><rect x="0" y="0" width="9.5" height="1.2" fill="#6a0a68"/></svg>
<div class="t" style="left:1456.1px;top:737.6px;font-size:7px;font-weight:bold;color:#fbe8fb">2</div>
<svg style="left:1477.8px;top:736px" width="9.5" height="11" viewBox="0 0 9.5 11"><path d="M0.5 0.5H9V10.5L4.8 7.8L0.5 10.5Z" fill="#a8149c"/><rect x="0" y="0" width="9.5" height="1.2" fill="#6a0a68"/></svg>
<div class="t" style="left:1480.1px;top:737.6px;font-size:7px;font-weight:bold;color:#fbe8fb">3</div>
<div class="a" style="left:907px;top:54px;width:1px;height:677px;background:#6e6e6e;"></div>
<div class="a" style="left:106px;top:751px;width:1387px;height:28.5px;background:linear-gradient(90deg,#1d1d20 0%,#1e1e21 47%,#2a2420 49.5%,#3d2f24 52%,#46372b 60%,#43342a 80%,#3e2e24 100%)"></div>
<div class="a" style="left:1489.5px;top:751px;width:1px;height:28.5px;background:#6a5a50;"></div>
<svg style="left:117.45px;top:759.75px" width="12.5" height="12.5" viewBox="0 0 12.5 12.5"><path d="M0 1.7500000000000002L5.65 0.5V5.65H0ZM6.85 0.375L12.5 0V5.65H6.85ZM0 6.85H5.65V12.0L0 10.75ZM6.85 6.85H12.5V12.5L6.85 12.125Z" fill="#fff"/></svg>
<svg style="left:151.7px;top:760.2px" width="12" height="11" viewBox="0 0 12 11"><rect x="2.5" y="2.5" width="7" height="6" fill="none" stroke="#e8e8e8" stroke-width="1.1"/><path d="M0.5 1V3M0.5 8V10M11.5 1V3M11.5 8V10M11.5 4.5V6.5" stroke="#e8e8e8" stroke-width="1.1"/><path d="M2.5 0.6H9.5M2.5 10.4H9.5" stroke="#e8e8e8" stroke-width="1"/></svg>
<div class="a" style="left:319.25px;top:751px;width:35px;height:28.5px;background:#3c3c3f;"></div>
<div class="a" style="left:180.5px;top:778px;width:29.0px;height:1.5px;background:#76b9ed;"></div>
<div class="a" style="left:216px;top:778px;width:29px;height:1.5px;background:#76b9ed;"></div>
<div class="a" style="left:251.25px;top:778px;width:28.75px;height:1.5px;background:#76b9ed;"></div>
<div class="a" style="left:287px;top:778px;width:28.5px;height:1.5px;background:#76b9ed;"></div>
<div class="a" style="left:319.25px;top:778px;width:35.0px;height:1.5px;background:#76b9ed;"></div>
<div class="a" style="left:357.5px;top:778px;width:28.75px;height:1.5px;background:#76b9ed;"></div>
<div class="a" style="left:393px;top:778px;width:28.75px;height:1.5px;background:#76b9ed;"></div>
<div class="a" style="left:428.25px;top:778px;width:28.75px;height:1.5px;background:#76b9ed;"></div>
<div class="a" style="left:463.75px;top:778px;width:28.75px;height:1.5px;background:#76b9ed;"></div>
<svg style="left:186.5px;top:758px" width="19" height="16" viewBox="0 0 19 16"><ellipse cx="9" cy="7" rx="8.5" ry="5.5" fill="#f0f0f0" stroke="#c83028" stroke-width="1.6"/><path d="M6 5L14 13M10 4L11 14" stroke="#2a78d0" stroke-width="1.6"/><circle cx="13.5" cy="13" r="1.8" fill="none" stroke="#2a78d0" stroke-width="1.2"/></svg>
<svg style="left:221.5px;top:757px" width="18" height="18" viewBox="0 0 18 18"><circle cx="9" cy="9" r="8.5" fill="#1f6fd0"/><path d="M2 8C4 3 12 1.5 16 5C14 4.5 12 5.5 12 7L16 12H3Z" fill="#5ab0f4"/><path d="M3.5 9.5H13.5V15H3.5Z" fill="#f4f4f4"/><path d="M3.5 9.5L8.5 13L13.5 9.5" stroke="#b8c4d0" stroke-width="0.8" fill="none"/></svg>
<svg style="left:256.5px;top:757px" width="18" height="18" viewBox="0 0 18 18"><circle cx="9" cy="9" r="8.5" fill="#2c8ce4"/><circle cx="9" cy="9" r="6.8" fill="none" stroke="#bfe0fa" stroke-width="1" stroke-dasharray="1.2 1.6"/><circle cx="9" cy="9" r="4" fill="#f6c22c"/><path d="M9 6V9.5" stroke="#b87808" stroke-width="1"/></svg>
<svg style="left:292px;top:757px" width="19" height="19" viewBox="0 0 19 19"><circle cx="8.5" cy="8.5" r="8.3" fill="#e8453c"/><path d="M8.5 8.5L1.3 4.4A8.3 8.3 0 0 0 8.5 16.8L12.2 10.5Z" fill="#34a853"/><path d="M8.5 8.5L12.2 10.5L8.5 16.8A8.3 8.3 0 0 0 15.7 4.4H8.5Z" fill="#fbbc05"/><circle cx="8.5" cy="8.5" r="3.8" fill="#fff"/><circle cx="8.5" cy="8.5" r="3" fill="#4285f4"/><circle cx="13.5" cy="13.5" r="5" fill="#1c6a50"/></svg>
<div class="t" style="left:803.6px;top:0;display:none"></div>
<div class="t " style="left:303.6px;top:771px;transform-origin:0 50%;transform:translateY(-50%) scaleX(1.0000);font-size:6.5px;letter-spacing:0;color:#e8f0e8;">P</div>
<svg style="left:328px;top:757.5px" width="17" height="16" viewBox="0 0 17 16"><rect x="0" y="0" width="17" height="16" fill="#3a2a7a"/><rect x="1" y="1" width="15" height="14" fill="#4a34a0"/><path d="M3 3L7 6" stroke="#e8d020" stroke-width="1.2"/><circle cx="3.5" cy="3.5" r="1" fill="#f0e040"/></svg>
<div class="t " style="left:332.5px;top:769px;transform-origin:0 50%;transform:translateY(-50%) scaleX(0.9000);font-size:7.5px;letter-spacing:0;color:#f08080;font-family:'Liberation Serif',serif;font-style:italic;font-weight:bold">TeX</div>
<svg style="left:362px;top:757.5px" width="19" height="17" viewBox="0 0 19 17"><path d="M1 1C5 2 8 5 8 8C8 12 5 15 1 16V12L4 8.5L1 5ZM18 1C14 2 11 5 11 8C11 12 14 15 18 16V12L15 8.5L18 5Z" fill="#5a6a9c"/><path d="M8.3 3H10.7V15H8.3Z" fill="#3a4878"/></svg>
<svg style="left:397px;top:757px" width="20" height="18" viewBox="0 0 20 18"><circle cx="14.5" cy="4.5" r="2.8" fill="#7b83eb"/><circle cx="9" cy="3.5" r="3.2" fill="#5059c9"/><rect x="11" y="7" width="8" height="8" rx="2.5" fill="#7b83eb"/><rect x="4" y="6.5" width="10" height="10" rx="2" fill="#5059c9"/><rect x="0.5" y="5" width="9.5" height="9.5" rx="1.2" fill="#4b53bc"/><path d="M2.8 7.5H7.8M5.3 7.5V12.5" stroke="#fff" stroke-width="1.4"/><circle cx="15.5" cy="14" r="3.6" fill="#d83030" stroke="#fff" stroke-width="0.8"/><rect x="13.5" y="13.3" width="4" height="1.4" fill="#fff"/></svg>
<svg style="left:435px;top:756.5px" width="14" height="18" viewBox="0 0 14 18"><path d="M0.5 0.5H9.5L13.5 4.5V17.5H0.5Z" fill="#1c99e0"/><path d="M9.5 0.5V4.5H13.5Z" fill="#8fd0f4"/><rect x="2.5" y="6.5" width="9" height="8.5" fill="#fff"/><path d="M3.5 8.2H10.5M3.5 10H10.5M3.5 11.8H10.5M3.5 13.6H8" stroke="#1c99e0" stroke-width="0.9"/></svg>
<svg style="left:469.5px;top:757px" width="17.5" height="17.5" viewBox="0 0 17.5 17.5"><rect x="0" y="0" width="17.5" height="17.5" rx="2.5" fill="#d81e0c"/><path d="M4 13C7 9 8.5 5.5 8.2 4C7.6 3.4 7.2 5 8 7.5C9 10 12 11.5 13.8 11C14 10 9 10 4 13Z" stroke="#fff" stroke-width="1.1" fill="none"/></svg>
<svg style="left:1336.5px;top:763.5px" width="8.5" height="5" viewBox="0 0 8.5 5"><path d="M0.5 4.5L4.2 0.8L8 4.5" stroke="#f0f0f0" stroke-width="1.1" fill="none"/></svg>
<svg style="left:1352px;top:761px" width="12" height="10" viewBox="0 0 12 10"><path d="M0.5 3.5H2.5L5 1V9L2.5 6.5H0.5Z" fill="none" stroke="#f0f0f0" stroke-width="0.9"/><path d="M6.8 3.2A2.5 2.5 0 0 1 6.8 6.8M8.3 1.8A4.5 4.5 0 0 1 8.3 8.2M9.9 0.6A6.3 6.3 0 0 1 9.9 9.4" stroke="#f0f0f0" stroke-width="0.8" fill="none"/></svg>
<svg style="left:1369px;top:762px" width="13" height="8" viewBox="0 0 13 8"><rect x="3.5" y="1.5" width="8.5" height="5.5" fill="#f0f0f0" opacity="0.85"/><rect x="12" y="3" width="1" height="2.5" fill="#f0f0f0"/><path d="M0.5 1.5H3.5V4M2 0V1.5" stroke="#f0f0f0" stroke-width="0.9" fill="none"/></svg>
<svg style="left:1389px;top:759.5px" width="13" height="13" viewBox="0 0 13 13"><path d="M2 11C0.5 10 1 8 2.5 7L8 2.5C10 1 12 3 10.5 5L5 9.5" stroke="#f0f0f0" stroke-width="1.1" fill="none"/><path d="M6.5 6.5C8 5 10.5 6 9 8" stroke="#f0f0f0" stroke-width="0.9" fill="none"/></svg>
<div class="t " style="left:1420px;top:758.8px;transform-origin:0 50%;transform:translateY(-50%) scaleX(0.9102);font-size:9px;letter-spacing:0;color:#fff;">09:34</div>
<div class="t " style="left:1412px;top:772px;transform-origin:0 50%;transform:translateY(-50%) scaleX(0.8325);font-size:9px;letter-spacing:0;color:#fff;">16.06.2021</div>
<svg style="left:1463px;top:760px" width="12" height="12" viewBox="0 0 12 12"><path d="M0.5 0.5H11.5V8.5H7.5L6 10.5L4.5 8.5H0.5Z" fill="none" stroke="#f0f0f0" stroke-width="1"/></svg>
<div class="a" style="left:446.6px;top:780.5px;width:160.10000000000002px;height:86.5px;background:#2b2b2b;"></div>
<div class="a" style="left:606.7px;top:780.5px;width:160.0999999999999px;height:86.5px;background:#202020;"></div>
<div class="a" style="left:766.8px;top:780.5px;width:161.20000000000005px;height:86.5px;background:#262626;"></div>
<div class="a" style="left:928px;top:780.5px;width:160px;height:86.5px;background:#1c1c1c;"></div>
<div class="a" style="left:1088px;top:780.5px;width:160.5px;height:86.5px;background:#202020;"></div>
<div class="a" style="left:1248.5px;top:780.5px;width:161.20000000000005px;height:86.5px;background:#1e1e1e;"></div>
<div class="a" style="left:1409.7px;top:780.5px;width:160.0999999999999px;height:86.5px;background:#1b1b1b;"></div>
<div class="a" style="left:61.400000000000006px;top:799.7px;width:48px;height:48px;border-radius:50%;background:#464775"></div>
<div class="t " style="left:-414.6px;width:1000px;text-align:center;top:824.2px;transform-origin:50% 50%;transform:translateY(-50%) scaleX(0.9607);font-size:13.5px;letter-spacing:0;color:#fff;-webkit-text-stroke:0.35px #fff">+17</div>
<div class="a" style="left:141.5px;top:799.7px;width:48px;height:48px;border-radius:50%;background:#dde2d6"></div>
<div class="t " style="left:-334.5px;width:1000px;text-align:center;top:824.2px;transform-origin:50% 50%;transform:translateY(-50%) scaleX(1.0586);font-size:17px;letter-spacing:0;color:#3c4a1a;-webkit-text-stroke:0.35px #3c4a1a">NK</div>
<div class="a" style="left:221.5px;top:799.7px;width:48px;height:48px;border-radius:50%;background:#f8e7c2"></div>
<div class="t " style="left:-254.5px;width:1000px;text-align:center;top:824.2px;transform-origin:50% 50%;transform:translateY(-50%) scaleX(1.0748);font-size:17px;letter-spacing:0;color:#7a5612;-webkit-text-stroke:0.35px #7a5612">ΔΣ</div>
<div class="a" style="left:302px;top:799.7px;width:48px;height:48px;border-radius:50%;background:#d4e4da"></div>
<div class="t " style="left:-174px;width:1000px;text-align:center;top:824.2px;transform-origin:50% 50%;transform:translateY(-50%) scaleX(1.0142);font-size:17px;letter-spacing:0;color:#1c4a32;-webkit-text-stroke:0.35px #1c4a32">PK</div>
<div class="a" style="left:382px;top:799.7px;width:48px;height:48px;border-radius:50%;background:#cfead8"></div>
<div class="t " style="left:-94px;width:1000px;text-align:center;top:824.2px;transform-origin:50% 50%;transform:translateY(-50%) scaleX(1.0980);font-size:17px;letter-spacing:0;color:#165030;-webkit-text-stroke:0.35px #165030">MP</div>
<div class="a" style="left:662.7px;top:799.7px;width:48px;height:48px;border-radius:50%;background:#e6e3f3"></div>
<div class="t " style="left:186.70000000000005px;width:1000px;text-align:center;top:824.2px;transform-origin:50% 50%;transform:translateY(-50%) scaleX(1.1368);font-size:17px;letter-spacing:0;color:#2e2e60;-webkit-text-stroke:0.35px #2e2e60">ΆM</div>
<div class="a" style="left:823.3px;top:799.7px;width:48px;height:48px;border-radius:50%;background:#e6e3f3"></div>
<div class="t " style="left:347.29999999999995px;width:1000px;text-align:center;top:824.2px;transform-origin:50% 50%;transform:translateY(-50%) scaleX(1.1023);font-size:17px;letter-spacing:0;color:#2e2e60;-webkit-text-stroke:0.35px #2e2e60">BA</div>
<div class="a" style="left:984px;top:799.7px;width:48px;height:48px;border-radius:50%;background:#fde7cc"></div>
<div class="t " style="left:508px;width:1000px;text-align:center;top:824.2px;transform-origin:50% 50%;transform:translateY(-50%) scaleX(1.0370);font-size:17px;letter-spacing:0;color:#8a5c1a;-webkit-text-stroke:0.35px #8a5c1a">FH</div>
<div class="a" style="left:1144.6px;top:799.7px;width:48px;height:48px;border-radius:50%;background:#cce9db"></div>
<div class="t " style="left:668.5999999999999px;width:1000px;text-align:center;top:824.2px;transform-origin:50% 50%;transform:translateY(-50%) scaleX(1.0803);font-size:17px;letter-spacing:0;color:#1a5c3c;-webkit-text-stroke:0.35px #1a5c3c">AB</div>
<svg style="left:502.59999999999997px;top:799.4px" width="48.4" height="48.4" viewBox="0 0 48 48"><defs><clipPath id="cj"><circle cx="24" cy="24" r="24"/></clipPath><filter id="fj" x="-10%" y="-10%" width="120%" height="120%"><feGaussianBlur stdDeviation="0.85"/></filter></defs><g clip-path="url(#cj)"><g filter="url(#fj)"><rect x="-4" y="-4" width="56" height="56" fill="#8a5c30"/><path d="M-4 -4H20V6L4 14L-4 18Z" fill="#efe0c4"/><path d="M18 -4H52V18L30 16L18 6Z" fill="#e8a274"/><path d="M30 15L52 12V46H30Z" fill="#dcdcd4"/><path d="M0 14L16 8V12L0 20Z" fill="#a87840"/><path d="M0 21L15 17V20L0 25Z" fill="#e0c08a"/><path d="M0 26L15 23V26L0 30Z" fill="#5a3818"/><path d="M0 30L15 27V31L0 35Z" fill="#e8d4a8"/><path d="M2 36L15 33V36L4 40Z" fill="#6a4420"/><path d="M5 41L16 37V40L8 44Z" fill="#d8c8a0"/><ellipse cx="23.5" cy="25" rx="9.8" ry="13" fill="#c48e6c"/><ellipse cx="23" cy="15" rx="8.5" ry="5" fill="#d6b494"/><ellipse cx="23" cy="11.5" rx="7.5" ry="2.5" fill="#b8a48c"/><rect x="14.5" y="20.5" width="18" height="2.2" fill="#6a5a54"/><ellipse cx="19" cy="22" rx="3" ry="1.8" fill="#8a7a78"/><ellipse cx="28" cy="22" rx="3" ry="1.8" fill="#8a7a78"/><path d="M19.5 30.5Q23.5 33 28 30.5" stroke="#8a5040" stroke-width="1.2" fill="none"/><path d="M6 44L15 36L23 41L32 35L42 42L36 52H10Z" fill="#b4c4d6"/><path d="M10 42L14 40M16 46L20 43M26 44L30 41M32 47L36 43M22 48L25 46" stroke="#4a5a72" stroke-width="1.6"/><path d="M17 38Q23.5 43 30 37L28 35Q23 39 19 35.5Z" fill="#b07c5c"/></g></g></svg>
<svg style="left:1305.1px;top:799.3px" width="48.4" height="48.4" viewBox="0 0 48 48"><defs><clipPath id="cr"><circle cx="24" cy="24" r="24"/></clipPath><filter id="fr" x="-10%" y="-10%" width="120%" height="120%"><feGaussianBlur stdDeviation="1.0"/></filter></defs><g clip-path="url(#cr)"><g filter="url(#fr)"><rect x="-4" y="-4" width="56" height="56" fill="#26261f"/><path d="M6 2H44V7H6Z" fill="#a8a8a4"/><rect x="0" y="15" width="8" height="5" fill="#a4c4d8"/><rect x="0" y="20" width="8" height="6" fill="#3e8a84"/><rect x="1" y="27" width="6" height="10" fill="#7a8478"/><rect x="9" y="6" width="15" height="14" fill="#5a5230"/><path d="M14 8L18 6L20 14L15 15Z" fill="#c8a860"/><rect x="24.5" y="6" width="9" height="40" fill="#a4b0bc"/><rect x="25" y="6.5" width="8" height="3.5" fill="#e25cc0"/><rect x="25.5" y="11" width="7" height="5" fill="#7a9ad0"/><rect x="26" y="17" width="6" height="5" fill="#8a949c"/><rect x="25.5" y="28" width="7" height="0.8" fill="#7a848c"/><rect x="25.5" y="35" width="7" height="0.8" fill="#7a848c"/><path d="M34 6H42L46 14H34Z" fill="#dcd0b4"/><rect x="34" y="15" width="14" height="2" fill="#c8c0a8"/><rect x="35" y="18" width="3" height="8" fill="#c06a28"/><rect x="39" y="17" width="3" height="9" fill="#4a8a90"/><rect x="43" y="16" width="3" height="10" fill="#d05a28"/><rect x="34" y="27" width="14" height="2" fill="#b8b0a0"/><rect x="35" y="30" width="3" height="9" fill="#c89048"/><rect x="39" y="31" width="3" height="8" fill="#8a8078"/><rect x="42.5" y="30" width="3" height="9" fill="#a85a30"/><ellipse cx="22.8" cy="17.5" rx="3" ry="3.8" fill="#c89a80"/><ellipse cx="22.5" cy="14.3" rx="3" ry="1.5" fill="#2a2018"/><path d="M11 50V27Q13 22 19 21.5L24 23Q27 25 27 30V50Z" fill="#101012"/><ellipse cx="27.5" cy="44" rx="1.5" ry="2" fill="#d88a50"/><rect x="-4" y="-4" width="56" height="56" fill="#000" opacity="0.22"/></g></g></svg>
<div class="a" style="left:1465.6000000000001px;top:799.2px;width:48.6px;height:48.6px;border-radius:50%;background:#8cc01e"></div>
<div class="a" style="left:1467.6000000000001px;top:801.2px;width:44.6px;height:44.6px;border-radius:50%;background:#fbfdf4"></div>
<svg style="left:1469.1000000000001px;top:802.7px" width="41.6" height="41.6" viewBox="0 0 48 48"><defs><clipPath id="cp"><circle cx="24" cy="24" r="24"/></clipPath><filter id="fp" x="-10%" y="-10%" width="120%" height="120%"><feGaussianBlur stdDeviation="1.25"/></filter></defs><g clip-path="url(#cp)"><g filter="url(#fp)"><rect x="-4" y="-4" width="56" height="56" fill="#ebe4cf"/><rect x="-2" y="0" width="12" height="34" fill="#f2ecdc"/><rect x="36" y="4" width="12" height="30" fill="#e6dec4"/><path d="M0 31Q9 27 15 37L12 48H0Z" fill="#c8a05c"/><rect x="9" y="27" width="5" height="9" fill="#d4dcd8"/><ellipse cx="24.5" cy="23" rx="13" ry="16.5" fill="#dba690"/><ellipse cx="24.5" cy="15" rx="11" ry="6.5" fill="#e6b8a2"/><path d="M11.5 16Q10.5 1 24.5 0.5Q38.5 1 37.5 16Q35 8.5 24.5 8.5Q14 8.5 11.5 16Z" fill="#4e4c48"/><ellipse cx="11.2" cy="24" rx="1.8" ry="3.4" fill="#d29a86"/><ellipse cx="37.8" cy="24" rx="1.8" ry="3.4" fill="#d29a86"/><ellipse cx="19" cy="20" rx="3" ry="1.5" fill="#7a5648"/><ellipse cx="30" cy="20" rx="3" ry="1.5" fill="#7a5648"/><path d="M22.5 27.5Q24.5 29 26.5 27.5" stroke="#a86858" stroke-width="1.4" fill="none"/><path d="M19 32Q24.5 35 30 32" stroke="#a8504c" stroke-width="1.7" fill="none"/><path d="M2 54L9 43L17 37.5L24 47L34 35.5L43 41L48 54Z" fill="#fbfbfb"/><path d="M17.5 38.5Q24.5 41 32 37L27 47H22Z" fill="#c08470"/><rect x="27.5" y="45.5" width="4" height="2.5" fill="#3a4868"/></g></g></svg>
<div class="t " style="left:456.3px;top:857.4px;transform-origin:0 50%;transform:translateY(-50%) scaleX(0.8890);font-size:9.5px;letter-spacing:0;color:#fff;-webkit-text-stroke:0.3px #fff">Jacek Jakiela</div>
<div class="t " style="left:616.4px;top:857.4px;transform-origin:0 50%;transform:translateY(-50%) scaleX(0.9962);font-size:9.5px;letter-spacing:0;color:#fff;-webkit-text-stroke:0.3px #fff">Άγγελος Μαρκόπουλος</div>
<div class="t " style="left:777.3px;top:857.4px;transform-origin:0 50%;transform:translateY(-50%) scaleX(0.9264);font-size:9.5px;letter-spacing:0;color:#fff;-webkit-text-stroke:0.3px #fff">Bahman Azarhoushang</div>
<div class="t " style="left:937.6px;top:857.4px;transform-origin:0 50%;transform:translateY(-50%) scaleX(0.9661);font-size:9.5px;letter-spacing:0;color:#fff;-webkit-text-stroke:0.3px #fff">faramarz hojati</div>
<div class="t " style="left:1098.5px;top:857.4px;transform-origin:0 50%;transform:translateY(-50%) scaleX(0.9267);font-size:9.5px;letter-spacing:0;color:#fff;-webkit-text-stroke:0.3px #fff">Alice Benini</div>
<div class="t " style="left:1258.7px;top:857.4px;transform-origin:0 50%;transform:translateY(-50%) scaleX(0.9591);font-size:9.5px;letter-spacing:0;color:#fff;-webkit-text-stroke:0.3px #fff">Roman Wdowik</div>
<div class="t " style="left:1419.4px;top:857.4px;transform-origin:0 50%;transform:translateY(-50%) scaleX(0.9488);font-size:9.5px;letter-spacing:0;color:#fff;-webkit-text-stroke:0.3px #fff">Piotr Nazarko</div>
<div class="a" style="left:0px;top:866.6px;width:1600px;height:33.4px;background:#1f2124;"></div>
<svg style="left:12.5px;top:877.0px" width="14" height="14" viewBox="0 0 14 14"><path d="M0 1.9600000000000002L6.4 0.56V6.4H0ZM7.6 0.42L14 0V6.4H7.6ZM0 7.6H6.4V13.44L0 12.04ZM7.6 7.6H14V14L7.6 13.58Z" fill="#fff"/></svg>
<div class="a" style="left:40px;top:867px;width:240px;height:33px;background:#f2f2f2;"></div>
<svg style="left:49.5px;top:876.5px" width="15" height="15" viewBox="0 0 15 15"><circle cx="9" cy="5.5" r="4.6" fill="none" stroke="#222" stroke-width="1.2"/><path d="M5.8 8.8L0.8 13.8" stroke="#222" stroke-width="1.3"/></svg>
<div class="t " style="left:73.3px;top:884.2px;transform-origin:0 50%;transform:translateY(-50%) scaleX(0.9500);font-size:12.5px;letter-spacing:0;color:#222;">Wyszukaj</div>
<svg style="left:214px;top:866px" width="66" height="34" viewBox="0 0 66 34"><path d="M4 27H66V34H0Z" fill="#e8c894"/><path d="M12 12L24 15V28L12 25Z" fill="#f4f4ec" stroke="#3a8a4a" stroke-width="1.5"/><path d="M24 15L36 12V25L24 28Z" fill="#fbfbf4" stroke="#3a8a4a" stroke-width="1.5"/><path d="M22 22L34 6L37 8L25 24Z" fill="#f0a030"/><path d="M34 6L35.5 3.5L38.5 5.5L37 8Z" fill="#e85050"/><rect x="41.5" y="8" width="15" height="22" rx="5" fill="#2a7ae8"/><rect x="44" y="3" width="10" height="8" rx="4" fill="none" stroke="#1a5ac0" stroke-width="1.6"/><rect x="42.5" y="19" width="13" height="10" rx="3" fill="#5aa8f8"/><rect x="43" y="28" width="12" height="2" fill="#c040c0"/></svg>
<svg style="left:294px;top:878.5px" width="12" height="11" viewBox="0 0 12 11"><rect x="2.5" y="2.5" width="7" height="6" fill="none" stroke="#f0f0f0" stroke-width="1.1"/><path d="M0.5 1V3M0.5 8V10M11.5 1V3M11.5 8V10M11.5 4.5V6.5" stroke="#f0f0f0" stroke-width="1.1"/><path d="M2.5 0.6H9.5M2.5 10.4H9.5" stroke="#f0f0f0" stroke-width="1"/></svg>
<div class="a" style="left:328px;top:898px;width:31px;height:2px;background:#76b9ed;"></div>
<div class="a" style="left:530.5px;top:898px;width:31.5px;height:2px;background:#76b9ed;"></div>
<div class="a" style="left:570.7px;top:898px;width:33.299999999999955px;height:2px;background:#76b9ed;"></div>
<div class="a" style="left:612px;top:898px;width:32.700000000000045px;height:2px;background:#76b9ed;"></div>
<div class="a" style="left:652px;top:898px;width:33.39999999999998px;height:2px;background:#76b9ed;"></div>
<div class="a" style="left:693.3px;top:898px;width:32.700000000000045px;height:2px;background:#76b9ed;"></div>
<div class="a" style="left:730.8px;top:898px;width:39.90000000000009px;height:2px;background:#76b9ed;"></div>
<div class="a" style="left:730.8px;top:866.6px;width:40px;height:31.5px;background:#3c3d40;"></div>
<svg style="left:333px;top:875px" width="20" height="19" viewBox="0 0 20 19"><rect x="6" y="0.5" width="12" height="13" fill="#1490df"/><rect x="6" y="0.5" width="6" height="4.5" fill="#28a8ea"/><rect x="12" y="5" width="6" height="4.5" fill="#0a64b0"/><rect x="0.5" y="3.5" width="9.5" height="9.5" rx="1" fill="#0f6cbd"/><circle cx="5.2" cy="8.2" r="2.4" fill="none" stroke="#fff" stroke-width="1.3"/><rect x="9" y="11" width="11" height="8" fill="#f0c890"/><path d="M9 11L14.5 15.5L20 11" stroke="#c08a48" stroke-width="0.9" fill="none"/></svg>
<svg style="left:373.5px;top:874.5px" width="19" height="19" viewBox="0 0 19 19"><circle cx="9.5" cy="9.5" r="9" fill="#1b74d4"/><path d="M1 9.5A8.5 8.5 0 0 1 18 8C16 4.5 9 4 6.5 8.5C5 12 7 16 12 17.5C6 19.5 1 15 1 9.5Z" fill="#35c2a8"/><path d="M7 9.5C8 6.5 13.5 6.5 14.5 10C14.5 12 12 12.5 11 11.5C11.5 14 15 14.5 17.5 12.5A9 9 0 0 1 10 18.4C6 16.5 5.5 12 7 9.5Z" fill="#0c59a4"/></svg>
<svg style="left:413.5px;top:876px" width="20" height="16" viewBox="0 0 20 16"><path d="M0.5 4.5L10 0.5L19.5 4.5V15.5H0.5Z" fill="#1f86e0"/><path d="M0.5 4.5L10 11L19.5 4.5V6L10 12.5L0.5 6Z" fill="#9fd4fb"/><path d="M0.5 15.5L8 9.5M19.5 15.5L12 9.5" stroke="#5ab2f2" stroke-width="0.8"/></svg>
<svg style="left:455.5px;top:874.5px" width="19" height="19" viewBox="0 0 19 19"><path d="M1.5 5.5H17.5L16.5 18H2.5Z" fill="#f4f4f4"/><path d="M6 5.5V3.5C6 0.5 13 0.5 13 3.5V5.5" stroke="#1a9af0" stroke-width="1.5" fill="none"/><rect x="5.8" y="8" width="3.2" height="3.2" fill="#f25022"/><rect x="10" y="8" width="3.2" height="3.2" fill="#7fba00"/><rect x="5.8" y="12.2" width="3.2" height="3.2" fill="#00a4ef"/><rect x="10" y="12.2" width="3.2" height="3.2" fill="#ffb900"/></svg>
<svg style="left:496px;top:874px" width="20" height="20" viewBox="0 0 20 20"><rect x="0" y="0" width="20" height="20" fill="#f4f4f4"/><rect x="0.5" y="0.5" width="9" height="9" fill="#2a6ad0"/><rect x="10.5" y="0.5" width="9" height="9" fill="#d83030"/><rect x="0.5" y="10.5" width="9" height="9" fill="#f0a818"/><rect x="10.5" y="10.5" width="9" height="9" fill="#38a048"/></svg>
<div class="t" style="left:498.5px;top:875px;font-size:9px;font-weight:bold;color:#fff">f</div>
<div class="t" style="left:508.5px;top:875px;font-size:9px;font-weight:bold;color:#fff">r</div>
<div class="t" style="left:498.5px;top:885px;font-size:9px;font-weight:bold;color:#fff">s</div>
<div class="t" style="left:508.5px;top:885px;font-size:9px;font-weight:bold;color:#fff">e</div>
<svg style="left:536.5px;top:875.5px" width="20" height="17" viewBox="0 0 20 17"><path d="M0.5 1.5H7L8.5 3.5H19.5V15.5H0.5Z" fill="#f0b828"/><path d="M0.5 5H19.5V16H0.5Z" fill="#fcd462"/><rect x="5.5" y="10" width="9" height="6.5" fill="#2a8ae8"/><rect x="7.5" y="12.5" width="5" height="4" fill="#fcd462"/></svg>
<svg style="left:576.5px;top:874.5px" width="22" height="20" viewBox="0 0 22 20"><circle cx="15.5" cy="5" r="3" fill="#7b83eb"/><circle cx="9.5" cy="4" r="3.5" fill="#5059c9"/><rect x="12" y="8" width="9" height="9" rx="2.8" fill="#7b83eb"/><rect x="4.5" y="7.5" width="11" height="11" rx="2.2" fill="#5059c9"/><rect x="0.5" y="5.5" width="10.5" height="10.5" rx="1.3" fill="#4b53bc"/><path d="M3 8.3H8.5M5.8 8.3V13.8" stroke="#fff" stroke-width="1.5"/><circle cx="17" cy="16" r="3.6" fill="#6bb700" stroke="#1f2124" stroke-width="0.6"/><path d="M15.3 16L16.6 17.3L18.8 14.9" stroke="#fff" stroke-width="0.9" fill="none"/></svg>
<svg style="left:618px;top:874px" width="20" height="20" viewBox="0 0 20 20"><circle cx="10" cy="10" r="9.6" fill="#e8453c"/><path d="M10 10L1.7 5.2A9.6 9.6 0 0 0 10 19.6L14.3 12.4Z" fill="#34a853"/><path d="M10 10L14.3 12.4L10 19.6A9.6 9.6 0 0 0 18.3 5.2H10Z" fill="#fbbc05"/><circle cx="10" cy="10" r="4.5" fill="#fff"/><circle cx="10" cy="10" r="3.6" fill="#4285f4"/></svg>
<svg style="left:659.5px;top:874.5px" width="19" height="19" viewBox="0 0 19 19"><circle cx="9.5" cy="9.5" r="9.2" fill="#f4a020"/><path d="M9.5 0.3A9.2 9.2 0 0 1 18.7 9.5C17 6 13 4 9.5 5C5 6.5 3 12 6 16.5C2 15 -1 9 2.5 4A9.2 9.2 0 0 1 9.5 0.3Z" fill="#e85020"/><circle cx="9.8" cy="10.5" r="5.6" fill="#5a3ab0"/><rect x="7.5" y="9.8" width="4.6" height="3.8" rx="0.6" fill="#fff"/><path d="M8.4 9.8V8.6A1.4 1.4 0 0 1 11.2 8.6V9.8" stroke="#fff" stroke-width="0.9" fill="none"/></svg>
<svg style="left:700.5px;top:874.5px" width="19" height="19" viewBox="0 0 19 19"><rect x="0" y="0" width="19" height="19" rx="2.5" fill="#1a8cf0"/><path d="M0 15L7 6L12 12L14.5 9.5L19 14V16.5A2.5 2.5 0 0 1 16.5 19H2.5A2.5 2.5 0 0 1 0 16.5Z" fill="#52c4fb"/><path d="M0 17L6 10L13 19H2.5A2.5 2.5 0 0 1 0 17Z" fill="#0f5ec0"/><circle cx="13.5" cy="4.5" r="1.6" fill="#fff"/></svg>
<svg style="left:741px;top:874.5px" width="20" height="20" viewBox="0 0 20 20"><circle cx="10" cy="10" r="8.8" fill="#2a2a2c" stroke="#e88a40" stroke-width="1.8"/><path d="M10 1.2A8.8 8.8 0 0 1 10 18.8" stroke="#b060d0" stroke-width="1.8" fill="none"/><path d="M7.5 5.8L14.3 10L7.5 14.2Z" fill="#fff"/></svg>
<svg style="left:1191.5px;top:874px" width="16" height="20" viewBox="0 0 16 20"><path d="M1 9C1 6 4 6.5 5 8C5.5 5 10.5 5 11 8C12 6.5 15 6 15 9C15 13 11.5 15 8 15C4.5 15 1 13 1 9Z" fill="#f08418"/><path d="M8 15V19.5" stroke="#f08418" stroke-width="1.3"/><circle cx="3" cy="3.5" r="1" fill="#f08418"/><circle cx="8" cy="1.5" r="1" fill="#f08418"/><circle cx="13" cy="3.5" r="1" fill="#f08418"/></svg>
<div class="t " style="left:1216px;top:884.2px;transform-origin:0 50%;transform:translateY(-50%) scaleX(0.9417);font-size:12.5px;letter-spacing:0;color:#fff;">Wysoki poziom pyłków</div>
<svg style="left:1355.5px;top:881px" width="11" height="6.5" viewBox="0 0 11 6.5"><path d="M0.5 6L5.5 1L10.5 6" stroke="#f0f0f0" stroke-width="1.2" fill="none"/></svg>
<svg style="left:1375.5px;top:877px" width="11" height="14" viewBox="0 0 11 14"><rect x="1" y="2.5" width="6.5" height="9" rx="1.5" fill="none" stroke="#f0f0f0" stroke-width="1"/><path d="M7.5 6L10 4.5V9.5L7.5 8M2.5 0.8H6M2.5 13.2H6" stroke="#f0f0f0" stroke-width="0.9" fill="none"/><circle cx="4.2" cy="7" r="1.2" fill="#f0f0f0"/></svg>
<svg style="left:1393.5px;top:879px" width="14" height="9" viewBox="0 0 14 9"><path d="M3 8.5A2.6 2.6 0 0 1 3 3.3A3.6 3.6 0 0 1 9.8 2.6A3 3 0 0 1 11 8.5Z" fill="#f0f0f0"/></svg>
<svg style="left:1415.5px;top:878px" width="12" height="11" viewBox="0 0 12 11"><path d="M1 10A9 9 0 0 1 10.5 1M3.8 10A6.2 6.2 0 0 1 10.5 3.8M6.5 10A3.6 3.6 0 0 1 10.5 6.5" stroke="#f0f0f0" stroke-width="1" fill="none" opacity="0.8"/><circle cx="10" cy="9.5" r="1.2" fill="#f0f0f0"/></svg>
<svg style="left:1433.5px;top:879px" width="14" height="9" viewBox="0 0 14 9"><rect x="3.5" y="1.8" width="9" height="6" fill="none" stroke="#f0f0f0" stroke-width="1"/><rect x="4.8" y="3" width="6.4" height="3.6" fill="#f0f0f0"/><rect x="12.7" y="3.4" width="1.1" height="2.8" fill="#f0f0f0"/><path d="M0.5 2H3V4.5M1.8 0.3V2" stroke="#f0f0f0" stroke-width="0.9" fill="none"/></svg>
<svg style="left:1454px;top:878.5px" width="14" height="11" viewBox="0 0 14 11"><path d="M0.5 3.8H2.8L5.5 1V10L2.8 7.2H0.5Z" fill="none" stroke="#f0f0f0" stroke-width="1"/><path d="M7.5 3.5A2.8 2.8 0 0 1 7.5 7.5M9.2 1.9A5 5 0 0 1 9.2 9.1M11 0.5A7 7 0 0 1 11 10.5" stroke="#f0f0f0" stroke-width="0.8" fill="none" opacity="0.8"/></svg>
<div class="t " style="left:1476.6px;top:884.2px;transform-origin:0 50%;transform:translateY(-50%) scaleX(0.8757);font-size:10.5px;letter-spacing:0;color:#fff;">POL</div>
<div class="t " style="left:1517.3px;top:875.8px;transform-origin:0 50%;transform:translateY(-50%) scaleX(0.8258);font-size:10.5px;letter-spacing:0;color:#fff;">12:53</div>
<div class="t " style="left:1505.5px;top:890.2px;transform-origin:0 50%;transform:translateY(-50%) scaleX(0.8582);font-size:10.5px;letter-spacing:0;color:#fff;">20.10.2023</div>
<svg style="left:1565.5px;top:877px" width="14" height="14" viewBox="0 0 14 14"><path d="M0.5 0.5H13.5V10H6L3 13V10H0.5Z" fill="#f0f0f0"/><path d="M3 3.5H11M3 6H11" stroke="#1f2124" stroke-width="0.9"/><circle cx="11.5" cy="10.5" r="2.6" fill="#1f2124"/><path d="M10 11L11 9.5L13 9.5" stroke="#f0f0f0" stroke-width="0.8" fill="none"/></svg>
<div class="a" style="left:1596.5px;top:867px;width:1px;height:33px;background:#6a6a6a;"></div>
<svg style="left:1405px;top:7.3px" width="9" height="1" viewBox="0 0 9 1"><path d="M0 0.5H8.5" stroke="#222" stroke-width="1.1"/></svg>
<svg style="left:1437.5px;top:3.5px" width="9" height="8.5" viewBox="0 0 9 8.5"><rect x="0.5" y="2" width="6" height="6" fill="none" stroke="#222" stroke-width="1"/><path d="M2.2 2V0.5H8.3V6.3H6.5" fill="none" stroke="#222" stroke-width="1"/></svg>
<svg style="left:1471.2px;top:3.5px" width="7.6" height="7.6" viewBox="0 0 7.6 7.6"><path d="M0 0L7.6 7.6M7.6 0L0 7.6" stroke="#222" stroke-width="1.1" fill="none"/></svg>
<svg style="left:1500px;top:13.2px" width="9" height="1" viewBox="0 0 9 1"><path d="M0 0.5H8.5" stroke="#f0f0f0" stroke-width="1"/></svg>
<svg style="left:1538px;top:9px" width="9.5" height="9.5" viewBox="0 0 9.5 9.5"><rect x="0.5" y="2.5" width="6.5" height="6.5" fill="none" stroke="#f0f0f0" stroke-width="0.9"/><path d="M2.5 2.5V0.5H9V7H7" fill="none" stroke="#f0f0f0" stroke-width="0.9"/></svg>
<svg style="left:1576.7px;top:9.2px" width="8.6" height="8.6" viewBox="0 0 8.6 8.6"><path d="M0 0L8.6 8.6M8.6 0L0 8.6" stroke="#f0f0f0" stroke-width="0.9" fill="none"/></svg>
</div></body></html>
